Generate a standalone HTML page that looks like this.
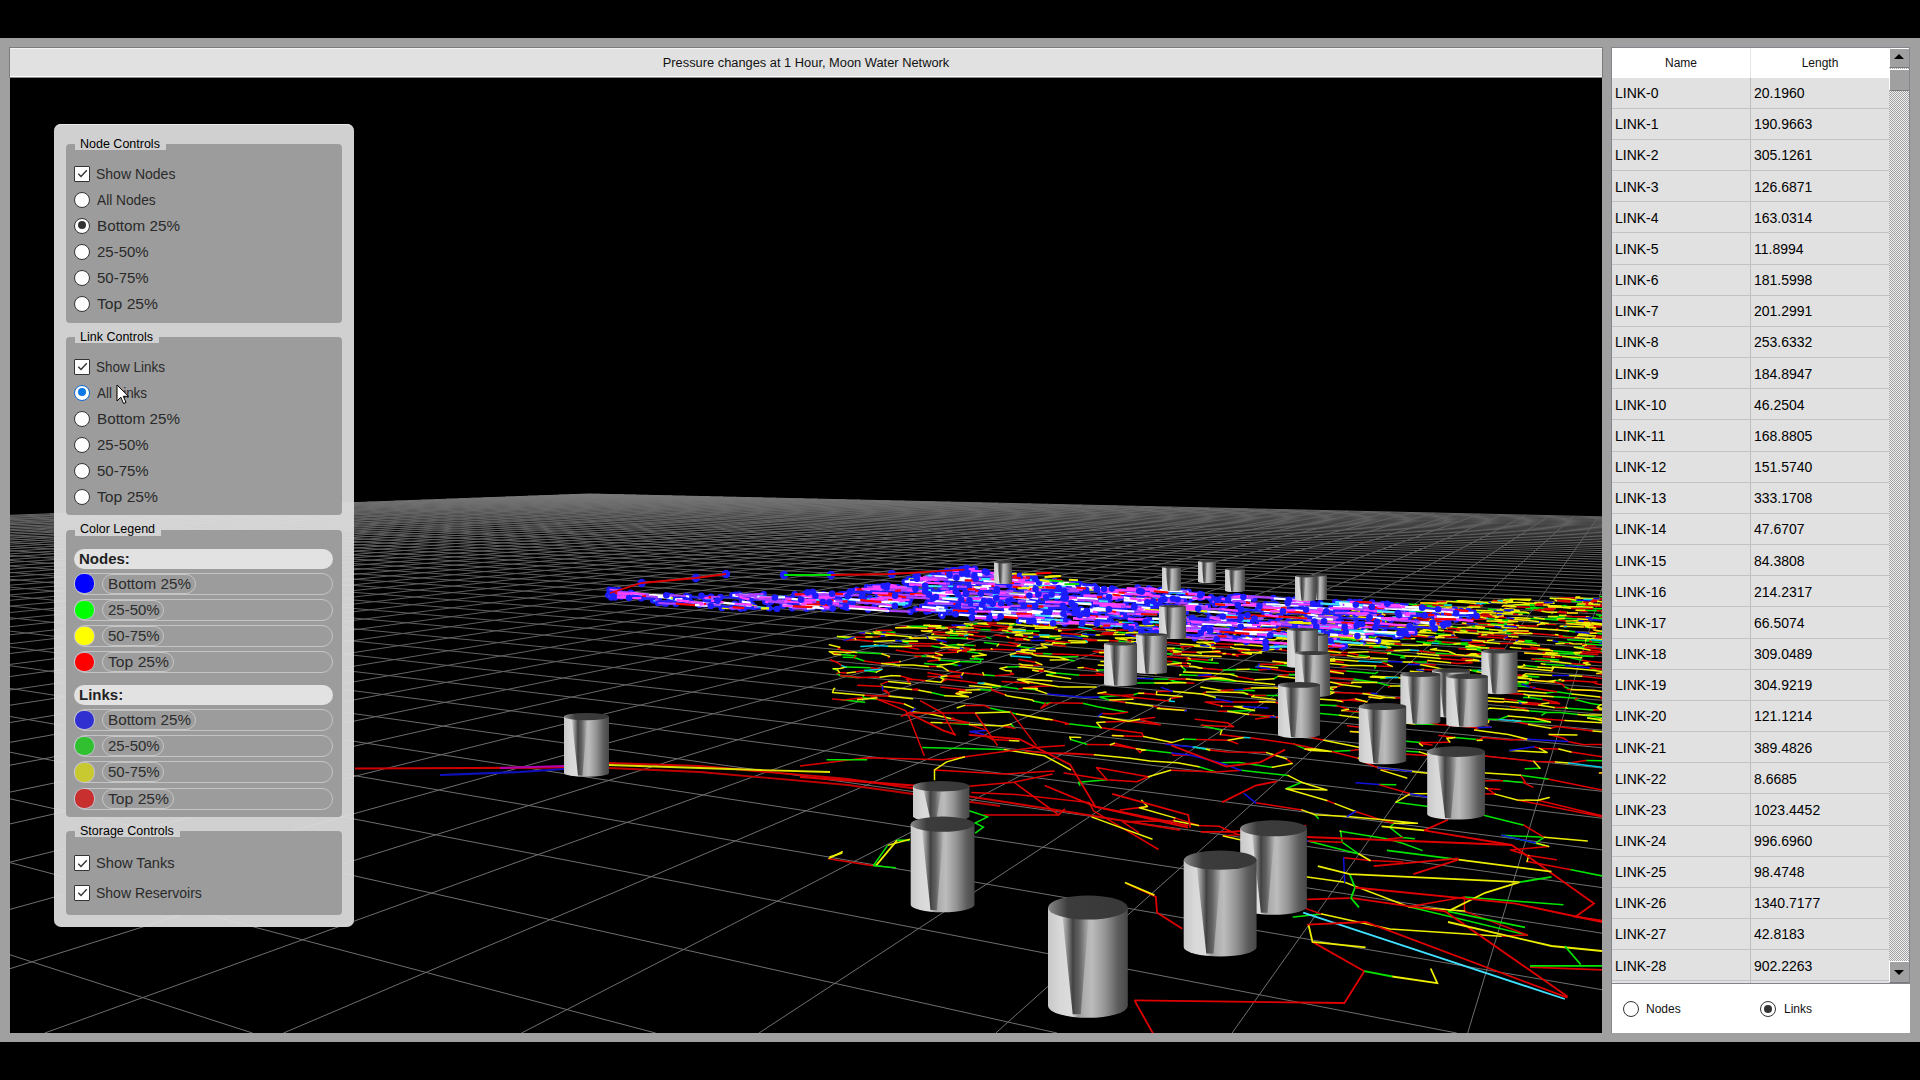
<!DOCTYPE html><html><head><meta charset="utf-8"><style>
*{box-sizing:border-box}
body{margin:0;width:1920px;height:1080px;background:#000;overflow:hidden;position:relative;font-family:"Liberation Sans",sans-serif;color:#1a1a1a}
.a{position:absolute}
#frame{left:0;top:38px;width:1920px;height:1004px;background:#a0a0a0}
#title{left:9px;top:47px;width:1594px;height:31px;background:#e1e1e1;border:1px solid #7c7c7c;border-bottom:1px solid #8a8a8a;box-shadow:inset 0 1px 0 #f2f2f2, inset 0 -1px 0 #fafafa;font-size:12.85px;text-align:center;line-height:30px;color:#111}
#view{left:10px;top:78px;width:1592px;height:955px;background:#000;overflow:hidden}
#tbl{left:1611px;top:47px;width:299px;height:937px;background:#e1e1e1;border:1px solid #82868c;overflow:hidden}
.hdr{top:0;height:30px;background:#fff;font-size:12px;line-height:31px;text-align:center;color:#111}
.cell{font-size:14px;color:#000;white-space:nowrap}
.rowline{left:0;width:277px;height:1px;background:#c3c3c3}
#bot{left:1611px;top:984px;width:299px;height:49px;background:#fff;border-left:1px solid #8a8a8a}
.radio{width:16px;height:16px;border-radius:50%;background:#fff;border:1.3px solid #333}
.radio.on::after{content:"";position:absolute;left:2.7px;top:2.7px;width:8px;height:8px;border-radius:50%;background:#333}
.radio.blue{border:1.5px solid #0b67d6}
.radio.blue::after{content:"";position:absolute;left:2.5px;top:2.5px;width:8px;height:8px;border-radius:50%;background:#0b78e8}
.chk{width:16px;height:16px;background:#fff;border:1.5px solid #333;border-radius:1px}
.lbl{font-size:14px;color:#2a2a2a;white-space:nowrap;line-height:16px}
#panel{left:54px;top:124px;width:300px;height:803px;background:rgba(221,221,221,0.94);border-radius:7px;box-shadow:inset 0 1px 0 #e8e8e8}
.grp{left:12px;width:276px;background:#9c9c9c;border-radius:4px}
.gt{left:21px;font-size:12.5px;color:#000;padding:0 6px 0 5px;line-height:14px;white-space:nowrap}
.pillh{left:20px;width:259px;height:20px;border-radius:10px;background:#e2e2e2;font-weight:bold;font-size:15px;line-height:20px;padding-left:5px;color:#222}
.pill{left:20px;width:259px;height:22px;border-radius:11px;border:1px solid #c4c4c4}
.dot{left:0.3px;top:0.8px;width:18.5px;height:18.5px;border-radius:46%;box-shadow:0 0 0 0.8px #c8c8d8}
.tp{left:27px;top:0px;height:20px;border-radius:10px;border:1px solid #c6c6c6;font-size:14px;line-height:18px;padding:0 5px;color:#2c2c2c;white-space:nowrap}
</style></head><body><div class="a" id="frame"></div><div class="a" id="title">Pressure changes at 1 Hour, Moon Water Network</div><div class="a" id="view"><svg width="1592" height="955" style="position:absolute;left:0;top:0"><defs><linearGradient id="gg" gradientUnits="userSpaceOnUse" x1="0" y1="494" x2="0" y2="760"><stop offset="0" stop-color="#7a7a7a"/><stop offset="0.08" stop-color="#626262"/><stop offset="0.4" stop-color="#5c5c5c"/><stop offset="1" stop-color="#6e6e6e"/></linearGradient><linearGradient id="cg" x1="0" y1="0" x2="1" y2="0"><stop offset="0" stop-color="#c8c8c8"/><stop offset="0.15" stop-color="#d8d8d8"/><stop offset="0.3" stop-color="#dcdcdc"/><stop offset="0.38" stop-color="#9a9a9a"/><stop offset="0.46" stop-color="#b0b0b0"/><stop offset="0.55" stop-color="#bcbcbc"/><stop offset="0.72" stop-color="#939393"/><stop offset="0.88" stop-color="#5c5c5c"/><stop offset="1" stop-color="#484848"/></linearGradient><linearGradient id="wg" x1="0" y1="0" x2="1" y2="0"><stop offset="0" stop-color="#3a3a3a" stop-opacity="0"/><stop offset="0.42" stop-color="#383838" stop-opacity="0.95"/><stop offset="1" stop-color="#3a3a3a" stop-opacity="0"/></linearGradient><linearGradient id="tg" x1="0" y1="0" x2="1" y2="0"><stop offset="0" stop-color="#8a8a8a"/><stop offset="0.25" stop-color="#3c3c3c"/><stop offset="1" stop-color="#383838"/></linearGradient></defs><g transform="translate(-10,-78)"><path d="M589.0 494.0L1602.0 516.8M579.3 494.4L1602.0 517.7M569.4 494.7L1602.0 518.6M559.3 495.1L1602.0 519.4M549.0 495.5L1602.0 520.4M538.5 495.9L1602.0 521.3M527.8 496.2L1602.0 522.3M516.9 496.6L1602.0 523.3M505.8 497.1L1602.0 524.4M494.5 497.5L1602.0 525.4M483.0 497.9L1602.0 526.5M471.2 498.3L1602.0 527.7M459.1 498.8L1602.0 528.9M446.8 499.2L1602.0 530.1M434.3 499.7L1602.0 531.3M421.5 500.2L1602.0 532.6M408.4 500.6L1602.0 534.0M395.0 501.1L1602.0 535.4M381.4 501.6L1602.0 536.8M367.4 502.1L1602.0 538.3M353.2 502.7L1602.0 539.9M338.6 503.2L1602.0 541.5M323.6 503.7L1602.0 543.2M308.3 504.3L1602.0 544.9M292.7 504.9L1602.0 546.7M276.7 505.5L1602.0 548.6M260.3 506.1L1602.0 550.6M243.5 506.7L1602.0 552.6M226.3 507.3L1602.0 554.8M208.7 508.0L1602.0 557.0M190.6 508.6L1602.0 559.3M172.1 509.3L1602.0 561.8M153.1 510.0L1602.0 564.4M133.5 510.7L1602.0 567.1M113.5 511.5L1602.0 569.9M92.9 512.2L1602.0 572.9M71.8 513.0L1602.0 576.0M50.1 513.8L1602.0 579.3M27.8 514.6L1602.0 582.8M10.0 515.7L1602.0 586.5M10.0 517.6L1602.0 590.5M10.0 519.7L1602.0 594.6M10.0 521.9L1602.0 599.1M10.0 524.3L1602.0 603.8M10.0 526.8L1602.0 608.8M10.0 529.5L1602.0 614.2M10.0 532.4L1602.0 620.0M10.0 535.5L1602.0 626.2M10.0 538.8L1602.0 632.9M10.0 542.4L1602.0 640.2M10.0 546.3L1602.0 648.1M10.0 550.6L1602.0 656.7M10.0 555.3L1602.0 666.0M10.0 560.4L1602.0 676.3M10.0 566.1L1602.0 687.7M10.0 572.4L1602.0 700.3M10.0 579.3L1602.0 714.3M10.0 587.2L1602.0 730.1M10.0 596.0L1602.0 747.8M10.0 606.1L1602.0 768.0M10.0 617.7L1602.0 791.3M10.0 631.1L1602.0 818.2M10.0 646.9L1602.0 849.9M10.0 665.7L1602.0 887.6M10.0 688.4L1602.0 933.2M10.0 716.5L1602.0 989.7M10.0 752.2L1456.7 1033.0M10.0 798.8L1057.0 1033.0M10.0 862.6L655.6 1033.0M10.0 954.8L252.5 1033.0M589.0 494.0L10.0 515.3M600.5 494.3L10.0 516.3M612.2 494.5L10.0 517.4M623.9 494.8L10.0 518.6M635.9 495.1L10.0 519.8M647.9 495.3L10.0 521.0M660.0 495.6L10.0 522.3M672.3 495.9L10.0 523.6M684.8 496.2L10.0 524.9M697.4 496.4L10.0 526.4M710.1 496.7L10.0 527.8M722.9 497.0L10.0 529.3M735.9 497.3L10.0 530.9M749.1 497.6L10.0 532.6M762.4 497.9L10.0 534.3M775.8 498.2L10.0 536.1M789.5 498.5L10.0 538.0M803.2 498.8L10.0 540.0M817.2 499.1L10.0 542.0M831.3 499.5L10.0 544.2M845.5 499.8L10.0 546.4M860.0 500.1L10.0 548.8M874.6 500.4L10.0 551.2M889.4 500.8L10.0 553.8M904.3 501.1L10.0 556.6M919.5 501.4L10.0 559.5M934.8 501.8L10.0 562.5M950.3 502.1L10.0 565.8M966.0 502.5L10.0 569.2M982.0 502.9L10.0 572.8M998.1 503.2L10.0 576.7M1014.4 503.6L10.0 580.8M1030.9 504.0L10.0 585.2M1047.7 504.3L10.0 589.9M1064.6 504.7L10.0 594.9M1081.8 505.1L10.0 600.3M1099.2 505.5L10.0 606.2M1116.9 505.9L10.0 612.5M1134.7 506.3L10.0 619.3M1152.9 506.7L10.0 626.7M1171.2 507.1L10.0 634.8M1189.8 507.5L10.0 643.7M1208.7 508.0L10.0 653.5M1227.8 508.4L10.0 664.4M1247.2 508.8L10.0 676.5M1266.8 509.3L10.0 690.0M1286.8 509.7L10.0 705.2M1307.0 510.2L10.0 722.5M1327.5 510.6L10.0 742.3M1348.3 511.1L10.0 765.2M1369.4 511.6L10.0 792.1M1390.8 512.1L10.0 823.9M1412.5 512.6L10.0 862.2M1434.5 513.1L10.0 909.4M1456.9 513.6L10.0 968.7M1479.6 514.1L44.8 1033.0M1502.6 514.6L283.5 1033.0M1526.0 515.1L521.5 1033.0M1549.8 515.6L759.0 1033.0M1573.9 516.2L995.8 1033.0M1598.4 516.7L1232.1 1033.0M1602.0 587.8L1467.7 1033.0" stroke="url(#gg)" stroke-width="1" fill="none"/><path d="M1290.4 625.3L1299.6 626.5M1309.6 625.1L1314.7 624.7M1314.7 624.7L1322.8 625.1M1321.3 625.5L1328.1 626.3M1328.1 626.3L1320.2 626.2M1326.8 624.7L1334.7 625.5M1357.5 628.6L1361.2 628.7M1361.2 628.7L1367.8 629.3M1328.2 627.9L1324.9 627.9M1341.3 624.8L1338.1 624.7M1341.3 624.8L1348.4 624.6M1361.5 625.3L1359.0 624.9M1340.4 623.4L1339.0 623.5M1375.9 625.3L1380.9 626.4M1389.7 627.2L1394.8 627.3M1400.2 625.7L1403.6 625.8M1410.2 625.6L1412.9 625.0M1429.4 627.5L1436.5 628.4M1441.2 630.5L1431.2 630.1M1432.1 630.8L1430.6 630.8M1430.6 630.8L1425.5 631.0M1429.4 627.5L1437.7 627.4M1278.8 626.5L1271.9 626.1M1256.6 626.1L1255.0 626.3M1243.7 626.2L1238.6 625.9M1280.2 628.6L1275.4 629.0M1452.1 626.8L1457.9 627.4M1471.1 626.7L1475.7 626.3M1471.1 626.7L1484.3 627.6M1483.7 628.5L1489.6 629.6M1503.4 630.4L1509.7 631.1M1515.0 632.4L1514.3 633.1M1514.5 633.7L1506.0 633.1M1492.6 632.5L1486.6 632.6M1477.9 631.7L1477.0 631.0M1466.1 630.2L1456.5 629.9M1477.0 631.0L1478.0 630.0M1301.6 633.1L1314.0 633.8M1314.0 633.8L1325.3 634.7M1365.1 637.9L1375.9 638.3M1402.1 644.9L1397.5 645.2M1397.5 645.2L1389.3 644.5M1389.3 644.5L1386.2 644.9M1363.0 643.7L1361.3 644.4M1386.6 647.6L1372.6 647.2M1323.8 635.4L1315.2 635.8M1315.2 635.8L1324.6 637.1M1375.3 637.1L1359.8 636.5M1337.4 636.9L1340.3 638.3M1308.9 632.1L1297.8 630.8M1297.8 630.8L1293.7 630.0M1297.1 630.0L1297.6 629.1M1356.6 639.7L1352.8 640.2M1327.3 630.2L1340.8 630.8M1304.4 638.2L1307.3 639.0M1305.8 637.8L1319.1 638.4M1290.7 638.1L1289.5 639.0M1216.8 634.7L1203.2 633.1M1203.2 633.1L1200.0 632.4M1183.2 628.4L1186.3 628.2M1450.4 625.1L1446.7 624.6M1446.7 624.6L1448.5 624.6M1238.6 625.9L1226.7 626.1M1214.0 624.9L1219.0 624.7M1214.1 624.9L1208.4 625.1M1264.1 640.9L1271.7 642.4M1406.7 632.1L1395.5 631.6M1435.8 633.5L1451.9 635.1M1411.5 638.8L1400.9 639.0M1154.7 632.4L1161.7 633.5M1172.7 633.3L1177.5 633.6M1126.4 633.0L1117.4 632.2M1102.4 633.3L1105.6 634.2M1082.7 634.0L1086.3 633.4M1126.6 642.4L1118.6 642.5M1150.2 645.4L1157.1 646.5M1126.6 642.4L1119.8 641.2M1119.8 641.2L1118.1 640.9M1174.2 648.2L1183.5 648.9M1123.7 645.9L1123.3 646.0M1123.7 645.9L1113.9 644.8M1087.8 636.5L1074.1 636.3M1043.4 635.6L1040.1 635.5M1040.1 636.2L1039.1 636.5M1029.8 637.2L1026.6 636.8M1048.8 637.5L1060.7 638.5M1031.4 633.6L1020.5 632.9M1020.5 632.9L1018.0 632.6M1012.2 632.2L1006.6 632.2M990.7 630.0L980.2 629.4M980.2 629.4L978.7 630.0M965.0 626.2L967.4 626.6M964.8 625.4L971.7 625.6M945.8 627.3L940.0 627.1M945.8 627.3L947.6 628.1M929.0 626.3L917.0 626.3M917.0 626.3L907.2 626.6M1013.1 629.9L1007.9 628.8M1025.3 630.7L1039.0 631.2M972.7 624.3L977.7 623.4M1173.7 652.1L1178.3 653.4M1173.0 653.8L1159.8 653.4M1159.8 653.4L1158.7 654.0M1200.9 653.2L1201.3 653.6M1086.1 640.8L1083.7 641.3M1071.0 642.7L1064.9 643.7M1064.9 643.7L1054.3 642.6M1150.0 634.6L1146.0 635.0M1401.5 633.2L1382.4 631.9M1013.9 623.7L1016.4 624.5M1016.4 624.5L1009.8 624.8M1009.8 624.8L1011.3 625.4M1034.7 626.2L1036.3 627.5M1084.6 629.3L1094.7 630.3M1552.1 635.0L1558.0 634.9M1562.4 636.0L1575.1 637.4M1591.0 638.7L1590.3 639.4M1591.3 639.8L1586.1 639.5M1633.7 641.2L1636.2 641.2M1602.6 637.7L1610.1 637.2M1618.8 636.9L1616.6 636.1M1616.6 636.1L1617.2 635.9M1585.6 640.8L1588.5 641.3M1588.5 641.3L1589.5 641.4M1585.6 640.8L1567.7 639.8M1591.5 641.7L1611.2 643.1M1605.9 644.5L1614.9 645.6M1614.9 645.6L1612.4 645.8M1612.4 645.8L1602.6 645.4M1602.6 645.4L1590.9 644.2M1590.9 644.2L1581.5 644.0M1569.6 643.0L1557.6 641.8M1616.3 647.6L1624.6 649.2M1626.3 649.9L1638.5 650.7M1613.2 649.0L1612.7 649.4M1612.7 649.4L1601.7 649.0M1608.5 652.3L1600.0 651.3M1584.6 647.5L1574.4 647.3M1581.1 651.7L1581.2 652.3M1575.4 654.1L1557.4 653.2M1545.2 653.8L1559.7 655.4M1559.7 655.4L1567.9 656.7M1567.9 656.7L1572.9 658.2M1543.5 656.5L1543.4 656.5M1572.9 658.2L1582.1 660.3M1586.1 664.8L1582.2 665.2M1615.6 634.8L1596.2 633.3M1575.7 632.1L1568.5 631.0M1573.9 652.6L1552.5 650.8M1547.6 649.8L1538.2 649.2M1621.1 657.4L1624.6 658.8M1575.4 654.1L1581.7 656.1M1581.7 656.1L1593.5 656.4M1272.3 634.8L1257.5 633.6M1237.0 633.2L1232.6 632.3M1209.9 631.1L1201.7 630.4M1201.7 630.4L1205.1 629.9M1221.7 628.4L1223.9 629.2M1236.8 630.3L1237.4 631.2M1221.7 628.4L1231.9 627.8M1423.6 643.9L1432.5 643.3M1438.4 643.5L1448.9 644.6M1448.9 644.6L1454.0 644.0M1460.0 642.9L1468.6 643.1M1454.0 644.0L1469.3 645.1M1442.1 642.1L1427.7 640.8M1481.8 648.8L1476.3 649.5M1481.8 648.8L1465.4 647.6M1432.5 643.3L1416.9 641.5M952.5 630.8L952.3 631.4M952.3 631.4L956.4 631.6M966.9 631.7L966.1 631.8M945.8 632.4L948.2 632.9M959.1 635.3L946.8 635.2M985.8 636.8L985.8 636.5M985.8 636.8L990.9 638.6M1523.6 641.7L1529.2 641.7M1524.3 640.4L1532.0 640.8M1523.6 641.7L1536.2 643.3M1210.6 646.7L1209.0 646.2M1206.0 645.7L1200.8 645.5M1234.5 644.5L1235.6 644.7M1055.4 623.9L1061.9 623.9M1033.8 622.8L1035.3 623.3M1024.2 622.4L1023.0 622.1M1023.0 622.1L1023.9 622.0M1029.9 621.3L1035.0 621.5M1097.8 625.3L1102.2 626.8M1115.6 624.1L1105.2 623.4M1620.2 664.8L1617.2 665.1M1613.7 662.3L1610.0 660.9M1153.2 625.6L1161.8 625.6M1582.2 665.2L1565.4 665.4M1565.4 665.4L1544.7 664.3M1596.4 669.8L1592.0 670.2M1552.6 666.9L1553.4 668.0M1537.8 666.9L1525.0 665.6M1521.4 666.4L1511.9 665.2M1158.7 654.0L1162.3 656.2M1163.8 657.5L1164.0 657.6M1208.0 660.1L1212.0 660.1M1488.1 624.8L1477.8 624.1M1490.0 623.7L1507.6 624.8M1507.4 624.0L1503.5 623.1M1555.8 624.4L1548.1 623.5M1499.0 620.7L1508.6 620.8M1508.6 620.8L1501.6 620.1M1495.0 619.3L1487.5 618.6M1501.6 620.1L1509.7 620.1M1526.6 620.2L1529.9 620.2M1466.8 616.3L1456.2 615.3M1456.2 615.3L1442.9 614.7M1423.4 610.7L1417.9 610.3M1414.7 610.3L1418.7 610.7M1459.0 613.3L1461.4 614.2M1425.3 611.8L1414.7 611.8M1411.0 612.9L1410.0 613.0M1452.5 611.1L1455.4 611.2M1455.4 611.2L1461.5 611.1M1469.8 611.6L1481.6 612.3M1462.0 609.7L1456.2 609.2M1456.2 609.2L1449.2 608.4M1449.2 608.4L1445.4 608.5M1438.3 606.5L1426.3 605.9M1413.1 605.9L1416.9 606.3M1426.3 605.9L1433.0 605.5M1433.0 605.5L1421.7 604.8M1421.7 604.8L1408.2 604.3M1402.6 603.9L1402.5 604.1M1402.6 603.9L1395.9 603.2M1530.0 618.4L1544.3 618.9M1544.3 618.9L1557.5 619.1M1514.0 612.6L1528.7 613.0M1491.3 614.7L1497.2 614.9M1564.6 618.6L1578.0 619.1M1591.0 619.6L1587.7 618.5M1591.8 617.8L1603.7 618.9M1622.2 617.8L1623.5 617.3M1601.1 617.0L1599.5 616.3M1614.4 616.2L1623.0 616.2M1625.4 619.6L1638.5 620.7M1619.0 621.4L1625.2 621.7M1635.2 622.4L1638.6 622.7M1603.2 622.3L1609.8 623.3M1501.9 609.8L1501.3 609.7M1497.0 610.0L1488.4 609.1M1636.4 616.2L1627.2 615.0M1627.2 615.0L1621.5 614.9M1428.3 608.9L1432.0 609.2M1415.0 609.2L1401.9 608.9M1413.3 615.4L1412.2 615.2M1406.0 614.7L1401.9 615.1M1544.3 618.9L1558.6 620.3M1603.2 624.0L1592.3 624.1M1583.1 627.0L1587.9 627.4M1620.3 626.6L1610.5 626.4M1451.3 616.1L1452.9 616.7M1392.5 604.5L1386.3 604.9M1386.3 604.9L1384.8 605.6M1384.8 605.6L1381.6 606.0M1373.6 606.3L1368.8 606.5M1399.9 613.4L1395.7 613.2M1360.2 609.8L1351.7 609.0M1377.9 610.0L1387.6 611.4M1614.4 616.2L1596.5 614.8M1451.4 605.1L1437.5 603.8M1429.0 602.9L1437.9 603.0M1436.1 602.5L1436.9 601.7M1443.9 601.9L1446.9 601.5M1484.0 603.4L1488.1 603.3M1489.6 602.9L1489.0 602.4M1479.2 605.3L1482.5 605.8M1493.4 600.5L1494.1 600.7M1504.6 600.6L1503.3 600.4M1503.3 600.4L1504.3 599.8M1529.3 604.5L1535.1 605.0M1536.1 605.1L1535.0 605.5M1561.0 605.9L1571.4 606.7M1592.2 607.2L1593.1 607.3M1561.0 605.9L1566.0 605.5M1504.3 599.8L1510.4 599.3M1189.7 624.5L1198.9 626.0M1198.9 626.0L1192.8 626.5M1318.6 622.8L1305.7 621.6M1170.1 635.5L1170.8 636.8M1535.0 605.5L1516.3 604.7M1042.5 653.6L1052.3 653.9M1077.8 655.1L1077.6 656.6M1110.1 657.2L1114.8 657.5M1068.2 659.7L1074.1 660.8M1531.9 658.9L1541.0 658.8M1541.0 658.8L1558.6 659.9M1550.7 661.0L1535.5 661.3M1367.0 612.6L1363.2 612.6M1334.5 611.8L1340.4 611.7M1361.3 612.9L1368.5 613.8M1352.9 615.7L1357.3 616.7M1366.5 617.8L1358.6 618.1M1376.8 619.7L1379.3 619.5M1376.8 619.7L1381.3 620.5M1355.0 618.4L1351.8 618.9M1338.9 619.0L1330.0 618.9M1340.4 611.7L1342.3 610.9M1335.1 620.1L1330.9 620.5M1322.4 620.2L1327.4 620.6M1315.7 617.5L1305.7 616.7M1401.7 619.0L1404.5 619.8M1108.0 649.3L1104.5 651.1M1099.5 652.6L1101.7 653.0M1358.2 654.9L1369.1 656.6M1476.3 649.5L1482.0 651.6M1564.0 607.3L1563.7 607.6M1592.6 608.4L1608.0 609.1M1597.3 610.7L1598.8 610.6M1597.3 610.7L1584.8 610.2M1555.3 608.7L1547.3 608.4M1547.3 608.4L1544.1 608.8M1538.8 609.4L1534.3 609.8M1538.8 609.4L1526.1 608.4M1547.3 608.4L1529.6 607.3M1556.7 612.2L1567.7 612.4M1553.3 612.7L1551.8 613.6M1622.7 608.5L1622.4 607.4M1622.4 607.4L1633.2 607.9M1633.2 607.9L1634.1 607.7M1585.3 605.2L1577.3 604.8M1577.3 604.8L1576.7 605.0M1577.3 604.8L1577.9 604.1M1585.3 604.0L1579.3 603.5M1582.8 602.1L1570.8 600.9M1590.1 600.4L1597.0 600.1M1550.3 598.2L1554.2 598.7M1594.0 598.5L1598.0 598.7M1618.8 598.2L1611.2 597.6M1611.2 597.6L1607.4 598.0M1611.2 597.6L1600.3 596.5M1034.8 648.4L1017.3 646.2M998.6 644.3L984.4 642.4M1571.4 616.4L1557.1 616.6M1633.7 596.4L1631.9 595.9M1158.7 661.0L1164.2 661.6M1172.0 661.6L1181.3 663.1M1222.3 670.1L1236.8 669.5M1249.1 669.2L1259.1 669.9M1255.9 667.0L1258.2 665.9M1311.7 666.6L1315.8 666.6M1312.2 671.6L1318.3 671.3M1186.6 660.0L1207.7 662.6M1207.7 662.6L1218.2 663.3M1305.7 616.7L1309.7 615.6M1156.7 640.1L1164.9 638.8M1470.7 660.2L1473.5 659.4M1500.3 661.0L1497.0 659.7M1495.2 655.4L1494.2 656.0M1455.8 654.4L1435.0 653.0M1435.0 653.0L1430.2 652.4M1423.5 651.4L1428.9 651.3M1404.7 655.9L1400.8 657.4M1400.8 657.4L1405.0 657.9M1404.7 655.9L1387.6 653.5M1410.2 649.9L1399.2 650.8M1427.5 661.9L1412.3 662.1M1388.1 661.4L1381.7 661.8M1381.7 661.8L1381.7 662.2M1324.5 658.8L1316.4 657.6M1305.7 655.9L1294.3 654.5M1375.8 666.1L1374.8 668.2M975.1 649.7L970.6 648.8M970.6 648.8L962.4 648.6M975.1 649.7L981.4 650.6M962.9 647.6L950.0 646.9M950.0 646.9L947.1 645.4M941.1 647.7L931.0 646.1M966.5 651.6L979.1 653.2M947.1 645.4L957.7 644.6M963.9 645.0L975.2 645.6M909.2 643.3L901.6 641.3M940.2 643.5L942.6 641.9M877.9 636.7L872.0 637.0M874.7 633.5L870.5 633.4M864.7 632.8L859.8 632.3M879.9 632.0L882.8 632.4M883.6 632.4L885.3 632.3M885.3 632.3L894.9 632.3M879.9 632.0L876.3 630.4M973.5 657.4L981.1 659.2M981.1 659.2L983.2 659.3M981.1 659.2L970.2 658.8M902.0 646.5L892.3 646.5M892.3 646.5L887.7 646.2M945.9 637.7L967.3 638.5M1470.9 670.2L1478.5 670.3M1470.9 670.2L1477.2 671.7M1487.1 672.9L1498.9 673.3M1527.5 676.5L1538.7 677.1M1555.5 680.5L1562.1 680.8M1562.1 680.8L1563.2 680.6M1413.1 676.2L1433.7 678.7M1465.9 678.6L1457.2 679.0M1487.3 680.4L1484.4 680.4M1499.2 682.3L1510.8 683.0M1510.8 683.0L1522.1 684.3M1522.1 684.3L1529.3 683.5M1530.2 682.9L1526.4 681.9M1529.2 686.7L1517.0 686.1M1564.4 686.7L1571.2 689.6M1556.5 691.7L1571.8 693.9M1556.5 691.7L1546.0 692.9M1504.1 691.6L1491.7 690.5M1499.7 688.5L1481.7 687.0M1553.2 696.7L1577.2 698.2M1528.9 697.6L1523.7 697.4M1528.9 697.6L1542.7 699.6M1527.1 702.6L1516.8 700.5M1554.1 707.6L1567.1 708.3M1567.1 708.3L1593.4 709.9M1436.7 688.7L1443.6 690.5M1419.5 687.0L1399.9 685.9M1466.8 694.3L1462.9 693.7M1600.3 704.9L1589.9 703.3M1390.5 685.9L1377.0 682.5M1377.0 682.5L1363.0 680.4M1363.0 680.4L1353.1 678.9M1328.7 677.7L1326.9 676.7M1333.0 689.4L1320.0 690.3M1405.2 683.4L1412.0 681.3M1385.6 677.7L1372.8 676.2M1385.6 677.7L1380.8 678.6M1442.6 682.6L1449.8 683.2M1243.1 689.3L1254.4 690.7M1222.9 690.2L1220.1 690.2M1238.7 692.6L1247.7 694.2M1265.9 695.5L1276.0 695.4M1215.1 697.3L1215.7 698.8M1316.1 705.1L1337.0 705.6M1382.5 714.0L1390.0 715.7M1421.3 716.7L1421.5 717.7M1382.7 719.6L1368.5 719.5M1362.2 719.3L1359.5 719.7M1414.2 724.0L1438.6 724.6M1420.1 714.3L1450.9 716.7M1484.0 718.9L1498.9 719.5M1474.6 722.2L1470.9 722.5M1339.8 715.3L1309.7 712.4M1470.9 722.5L1491.2 727.1M1276.0 695.4L1305.2 697.9M1520.5 721.3L1550.3 722.1M1479.9 739.6L1476.8 739.4M1476.8 739.4L1454.9 737.4M1420.8 742.4L1403.2 741.1M1391.0 737.3L1382.2 735.5M1376.8 733.5L1380.9 732.6M1403.7 697.8L1416.6 700.1M1432.6 702.3L1449.2 702.8M1457.9 600.7L1456.3 600.8M1138.5 693.3L1133.2 694.7M1345.9 670.9L1375.3 673.4M1375.3 673.4L1377.6 672.1M1109.7 700.0L1099.0 697.0M1182.3 667.1L1185.4 670.0M1185.4 670.0L1183.6 672.1M1229.8 674.2L1233.8 673.9M1198.4 675.6L1180.7 674.7M1236.1 680.9L1233.6 681.3M1168.9 679.2L1152.9 678.7M1152.9 678.7L1144.0 678.2M1119.3 677.4L1107.8 675.3M1168.9 679.2L1175.4 681.5M1175.4 681.5L1185.9 682.8M1105.3 670.0L1096.4 669.9M1128.8 670.8L1133.6 670.4M1128.8 670.8L1112.8 668.4M1119.7 667.0L1137.8 667.3M1175.4 681.5L1167.1 683.6M1617.2 744.2L1634.2 749.3M1634.2 749.3L1625.9 750.1M1254.5 710.6L1227.7 711.2M1252.0 714.6L1270.4 716.9M1609.0 760.8L1637.9 763.3M1609.0 760.8L1585.9 760.4M1637.9 763.3L1634.1 766.3M1621.9 774.5L1623.8 777.0M1605.4 718.3L1582.8 715.1M1578.1 714.4L1559.8 712.5M1559.8 712.5L1546.4 712.3M1546.4 712.3L1528.5 710.7M1546.4 712.3L1541.9 715.1M981.1 659.2L980.2 662.2M980.2 662.2L959.2 661.4M950.0 664.1L958.3 665.4M940.0 665.0L937.0 666.4M940.0 665.0L924.8 663.6M959.2 661.4L939.1 660.0M927.1 656.1L920.9 656.5M864.3 661.0L854.3 657.5M854.3 657.5L843.3 657.3M855.8 655.7L840.5 654.6M856.5 652.6L881.7 653.7M1079.7 675.3L1055.6 673.0M1039.7 670.5L1032.8 670.3M1019.6 666.8L1006.7 666.9M1011.1 670.9L1010.9 672.7M1055.6 673.0L1046.5 674.9M995.4 675.7L983.8 674.9M960.7 675.9L946.8 676.1M939.2 676.8L946.6 679.3M1000.1 686.3L991.2 687.6M1000.1 686.3L1018.9 688.9M1023.5 688.2L1035.9 689.7M1035.9 689.7L1037.3 688.6M992.1 690.3L981.8 689.7M981.8 689.7L979.7 689.7M944.9 695.8L931.1 692.5M840.5 675.8L837.1 673.4M837.7 670.2L833.2 668.8M864.7 670.5L876.3 672.1M882.6 686.6L881.0 684.1M864.0 695.3L862.4 697.8M862.4 697.8L880.5 699.7M844.2 699.9L841.4 699.7M844.2 699.9L864.6 702.2M969.3 722.9L969.5 724.6M969.5 724.6L941.8 722.7M1033.5 701.0L1045.4 703.4M1045.4 703.4L1051.0 702.7M1082.5 703.2L1097.6 706.7M1403.7 697.8L1419.8 695.6M1488.5 708.6L1467.5 710.4M1539.9 768.2L1525.1 768.7M1119.3 677.4L1108.3 680.3M1097.6 706.7L1127.5 712.3M1101.2 727.7L1068.6 723.8M1183.4 739.1L1196.8 739.5M1221.8 730.3L1201.4 725.3M1272.4 767.3L1237.3 762.2M1237.3 762.2L1220.2 762.8M1215.9 771.9L1198.9 766.8M1240.8 770.3L1288.0 775.4M1171.8 753.0L1145.5 749.9M1087.6 744.5L1070.7 739.5M1331.2 751.4L1350.8 750.5M1358.3 758.2L1387.5 759.5M1461.8 776.1L1464.8 774.7M1458.2 776.4L1483.2 780.8M1502.6 780.7L1523.4 782.5M1520.5 775.2L1549.0 779.3M1378.7 784.6L1395.7 784.7M1016.6 713.9L989.8 708.0M1394.0 823.2L1389.8 827.4M1315.0 814.8L1318.3 818.4M1389.8 827.4L1402.7 837.6M1402.7 837.6L1414.3 838.7M1387.9 839.1L1402.5 843.3M1402.5 843.3L1422.0 850.4M1387.9 839.1L1340.6 831.3M1340.6 831.3L1342.3 842.3M1342.3 842.3L1358.9 854.0M1107.0 779.7L1078.5 782.3M1078.5 782.3L1079.9 785.5M1473.9 806.1L1471.7 812.2M1471.7 812.2L1523.9 825.2M1544.2 837.3L1501.8 835.2M1570.0 869.6L1619.9 879.4M1471.7 812.2L1396.0 802.2M1464.4 897.0L1562.9 904.8M1321.7 914.1L1293.3 917.1M1032.3 654.3L1026.1 652.6M1378.3 628.1L1383.3 629.1M1134.2 642.7L1143.2 642.7M1620.4 625.6L1637.2 626.4M1381.3 620.5L1379.3 619.5M1325.9 640.2L1307.3 639.0M1460.0 642.9L1442.1 642.1M1423.2 609.4L1415.0 609.2M871.0 667.7L846.0 667.1M1077.6 656.6L1058.6 657.3M1530.2 682.9L1511.1 681.4M1587.1 611.4L1576.1 610.3M1516.8 626.9L1524.4 627.4M1251.3 636.4L1252.6 637.9M1445.9 607.2L1438.3 606.5M896.4 665.0L887.0 662.9M1524.3 640.4L1516.3 640.7M1424.5 708.5L1467.5 710.4M1548.5 616.5L1564.6 618.6M1585.3 604.0L1588.8 603.7M1367.0 612.6L1359.7 611.9M1243.2 706.4L1238.2 707.2M1488.6 647.9L1476.9 646.8M1029.8 637.2L1027.6 636.5M1575.3 699.6L1589.9 703.3M1153.4 651.4L1140.3 651.3M1062.7 641.9L1054.3 642.6M1432.0 625.7L1425.2 625.3M1498.9 719.5L1508.2 716.0M1442.1 642.1L1433.9 640.5M1390.6 653.0L1368.1 651.8M1501.8 835.2L1548.6 846.4M1119.6 695.5L1099.0 697.0M1175.3 628.3L1174.4 627.6M1117.9 683.1L1154.9 683.0M1094.7 630.3L1091.7 629.1M1272.5 664.4L1296.0 666.5M1361.3 612.9L1361.2 612.3M1342.1 654.7L1327.6 654.4M1376.6 635.8L1375.3 637.1M1039.5 634.9L1043.4 635.6M1582.7 602.1L1593.3 602.3M1173.0 650.3L1155.3 648.9M1440.4 608.2L1445.0 608.8M1620.4 625.6L1617.7 626.2M927.1 656.1L914.8 656.3M1301.7 782.3L1286.1 788.7M1011.1 637.9L1007.0 636.6M1635.8 636.2L1624.7 635.0M1538.7 677.1L1522.9 675.4M1317.3 674.9L1288.3 674.4M1501.3 609.7L1497.0 610.0M1427.7 607.6L1412.2 606.6M1429.0 602.9L1434.8 603.8M907.1 636.6L912.2 637.8M1031.3 640.5L1023.9 639.1M896.2 640.5L917.4 641.3M975.2 645.6L957.7 644.6M1366.6 713.3L1341.8 710.6M1191.8 631.2L1187.0 630.5M1372.6 647.2L1390.7 647.4M1120.9 661.5L1109.5 658.9M1599.2 719.9L1587.7 718.0M1449.6 651.8L1453.0 653.2M1588.5 641.3L1591.5 641.7M1460.1 643.5L1469.3 645.1M1105.6 634.2L1099.4 635.0M1577.9 604.1L1585.3 605.2M1254.0 695.6L1276.0 695.4M1535.7 842.9L1544.2 837.3M855.7 639.4L837.5 636.4M1340.3 638.3L1356.6 639.7M1131.5 632.2L1134.9 630.9M1361.3 644.4L1380.6 646.1M1233.6 681.3L1208.4 679.1M1193.2 747.1L1209.6 750.0M1205.7 628.5L1210.9 628.4M946.8 635.2L932.0 634.5M1456.3 600.8L1462.7 600.7M1011.1 724.2L1014.6 728.3M1466.1 646.4L1465.4 647.6M1304.9 748.9L1293.7 743.9M1576.2 622.6L1565.8 623.2M1419.3 751.9L1366.1 748.8M1619.4 619.1L1624.1 619.0M1040.1 635.5L1052.2 636.2M1478.0 655.1L1492.1 656.5M1353.2 612.1L1342.3 610.9M1282.7 622.2L1283.7 622.9M1636.5 598.5L1624.1 597.5M1234.2 689.7L1254.4 690.7M1358.9 854.0L1307.9 841.0M879.9 632.0L883.6 632.4M1492.6 632.5L1493.1 633.7M1451.3 616.1L1456.2 615.3M840.5 675.8L857.9 677.8M1408.8 906.8L1527.4 935.0M1528.5 710.7L1510.5 706.4M1366.6 713.3L1389.3 715.7M1325.3 634.7L1323.8 635.4M1273.8 678.8L1278.2 676.2" stroke="#00e400" stroke-width="1.5" fill="none" stroke-linecap="round"/><path d="M1290.4 625.3L1296.2 624.6M1296.2 624.6L1305.4 625.7M1309.4 625.7L1309.6 625.1M1322.8 625.1L1321.3 625.5M1314.7 624.7L1312.9 624.0M1301.4 623.7L1299.0 623.7M1293.3 623.1L1285.3 622.8M1283.7 622.9L1287.7 623.3M1285.3 622.8L1282.7 622.2M1322.8 625.1L1326.8 624.7M1280.2 622.7L1269.5 622.2M1347.7 627.3L1356.4 627.7M1357.5 628.6L1357.4 629.3M1328.2 627.9L1335.5 628.9M1334.7 625.5L1341.4 625.2M1341.4 625.2L1341.3 624.8M1366.8 625.4L1375.9 625.3M1380.9 626.4L1385.4 627.0M1385.4 627.0L1389.7 627.2M1394.8 627.3L1395.3 627.7M1380.9 626.4L1371.8 626.7M1371.8 626.7L1369.3 627.0M1369.3 627.0L1378.3 628.1M1388.6 625.7L1400.2 625.7M1396.8 624.9L1398.8 624.5M1403.6 625.8L1410.2 625.6M1416.6 626.6L1429.4 627.5M1431.2 630.1L1427.5 629.9M1431.2 630.1L1432.1 630.8M1425.2 625.3L1427.3 625.9M1446.6 628.2L1460.8 628.8M1349.5 622.5L1349.0 622.1M1288.4 626.6L1291.5 627.1M1288.4 626.6L1278.8 626.5M1271.9 626.1L1274.1 625.8M1255.0 626.3L1243.7 626.2M1260.2 624.5L1256.1 624.3M1272.3 627.3L1280.2 628.6M1442.9 630.5L1453.8 632.0M1478.1 633.7L1482.4 634.3M1464.6 627.4L1465.7 627.4M1509.7 631.1L1515.0 632.4M1514.3 633.1L1514.5 633.7M1514.5 633.7L1517.3 634.5M1517.3 634.5L1511.4 634.4M1477.0 631.0L1466.1 630.2M1456.5 629.9L1460.2 630.7M1273.4 629.6L1281.8 631.1M1287.6 631.8L1287.4 632.4M1287.4 632.4L1301.6 633.1M1330.3 635.6L1323.8 635.4M1337.4 636.9L1350.3 637.3M1350.3 637.3L1359.5 638.2M1365.1 637.9L1371.7 639.1M1371.7 639.1L1377.7 639.7M1374.2 640.3L1373.1 640.9M1373.1 640.9L1380.4 641.4M1394.0 644.1L1396.7 643.6M1394.0 644.1L1402.1 644.9M1372.6 647.2L1369.4 647.2M1325.3 634.7L1325.2 633.5M1318.1 632.1L1308.9 632.1M1297.8 630.8L1295.8 630.8M1293.7 630.0L1297.1 630.0M1373.1 640.9L1356.6 639.7M1327.3 630.7L1327.3 630.2M1309.3 636.8L1303.5 637.4M1305.8 637.8L1304.4 638.2M1309.3 636.8L1298.4 635.5M1331.2 639.4L1325.9 640.2M1304.4 638.2L1290.7 638.1M1330.7 633.6L1347.2 634.1M1252.6 637.9L1251.2 637.9M1243.7 637.1L1247.7 636.6M1216.8 634.7L1204.5 634.7M1200.0 632.4L1191.8 631.2M1181.0 631.3L1175.2 630.1M1175.2 630.1L1177.8 629.3M1175.3 628.3L1179.0 628.4M1179.0 628.4L1174.4 627.6M1448.5 624.6L1446.7 623.9M1481.8 635.0L1482.6 636.3M1482.6 636.3L1482.8 636.8M1482.8 636.8L1478.4 636.7M1376.6 635.8L1383.9 636.2M1397.7 636.6L1394.0 635.8M1394.0 635.8L1398.1 635.6M1398.1 635.6L1410.0 635.7M1395.8 635.3L1395.5 634.2M1410.0 635.7L1428.6 637.0M1428.6 637.0L1434.5 637.2M1434.5 637.2L1434.6 636.8M1417.9 634.8L1412.6 634.2M1412.6 634.2L1416.4 633.6M1412.6 634.2L1401.5 633.2M1416.4 633.6L1413.6 632.4M1413.6 632.4L1406.7 632.1M1413.6 632.4L1418.9 632.3M1439.9 636.5L1457.7 637.5M1454.1 634.2L1452.9 633.5M1394.9 637.1L1411.5 638.8M1288.5 639.2L1294.6 640.9M1293.8 644.0L1298.5 644.7M1175.2 630.1L1158.6 629.7M1158.6 629.7L1154.5 629.8M1158.6 629.7L1153.5 628.7M1137.4 627.7L1136.0 628.4M1136.0 628.4L1131.0 628.3M1114.8 632.7L1106.9 632.6M1106.9 632.6L1102.4 633.3M1105.6 634.2L1100.4 634.4M1100.4 634.4L1099.4 635.0M1105.6 634.2L1113.6 634.5M1081.9 634.7L1081.9 635.6M1127.0 639.9L1130.2 640.8M1130.2 640.8L1131.7 641.5M1143.9 643.8L1146.1 644.3M1146.1 644.3L1136.4 644.1M1118.1 640.9L1108.5 640.6M1157.1 646.5L1161.9 647.9M1133.2 646.4L1134.1 646.9M1123.3 646.0L1124.3 646.5M1113.9 644.8L1106.3 644.6M1124.3 646.5L1111.8 646.1M1111.8 646.1L1104.1 646.3M1061.1 635.3L1060.9 636.0M1040.1 635.5L1040.1 636.2M1026.6 636.8L1027.6 636.5M1027.6 636.5L1022.7 636.0M1016.5 634.5L1018.1 634.1M1039.5 634.9L1031.4 633.6M1031.4 633.6L1032.6 633.2M1018.0 632.6L1012.2 632.2M1012.2 632.2L1012.2 631.6M1012.2 631.6L1007.9 631.0M1012.2 631.6L1017.4 631.4M1002.5 630.6L990.7 630.0M980.2 629.4L973.2 628.1M973.2 628.1L965.1 627.7M965.1 627.7L959.8 627.8M957.0 627.3L958.4 626.6M965.0 626.2L964.8 625.4M971.7 625.6L980.6 626.3M980.6 626.3L990.2 626.8M959.8 627.8L963.1 629.0M957.0 627.3L945.8 627.3M929.0 626.3L928.6 625.8M929.5 625.3L941.0 625.7M936.3 628.2L926.9 628.2M1007.9 628.8L998.9 629.1M987.9 624.6L997.0 625.7M986.2 622.9L997.3 622.9M1155.3 648.9L1158.8 649.7M1158.8 649.7L1173.0 650.3M1173.7 652.1L1170.2 651.5M1178.3 653.4L1181.7 654.4M1181.7 654.4L1173.0 653.8M1159.8 653.4L1147.1 652.3M1147.1 652.3L1148.1 651.9M1148.1 651.9L1140.3 651.3M1140.3 651.3L1128.9 651.1M1181.2 651.8L1197.1 652.3M1097.9 640.4L1086.1 640.8M1153.4 651.4L1142.3 649.5M1142.3 649.5L1140.1 649.2M1071.0 642.7L1062.7 641.9M1052.6 643.0L1052.4 644.4M997.0 625.7L1012.0 626.9M1041.2 643.9L1042.0 645.6M1052.4 644.4L1065.4 646.3M1148.8 633.1L1150.0 634.6M1036.3 627.5L1035.3 628.0M1050.6 626.9L1052.6 627.3M1053.6 628.5L1058.7 630.1M1058.7 630.1L1067.9 630.1M1067.9 630.1L1075.8 629.3M1075.8 629.3L1084.6 629.3M1084.6 629.3L1091.7 629.1M1091.7 629.1L1106.4 629.7M1115.4 630.4L1122.1 629.8M1122.1 629.8L1134.9 630.9M1037.4 625.3L1049.5 625.0M1049.5 625.0L1053.5 625.4M1220.0 651.5L1217.3 650.8M1210.1 651.7L1225.6 653.5M1225.6 653.5L1232.6 654.5M1232.6 654.5L1238.1 656.2M1532.1 633.5L1552.1 635.0M1552.1 635.0L1562.4 636.0M1594.0 638.0L1602.4 637.8M1619.2 640.3L1630.8 641.2M1630.8 641.2L1633.7 641.2M1609.9 636.7L1602.1 636.2M1602.1 636.2L1595.3 636.1M1617.2 635.9L1624.4 636.0M1625.6 635.5L1615.6 634.8M1616.6 636.1L1604.0 635.2M1575.1 637.4L1577.9 636.5M1577.9 636.5L1577.6 635.6M1575.1 637.4L1559.6 637.3M1589.5 641.4L1591.5 641.7M1612.4 645.8L1617.3 646.3M1581.5 644.0L1586.4 644.8M1573.0 643.7L1564.1 643.6M1564.1 643.6L1561.1 643.0M1584.1 645.5L1595.8 646.0M1624.6 649.2L1626.3 649.9M1630.2 651.6L1624.0 651.5M1616.6 651.9L1621.6 652.8M1621.6 652.8L1608.5 652.3M1600.0 651.3L1589.8 650.0M1601.7 649.0L1584.6 647.5M1602.5 652.9L1581.1 651.7M1579.6 653.6L1597.9 654.6M1557.4 653.2L1554.8 653.7M1546.0 652.4L1543.6 652.4M1562.7 656.6L1554.3 657.2M1551.5 657.1L1543.5 656.5M1582.1 660.3L1587.3 661.3M1587.3 661.3L1585.9 661.6M1585.9 661.6L1588.0 662.4M1586.1 664.8L1570.9 663.5M1602.5 652.9L1624.4 654.6M1624.4 654.6L1637.5 655.5M1545.2 653.8L1524.8 653.1M1596.2 633.3L1592.2 632.4M1592.2 632.4L1589.8 632.3M1552.5 650.8L1547.6 649.8M1538.2 649.2L1520.9 648.2M1624.6 658.8L1638.0 660.1M1235.0 654.4L1251.2 654.3M1280.0 634.9L1272.3 634.8M1257.5 633.6L1248.8 633.4M1248.8 633.4L1237.0 633.2M1248.8 633.4L1252.5 634.8M1205.1 629.9L1204.6 629.1M1204.6 629.1L1205.7 628.5M1237.4 631.2L1224.9 630.3M1460.1 643.5L1460.0 642.9M1460.1 643.5L1442.1 642.1M1427.7 640.8L1433.9 640.5M1481.0 647.7L1481.8 648.8M1467.0 649.2L1459.0 648.8M1488.6 647.9L1504.0 648.5M1469.3 645.1L1485.1 645.2M947.6 628.1L950.4 629.8M966.9 631.7L978.0 632.5M945.8 632.4L931.4 631.8M921.5 630.7L932.2 630.5M972.9 634.8L967.9 635.1M964.7 635.7L959.1 635.3M959.1 635.3L958.8 634.6M946.8 635.2L949.3 635.7M946.8 635.2L933.7 634.0M967.9 635.1L980.9 636.5M980.9 636.5L985.8 636.8M1468.6 643.1L1474.0 642.0M1474.0 642.0L1483.7 642.2M1484.2 641.2L1487.5 640.7M1499.7 643.5L1513.8 643.4M1516.6 642.4L1516.1 641.5M1517.6 640.3L1524.3 640.4M1517.6 640.3L1504.2 639.0M1242.0 652.3L1238.2 650.4M1238.2 650.4L1249.5 649.7M1249.5 649.7L1257.0 650.1M1257.0 650.1L1262.0 650.3M1230.7 647.1L1213.8 646.8M1213.8 646.8L1210.6 646.7M1209.0 646.2L1206.0 645.7M1203.5 642.8L1215.3 643.4M1215.3 643.4L1234.5 644.5M1023.9 622.0L1029.9 621.3M1059.7 622.7L1055.8 621.6M1055.8 621.6L1062.1 621.4M1109.0 625.7L1110.5 625.2M1115.8 625.4L1119.5 625.7M1084.8 623.9L1083.3 622.7M1102.2 626.8L1103.1 626.9M1103.1 626.9L1101.2 627.1M1115.8 625.4L1115.6 624.1M1105.2 623.4L1099.7 622.8M1099.7 622.8L1100.0 622.3M1110.5 622.2L1114.6 623.0M1114.6 623.0L1124.9 623.2M1124.9 623.2L1122.4 622.2M1062.7 641.9L1044.2 640.4M1031.3 640.5L1028.9 640.0M1023.9 639.1L1011.1 637.9M1011.1 637.9L1008.8 637.6M1028.9 640.0L1015.5 640.0M1007.0 636.6L994.6 634.9M1587.3 661.3L1611.8 663.4M1611.8 663.4L1620.2 664.8M1611.8 663.4L1613.7 662.3M1180.6 644.0L1167.6 642.5M1194.6 646.3L1180.9 646.8M1120.7 624.4L1139.1 625.4M1161.8 625.6L1155.8 624.9M1589.2 667.7L1597.3 668.7M1597.3 668.7L1596.4 669.8M1514.1 667.0L1515.7 667.3M1514.1 667.0L1510.0 666.9M1597.3 668.7L1622.9 670.4M1622.9 670.4L1633.2 672.1M1162.3 656.2L1181.1 657.7M1181.1 657.7L1188.1 658.0M1190.2 658.7L1186.6 660.0M1190.2 658.7L1208.0 660.1M1519.0 627.4L1516.8 626.9M1519.0 627.4L1516.4 628.0M1467.1 623.5L1462.3 623.9M1474.9 623.2L1490.0 623.7M1507.6 624.8L1516.6 625.5M1512.9 624.6L1507.4 624.0M1503.5 623.1L1498.2 622.8M1518.6 625.6L1531.8 626.0M1531.8 626.0L1538.1 625.7M1538.1 625.7L1537.5 624.8M1537.5 624.8L1540.8 624.2M1540.8 624.2L1540.3 624.0M1544.7 624.1L1555.8 624.4M1503.5 623.1L1501.3 622.0M1501.3 622.0L1499.1 621.4M1499.1 621.4L1498.1 621.3M1509.7 620.1L1513.6 620.4M1482.3 616.9L1479.0 616.4M1479.0 616.4L1483.6 616.5M1483.6 616.5L1495.5 617.3M1495.5 617.3L1496.7 617.3M1498.1 617.2L1507.0 617.7M1514.0 618.6L1514.1 619.3M1526.6 620.2L1527.6 620.3M1480.8 617.3L1466.8 616.3M1442.9 614.7L1429.1 614.2M1429.1 614.2L1431.2 613.4M1431.2 613.4L1438.6 613.5M1438.6 613.5L1434.2 612.6M1434.2 612.6L1425.3 611.8M1417.9 610.3L1414.7 610.3M1414.4 611.8L1407.4 611.9M1442.2 610.8L1439.1 610.4M1461.5 611.1L1465.5 610.9M1465.5 610.9L1469.8 611.6M1495.6 613.0L1497.1 612.9M1495.6 613.0L1497.6 613.4M1454.8 609.9L1462.0 609.7M1445.4 608.5L1445.0 608.8M1449.2 608.4L1453.3 608.1M1453.3 608.1L1445.9 607.2M1426.3 605.9L1417.5 605.5M1417.5 605.5L1413.1 605.9M1416.9 606.3L1425.2 606.7M1512.4 614.1L1518.8 614.4M1462.0 609.7L1476.3 610.2M1498.1 617.2L1488.8 615.9M1488.8 615.9L1492.8 615.9M1488.8 615.9L1479.7 615.4M1479.7 615.4L1480.0 614.9M1503.4 616.0L1496.9 615.5M1496.9 615.5L1488.8 614.8M1488.8 614.8L1491.3 614.7M1490.3 614.4L1487.5 614.1M1487.5 614.1L1481.0 613.3M1587.7 618.5L1585.8 617.8M1603.7 618.9L1611.2 619.0M1618.9 619.1L1619.4 619.1M1620.1 618.1L1617.5 617.9M1617.2 617.7L1622.2 617.8M1622.2 617.8L1631.9 618.2M1613.6 617.6L1601.1 617.0M1623.5 617.3L1614.4 616.2M1586.6 616.7L1571.4 616.4M1571.4 616.4L1564.1 615.4M1612.6 621.3L1617.4 621.7M1617.4 621.7L1619.0 621.4M1612.1 622.1L1623.8 622.8M1612.1 622.1L1603.2 622.3M1627.2 615.0L1628.6 614.5M1418.7 608.7L1414.2 608.3M1418.7 608.7L1423.2 609.4M1414.2 608.3L1404.6 607.6M1487.5 618.6L1480.9 619.3M1480.9 619.3L1465.4 618.9M1465.4 618.9L1457.8 619.3M1456.4 619.6L1449.2 619.0M1449.2 619.0L1443.4 618.6M1441.7 618.1L1433.6 617.7M1456.4 619.6L1460.2 620.5M1412.2 615.2L1406.0 614.7M1412.2 615.2L1422.4 615.5M1558.6 620.3L1566.1 621.0M1574.0 620.8L1574.9 620.7M1574.9 620.7L1579.0 620.6M1583.2 621.2L1589.9 622.6M1589.9 622.6L1592.0 622.8M1592.3 624.1L1590.6 624.8M1593.1 625.9L1588.8 626.3M1585.8 626.6L1583.1 627.0M1588.8 626.3L1600.5 626.9M1620.3 626.6L1623.0 627.5M1623.0 627.5L1620.5 627.8M1566.9 623.6L1565.8 623.2M1565.4 626.2L1562.9 626.1M1565.4 626.2L1566.2 626.5M1637.2 626.4L1632.1 625.1M1632.1 625.1L1637.4 624.4M1442.9 614.7L1451.3 616.1M1402.5 604.1L1387.8 603.8M1387.8 603.8L1392.5 604.5M1373.6 606.3L1377.5 606.9M1377.5 606.9L1384.7 607.8M1359.2 606.8L1361.6 607.1M1373.3 608.8L1381.1 609.1M1595.6 627.8L1593.0 628.9M1593.0 628.9L1594.1 630.1M1601.5 631.3L1596.3 631.3M1611.9 631.5L1609.0 630.9M1611.9 631.5L1619.0 632.4M1433.0 605.5L1444.4 605.3M1410.0 613.0L1399.9 613.4M1395.7 613.2L1382.8 612.4M1370.6 611.4L1367.8 610.6M1351.7 609.0L1355.7 609.0M1432.0 619.2L1416.0 617.8M1486.8 634.7L1508.4 636.2M1508.4 636.2L1507.5 636.9M1141.6 638.2L1156.7 640.1M1221.4 635.9L1226.7 637.8M1437.5 603.8L1434.8 603.8M1437.9 603.0L1436.1 602.5M1436.9 601.7L1443.9 601.9M1490.4 602.2L1489.8 602.0M1476.6 603.4L1480.9 604.2M1480.7 604.5L1479.2 605.3M1482.5 605.8L1469.6 605.5M1507.2 601.6L1502.4 601.1M1498.2 600.5L1493.4 600.5M1494.1 600.7L1492.8 601.0M1528.9 603.3L1527.7 603.5M1527.7 603.5L1524.3 603.4M1535.1 605.0L1536.1 605.1M1536.1 605.1L1543.6 605.0M1543.6 605.0L1549.1 605.6M1535.8 603.4L1547.2 604.0M1192.8 626.5L1188.5 626.3M1173.6 625.0L1171.1 623.9M1168.2 623.5L1161.9 623.5M1329.0 622.2L1318.6 622.8M1305.7 621.6L1294.3 621.2M1624.7 635.0L1637.2 634.6M1097.9 640.4L1082.1 638.5M1150.0 634.6L1170.1 635.5M1203.7 638.9L1202.4 639.4M1202.4 639.4L1207.3 639.9M1199.2 638.0L1203.7 637.6M1128.9 651.1L1108.0 649.3M1015.0 650.0L1023.7 651.3M1024.8 652.5L1026.1 652.6M1032.6 653.3L1042.5 653.6M1032.6 653.3L1032.3 654.3M1032.3 654.3L1015.7 653.3M1052.3 653.9L1070.1 654.5M1070.1 654.5L1077.8 655.1M1077.8 655.1L1093.2 655.4M1093.2 655.4L1110.1 657.2M1110.1 657.2L1109.5 658.9M1550.7 661.0L1531.9 658.9M1377.4 612.2L1367.0 612.6M1363.2 612.6L1361.2 612.3M1361.2 612.3L1361.0 612.2M1361.0 612.2L1359.7 611.9M1351.2 612.3L1345.6 612.6M1337.2 612.3L1334.5 611.8M1337.2 612.3L1332.9 612.7M1340.2 614.4L1344.5 615.3M1358.6 618.1L1356.5 618.1M1355.0 618.4L1364.7 618.9M1364.7 618.9L1367.9 619.6M1365.3 619.8L1368.3 620.1M1379.3 619.5L1380.6 619.6M1355.0 618.4L1342.7 617.5M1380.6 619.6L1394.0 620.2M1351.8 618.9L1337.7 618.1M1332.6 618.1L1338.9 619.0M1366.5 617.8L1371.4 617.2M1326.2 620.1L1322.4 620.2M1306.8 619.5L1313.3 619.3M1314.2 618.4L1315.7 617.5M1325.0 612.7L1320.4 613.5M1506.5 629.6L1528.2 631.1M1236.8 630.3L1257.5 631.2M1429.5 620.4L1441.8 621.5M1104.5 651.1L1093.3 651.2M1093.3 651.2L1099.5 652.6M1099.5 652.6L1105.7 652.7M1105.7 652.7L1106.8 652.6M1274.5 649.3L1286.0 650.4M1286.0 650.4L1309.1 651.5M1309.1 651.5L1324.6 650.9M1324.6 650.9L1316.5 649.4M1316.5 649.4L1329.2 650.0M1340.7 652.4L1348.5 652.6M1348.5 652.6L1358.2 654.9M1366.1 657.4L1370.9 658.0M1347.5 655.6L1342.1 654.7M1342.1 654.7L1336.0 655.1M1336.0 655.1L1327.6 654.4M1570.3 608.3L1580.8 608.8M1580.8 608.8L1581.1 608.2M1581.1 608.2L1592.6 608.4M1608.0 609.1L1617.4 609.4M1617.0 609.9L1628.8 610.7M1635.6 611.6L1632.3 612.0M1614.0 611.1L1608.2 611.5M1608.2 611.5L1597.3 610.7M1576.1 610.3L1581.7 610.9M1581.7 610.9L1587.1 611.4M1587.1 611.4L1583.3 611.6M1563.7 607.6L1548.7 607.0M1548.7 607.0L1554.2 608.1M1554.2 608.1L1555.3 608.7M1544.1 608.8L1553.6 610.0M1553.6 610.0L1538.8 609.4M1617.4 609.4L1629.6 609.3M1629.6 609.3L1629.3 609.3M1629.3 609.3L1622.7 608.5M1622.7 608.5L1619.5 608.4M1529.6 607.3L1515.9 606.7M1511.6 606.8L1502.4 606.3M1534.3 609.8L1542.0 611.2M1548.4 612.2L1553.3 612.7M1556.7 612.2L1567.6 613.1M1567.7 612.4L1577.4 612.9M1567.7 612.4L1559.6 611.3M1622.4 607.4L1602.1 606.5M1602.1 606.5L1585.3 605.2M1585.3 604.0L1588.6 604.0M1588.6 604.0L1588.8 603.7M1589.7 602.7L1582.7 602.1M1582.8 602.1L1593.3 602.3M1593.3 602.3L1591.4 601.8M1570.8 600.9L1556.4 600.6M1556.4 600.6L1561.4 601.3M1561.4 601.3L1569.8 602.1M1591.4 601.8L1597.6 601.3M1597.6 601.3L1590.1 600.4M1597.6 601.3L1610.7 602.2M1610.7 602.2L1608.8 602.4M1597.0 600.1L1591.3 599.6M1558.0 598.4L1559.5 598.2M1559.5 598.2L1563.4 597.8M1563.4 597.8L1575.8 598.1M1598.0 598.7L1597.6 598.5M1598.8 598.8L1613.1 599.8M1613.1 599.8L1626.1 600.5M1599.5 604.7L1616.4 605.3M1634.0 600.4L1626.3 599.2M1626.3 599.2L1618.8 598.2M1618.8 598.2L1623.8 598.0M1625.5 598.1L1636.5 598.5M1549.2 649.4L1530.7 647.1M1017.3 646.2L998.6 644.3M1631.9 595.9L1636.8 595.7M1136.5 656.5L1139.8 658.9M1139.8 658.9L1147.1 659.5M1164.2 661.6L1172.0 661.6M1158.7 661.0L1152.4 661.6M1181.3 663.1L1187.7 663.3M1171.0 664.1L1181.0 665.6M1181.0 665.6L1189.6 666.2M1199.2 668.1L1202.1 668.3M1148.6 663.7L1152.6 665.0M1202.1 668.3L1222.3 670.1M1259.1 669.9L1270.7 669.0M1270.7 669.0L1286.9 671.4M1259.4 664.0L1272.5 664.4M1272.5 664.4L1284.4 663.4M1299.0 664.5L1297.9 665.7M1297.9 665.7L1298.1 666.3M1297.9 665.7L1311.7 666.6M1284.4 663.4L1272.9 661.3M1286.9 671.4L1308.2 671.7M1320.8 670.4L1328.7 671.0M1320.8 670.4L1319.7 669.4M1328.7 671.0L1338.4 670.8M1338.4 670.8L1345.9 670.9M1081.9 634.7L1061.3 633.2M1340.9 644.3L1327.2 643.5M1327.2 643.5L1328.4 644.6M1555.5 629.7L1557.8 628.4M1473.5 659.4L1462.1 658.5M1499.3 659.7L1490.5 657.6M1469.0 654.6L1466.5 654.5M1469.0 654.6L1478.0 655.1M1463.6 655.3L1464.1 655.6M1453.0 653.2L1452.3 652.9M1449.6 651.8L1448.2 651.3M1476.1 653.7L1487.0 654.1M1494.2 656.0L1492.1 656.5M1464.1 655.6L1451.3 655.6M1451.3 655.6L1438.6 655.4M1430.2 652.4L1423.5 651.4M1423.5 651.4L1418.7 650.6M1465.9 660.4L1440.1 658.5M1387.6 653.5L1368.1 651.8M1394.4 650.6L1386.4 650.1M1465.9 660.4L1472.1 662.8M1472.1 662.8L1457.6 663.6M1457.6 663.6L1450.4 662.7M1428.0 660.5L1427.5 661.9M1381.7 662.2L1387.6 664.5M1392.2 666.4L1375.8 666.1M1412.3 662.1L1419.5 664.4M1419.5 664.4L1435.4 664.9M1334.8 661.1L1343.4 662.6M1348.6 665.5L1341.5 667.2M1015.0 650.0L992.0 649.2M992.0 649.2L975.1 649.7M969.9 650.1L961.4 650.1M957.8 651.1L966.5 651.6M950.0 646.9L946.0 646.7M961.4 650.1L948.4 649.5M946.0 646.7L941.1 647.7M940.2 643.5L926.9 643.7M975.2 645.6L975.1 646.0M926.9 643.7L909.2 643.3M895.9 640.6L896.2 640.5M942.6 641.9L946.4 641.7M919.9 638.0L912.2 637.8M890.2 635.1L895.5 634.4M881.1 636.2L877.9 636.7M865.9 637.1L854.0 637.3M859.7 633.0L864.4 634.0M874.7 633.5L873.4 632.0M882.8 632.4L883.6 632.4M876.3 630.4L891.9 630.3M972.4 656.2L973.5 657.4M931.0 646.1L911.4 646.1M967.3 638.5L974.0 639.5M855.7 639.4L844.2 640.2M1452.0 671.2L1447.8 671.0M1502.8 673.5L1498.3 672.1M1502.8 673.5L1522.9 675.4M1531.2 679.1L1529.7 679.9M1553.8 682.1L1562.0 684.1M1563.2 680.6L1559.1 679.8M1563.9 680.7L1570.5 680.6M1570.5 680.6L1592.0 682.0M1592.0 682.0L1596.8 681.8M1592.0 682.0L1598.2 684.2M1598.2 684.2L1602.5 684.4M1447.8 671.0L1423.5 669.5M1442.2 675.7L1430.0 675.9M1430.0 675.9L1413.1 676.2M1467.4 677.7L1484.4 679.5M1484.4 679.5L1487.3 680.4M1499.2 682.3L1499.0 682.7M1529.3 683.5L1530.2 682.9M1529.2 686.7L1535.0 687.4M1433.8 674.0L1455.6 674.2M1602.5 684.4L1611.5 687.3M1562.0 684.1L1564.4 686.7M1571.2 689.6L1567.5 689.4M1532.7 688.1L1556.5 691.7M1504.1 691.6L1509.3 693.6M1509.3 693.6L1524.0 694.2M1520.1 691.1L1510.7 688.9M1510.7 688.9L1501.4 687.9M1577.2 698.2L1575.3 699.6M1542.7 699.6L1557.5 702.4M1557.5 702.4L1559.6 703.8M1559.6 703.8L1548.7 703.0M1541.9 703.8L1527.1 702.6M1504.1 701.4L1503.2 701.9M1516.8 700.5L1503.7 699.1M1521.3 703.7L1538.8 705.1M1593.4 709.9L1600.0 709.7M1618.1 710.9L1632.0 713.1M1450.2 686.9L1427.0 686.2M1416.5 685.3L1419.5 687.0M1443.6 690.5L1435.2 690.2M1390.5 685.9L1388.6 687.0M1484.6 697.6L1466.8 694.3M1466.8 694.3L1478.1 694.3M1599.7 697.1L1602.1 698.5M1599.7 697.1L1613.1 697.6M1602.1 698.5L1619.5 700.2M1623.7 701.8L1619.3 701.9M1623.7 701.8L1639.7 704.2M1353.1 678.9L1328.7 677.7M1351.9 683.3L1331.3 682.2M1308.0 680.3L1303.4 679.1M1342.7 684.8L1336.6 686.9M1325.2 687.2L1310.0 684.3M1412.0 681.3L1409.6 679.9M1293.1 689.8L1290.5 690.0M1251.4 688.1L1243.1 689.3M1234.2 689.7L1222.9 690.2M1220.1 690.2L1218.4 690.6M1218.4 690.6L1228.0 692.3M1228.0 692.3L1238.7 692.6M1238.7 692.6L1243.9 692.6M1247.7 694.2L1254.0 695.6M1254.0 695.6L1265.9 695.5M1206.5 692.0L1201.9 694.0M1232.2 702.0L1253.3 702.2M1253.3 702.2L1259.5 701.8M1275.0 702.2L1281.3 703.7M1337.0 705.6L1348.5 709.2M1341.8 710.6L1360.7 711.9M1366.6 713.3L1382.5 714.0M1390.0 715.7L1389.3 715.7M1386.3 712.4L1414.8 714.2M1414.8 714.2L1421.3 716.7M1421.5 717.7L1420.2 717.9M1397.1 720.0L1394.5 721.3M1368.5 719.5L1362.9 718.3M1480.1 719.7L1488.8 720.7M1498.9 719.5L1512.6 720.2M1520.5 721.3L1515.8 721.5M1515.8 721.5L1528.7 724.6M1550.8 728.2L1556.7 726.5M1309.7 712.4L1300.5 712.5M1300.5 712.5L1298.5 713.6M1478.0 727.8L1474.7 730.0M1342.1 701.4L1343.4 702.0M1335.1 700.3L1348.1 700.1M1348.1 700.1L1366.9 701.8M1348.1 700.1L1355.7 698.9M1533.8 718.2L1565.0 720.5M1527.7 739.3L1510.7 740.0M1510.7 740.0L1482.9 737.4M1482.9 737.4L1479.9 739.6M1479.9 739.6L1482.1 740.2M1450.9 738.2L1446.9 738.2M1454.9 737.4L1438.8 735.5M1449.8 742.0L1438.9 742.4M1438.9 742.4L1420.8 742.4M1420.8 742.4L1419.5 743.6M1419.5 743.6L1432.1 744.9M1391.0 737.3L1401.2 737.8M1380.9 732.6L1375.8 730.4M1375.8 730.4L1362.5 727.6M1362.5 727.6L1347.5 725.8M1334.0 692.5L1363.0 693.4M1363.0 693.4L1371.4 693.3M1394.9 697.9L1403.7 697.8M1416.6 700.1L1432.6 702.3M1432.6 702.3L1412.3 703.1M1556.7 726.5L1593.1 731.1M1172.2 691.2L1156.7 691.6M1156.4 694.5L1143.7 693.3M1133.2 694.7L1119.6 695.5M1119.6 695.5L1134.2 697.6M1134.2 697.6L1132.9 699.2M1119.6 695.5L1098.0 693.2M1182.2 696.6L1170.4 698.5M1278.2 676.2L1288.3 674.4M855.7 639.4L873.9 641.5M1109.7 700.0L1125.9 702.6M1152.7 705.9L1159.7 707.9M1159.7 707.9L1186.0 710.5M1232.2 702.0L1205.2 702.1M1205.2 702.1L1221.9 705.9M1221.9 705.9L1234.1 706.4M1207.7 672.9L1211.3 674.6M1198.4 675.6L1220.1 677.8M1186.4 679.1L1168.9 679.2M1107.8 675.3L1096.2 673.3M1185.9 682.8L1193.9 683.2M1107.8 675.3L1121.7 674.3M1122.8 672.9L1116.9 671.4M1116.9 671.4L1129.9 671.7M1129.9 671.7L1142.7 672.1M1137.6 669.9L1152.0 671.4M1152.0 671.4L1156.7 671.4M1096.4 669.9L1083.2 667.6M1237.1 676.4L1255.0 679.8M1567.9 741.4L1583.9 744.8M1583.9 744.8L1590.5 744.6M1567.9 741.4L1563.7 738.2M1563.7 738.2L1549.1 734.5M1590.5 744.6L1617.2 744.2M1617.2 744.2L1622.5 743.3M1622.5 743.3L1637.0 744.6M1608.8 740.2L1629.3 740.8M1020.2 644.9L1009.1 642.3M1625.9 750.1L1634.2 755.5M1634.2 755.5L1637.1 756.5M1227.7 711.2L1218.7 711.2M1248.5 714.4L1252.0 714.6M1275.3 717.1L1294.4 720.2M1270.4 716.9L1255.7 718.9M902.0 646.5L918.5 649.2M1503.2 701.9L1467.9 700.3M1616.4 605.3L1639.9 606.8M1637.1 756.5L1607.6 757.6M1607.6 757.6L1609.0 760.8M1607.6 757.6L1571.0 752.1M1558.9 748.9L1539.5 748.4M1539.5 748.4L1534.2 746.7M1585.9 760.4L1568.7 763.1M1555.5 761.9L1533.9 761.4M1613.2 768.7L1615.3 771.0M1621.9 774.5L1599.5 773.0M1606.5 723.0L1620.6 726.2M1528.5 710.7L1524.4 708.8M1524.4 708.8L1510.5 706.4M1596.8 673.4L1620.0 677.2M937.0 666.4L928.2 666.6M881.6 663.4L887.0 662.9M939.1 660.0L938.1 660.0M932.2 657.1L927.1 656.1M920.9 656.5L914.8 656.3M933.5 656.3L942.1 655.2M938.1 660.0L928.0 661.3M887.0 662.9L900.0 661.8M881.6 663.4L864.3 661.0M935.6 653.1L914.8 653.1M914.8 653.1L896.2 650.2M854.3 657.5L855.8 655.7M840.5 654.6L831.8 652.8M852.5 652.1L842.8 650.2M842.8 650.2L838.1 648.6M838.1 648.6L839.7 647.3M889.4 656.4L888.4 657.8M1107.8 675.3L1079.7 675.3M1044.6 671.1L1039.7 670.5M1044.6 671.1L1038.2 671.2M1039.7 670.5L1043.0 668.9M1010.9 672.7L1013.5 674.2M1019.6 666.8L1022.5 664.8M1032.6 665.5L1041.8 664.6M1035.8 662.2L1018.8 659.4M1013.5 674.2L995.4 675.7M983.8 674.9L963.1 673.0M963.1 673.0L948.2 670.8M961.8 675.2L960.7 675.9M946.8 676.1L940.0 676.5M939.2 676.8L927.9 676.6M946.6 679.3L943.6 679.3M946.6 679.3L964.7 681.3M964.7 681.3L978.1 683.3M1018.9 688.9L1023.5 688.2M1037.3 688.6L1034.8 686.6M991.2 687.6L992.1 690.3M965.9 689.9L959.5 691.5M959.5 691.5L956.0 693.5M968.3 696.7L966.6 696.7M918.9 690.2L911.5 689.4M911.5 689.4L917.4 689.1M1034.8 686.6L1052.9 685.7M1034.8 682.8L1028.7 683.1M1028.7 683.1L1002.2 681.6M965.9 689.9L940.9 687.1M926.0 680.7L912.5 679.2M912.5 679.2L906.2 679.4M906.2 679.4L907.4 679.8M912.5 679.2L900.1 675.9M880.1 677.2L875.2 676.9M875.2 676.9L857.9 677.8M857.9 677.8L851.1 676.6M851.1 676.6L840.5 675.8M837.1 673.4L839.5 672.4M839.5 672.4L847.2 672.9M855.1 672.1L864.7 670.5M841.8 665.6L837.8 662.8M881.9 669.3L871.0 667.7M946.8 676.1L928.0 672.8M837.8 662.8L830.4 659.7M882.6 686.6L857.7 685.2M881.0 684.1L888.6 681.4M882.6 690.0L886.4 690.8M886.4 690.8L888.9 693.5M888.9 693.5L889.1 696.2M889.1 696.2L864.0 695.3M862.4 697.8L844.2 699.9M841.4 699.7L832.7 699.1M880.5 699.7L904.4 704.0M950.6 718.5L953.9 718.3M950.6 718.5L969.3 722.9M1002.0 726.0L1014.6 728.3M992.1 690.3L1005.3 694.7M1051.0 702.7L1082.5 703.2M969.5 724.6L986.7 730.4M969.9 731.5L977.7 732.9M977.7 732.9L983.7 734.6M983.7 734.6L992.5 739.6M992.5 739.6L1009.6 740.5M1424.5 708.5L1412.2 707.8M1602.5 684.4L1639.3 685.8M1533.9 761.4L1482.6 755.8M1551.5 670.7L1552.5 671.1M911.3 711.7L901.6 716.2M1108.3 680.3L1117.9 683.1M1127.5 712.3L1112.9 713.9M1112.9 713.9L1102.0 713.5M1139.5 719.3L1154.7 717.5M1128.7 721.2L1160.3 724.8M1128.7 721.2L1104.9 722.1M1068.6 723.8L1065.4 724.3M1068.6 723.8L1052.1 719.7M1052.1 719.7L1047.1 719.4M1101.2 727.7L1137.2 732.5M1137.2 732.5L1141.7 733.0M1141.7 733.0L1143.7 736.5M1143.7 736.5L1123.1 736.1M1172.4 742.4L1166.0 744.3M1209.6 750.0L1227.8 752.0M1196.8 739.5L1228.2 740.2M1228.2 740.2L1237.8 743.7M1244.0 737.6L1220.3 734.4M1201.4 725.3L1233.6 726.8M1233.6 726.8L1228.4 723.1M1228.4 723.1L1195.3 719.2M1227.8 752.0L1266.7 752.6M1286.5 758.8L1292.1 763.4M1240.8 770.3L1215.9 771.9M1094.4 754.7L1075.1 753.4M1075.1 753.4L1042.9 752.7M1042.9 752.7L1025.1 751.0M1215.9 771.9L1170.5 770.2M1171.8 753.0L1173.5 755.2M1141.7 750.6L1140.1 752.5M1136.3 748.7L1110.4 744.7M1110.4 744.7L1087.6 744.5M1249.9 737.7L1293.7 743.9M1293.7 743.9L1315.9 749.1M1304.9 748.9L1308.3 750.2M1350.8 750.5L1366.1 748.8M1366.1 748.8L1389.4 753.3M1389.4 753.3L1431.2 755.7M1331.2 751.4L1358.3 758.2M1363.6 762.0L1378.1 767.7M1390.5 769.6L1381.1 770.1M1458.2 776.4L1461.8 776.1M1483.2 780.8L1502.6 780.7M1523.4 782.5L1525.3 781.9M1523.4 782.5L1532.7 787.1M1487.4 788.6L1500.0 789.4M1487.4 788.6L1495.1 794.1M1495.1 794.1L1451.2 793.5M1410.4 793.7L1378.7 784.6M989.8 708.0L984.1 705.4M984.1 705.4L964.7 705.4M1045.4 703.4L1041.0 708.3M1326.8 800.5L1335.0 803.6M1380.7 819.6L1394.0 823.2M1301.8 809.9L1255.7 802.8M1402.7 837.6L1387.9 839.1M1342.3 842.3L1307.9 841.0M1274.9 837.1L1237.9 834.5M1237.9 834.5L1223.3 836.0M1237.9 834.5L1218.9 826.3M1218.9 826.3L1198.5 825.5M1173.9 820.7L1174.8 817.9M1139.4 807.7L1120.0 810.0M1370.1 860.5L1343.6 857.8M1370.1 860.5L1402.7 861.9M1173.9 820.7L1122.7 821.8M1122.7 821.8L1138.5 832.3M1323.9 740.3L1296.4 734.1M1296.4 734.1L1295.6 732.0M1148.3 776.8L1136.8 781.7M1136.8 781.7L1107.0 779.7M1107.0 779.7L1064.1 773.1M1148.3 776.8L1096.5 767.6M1523.9 825.2L1544.2 837.3M1548.6 846.4L1510.4 850.0M1510.4 850.0L1528.6 855.6M1528.6 855.6L1556.3 859.8M1527.1 861.4L1570.0 869.6M1549.0 779.3L1610.8 791.8M1610.8 791.8L1639.0 800.8M1538.0 800.3L1624.2 821.0M1624.2 821.0L1633.6 826.1M1464.5 911.1L1464.4 897.0M1464.5 911.1L1527.4 935.0M1527.4 935.0L1501.0 936.3M1321.7 914.1L1266.6 894.7M1507.6 624.8L1518.6 625.6M1355.4 811.5L1380.7 819.6M1624.2 821.0L1517.2 800.0M1404.5 619.8L1385.6 619.1M962.9 647.6L970.6 648.8M1516.6 625.5L1512.9 624.6M1410.2 649.9L1423.5 651.4M966.1 633.9L967.9 635.1M1435.0 653.0L1423.5 651.4M1617.2 635.9L1604.0 635.2M1638.4 646.8L1614.9 645.6M1294.3 654.5L1324.8 656.3M1382.8 612.4L1399.9 613.4M1541.9 703.8L1538.8 705.1M1590.6 624.8L1603.3 625.0M1338.1 624.7L1341.4 625.2M1221.0 656.5L1202.2 655.7M1273.4 629.6L1259.5 628.6M1297.6 629.1L1293.7 630.0M1343.4 662.6L1330.8 660.9M959.5 691.5L971.3 692.4M1474.9 623.2L1467.1 623.5M1396.7 643.6L1402.1 644.9M1558.0 598.4L1554.2 598.7M1564.7 626.8L1565.4 626.2M1344.9 622.7L1349.0 622.1M1436.9 601.7L1446.9 601.5M1476.8 739.4L1482.1 740.2M1637.0 744.6L1617.2 744.2M1436.1 602.5L1429.0 602.9M1044.6 671.1L1032.8 670.3M1420.7 602.9L1434.8 603.8M1189.7 755.0L1173.5 755.2M1338.4 670.8L1319.7 669.4M1559.1 679.8L1563.9 680.7M895.5 634.4L883.6 632.4M1120.0 810.0L1147.4 806.5M1415.3 608.8L1404.6 607.6M1488.8 615.9L1480.0 614.9M1567.5 689.4L1594.9 690.4M1210.1 651.7L1217.3 650.8M1357.3 616.7L1371.4 617.2M1553.8 682.1L1555.5 680.5M1590.6 624.8L1566.9 623.6M1136.3 748.7L1114.4 743.2M1543.6 652.4L1545.2 653.8M1613.2 649.0L1615.8 649.9M1634.1 668.7L1634.3 666.1M1278.8 626.5L1291.5 627.1M1608.0 609.1L1617.0 609.9M1430.0 675.9L1433.8 674.0M966.9 631.7L956.4 631.6M1565.9 707.4L1554.1 707.6M1094.4 754.7L1042.9 752.7M1336.6 686.9L1333.0 689.4M1474.6 722.2L1491.2 727.1M1417.5 605.5L1421.7 604.8M1220.1 690.2L1228.0 692.3M1023.5 688.2L1034.8 686.6M1480.1 660.8L1465.9 660.4M1344.9 622.7L1355.0 622.3M1138.5 693.3L1156.4 694.5M1183.5 648.9L1180.9 646.8M1008.9 627.3L997.0 625.7M1461.9 640.2L1484.2 641.2M1222.9 653.7L1235.0 654.4M1568.6 599.1L1559.5 598.2M1329.2 650.0L1340.7 652.4M1275.0 702.2L1253.3 702.2M1237.0 633.2L1252.5 634.8M877.9 636.7L865.9 637.1M1308.0 680.3L1313.7 679.1M1174.4 627.6L1183.3 627.6M1139.5 719.3L1160.3 724.8M1501.3 622.0L1498.2 622.8M1293.1 689.8L1274.7 688.1M1610.0 660.9L1628.0 661.5M1380.9 732.6L1350.4 731.6M945.9 637.7L927.9 638.1M1502.4 601.1L1494.1 600.7M1279.4 622.1L1285.3 622.8M1273.5 716.1L1248.5 714.4M1169.5 701.1L1134.2 697.6M966.6 696.7L956.0 693.5M1360.2 609.8L1352.1 610.2M1470.9 653.7L1469.0 654.6M1368.9 697.0L1385.1 697.3M844.2 699.9L832.7 699.1M1554.2 608.1L1547.3 608.4M969.3 722.9L941.8 722.7M1510.0 666.9L1521.4 666.4M1174.8 817.9L1198.5 825.5M1256.1 624.3L1268.7 624.1M1314.0 633.8L1323.8 635.4M1198.6 636.8L1203.7 637.6M1047.5 621.1L1062.1 621.4M946.8 676.1L962.0 677.8M907.2 626.6L895.7 627.7M1525.3 781.9L1520.5 775.2M1322.4 620.2L1313.3 619.3M1628.0 661.5L1611.0 660.2M1605.4 718.3L1604.7 714.9M1051.0 702.7L1041.0 708.3M1505.0 638.2L1482.8 636.8M1384.8 614.9L1366.4 614.3M1281.3 703.7L1292.8 703.1M985.8 636.5L980.9 636.5M946.6 679.3L940.9 682.3M1404.5 619.8L1429.5 620.4M957.7 652.3L935.6 653.1M1408.8 906.8L1464.4 897.0M1446.7 623.9L1446.7 624.6M967.1 638.0L974.0 639.5M939.1 660.0L928.0 661.3M1438.6 724.6L1417.0 720.7M1519.0 627.4L1526.4 627.8M1621.9 774.5L1613.2 768.7M957.8 651.1L948.4 649.5M1410.0 613.0L1407.4 611.9M1154.7 632.4L1177.5 633.6M1251.2 637.9L1265.7 639.6M1452.9 633.5L1453.8 632.0M1527.6 620.3L1514.1 619.3M1330.7 633.6L1338.2 632.8M1197.0 637.0L1199.2 638.0M1019.6 666.8L1032.6 665.5M1479.0 616.4L1480.8 617.3M1428.6 637.0L1435.1 637.5M1327.3 630.2L1321.3 631.2M1318.3 671.3L1343.4 673.5M1107.0 779.7L1096.5 767.6M1379.3 619.5L1385.6 619.1M1621.4 680.6L1581.9 676.3M882.6 690.0L888.9 693.5M1136.3 748.7L1140.1 752.5M1143.7 736.5L1112.4 735.4M1438.6 724.6L1478.0 727.8M1619.3 701.9L1619.5 700.2M1588.8 603.7L1579.3 603.5M1406.7 632.1L1418.9 632.3M1012.2 631.6L1018.0 632.6M1455.4 611.2L1439.1 610.4M907.4 679.8L910.5 683.8M1494.8 626.4L1475.7 626.3M1631.9 618.2L1623.5 617.3M1616.6 636.1L1624.4 636.0M1033.8 622.8L1035.0 621.5M1234.5 644.5L1245.5 644.8M1482.4 634.3L1481.8 635.0M1553.8 682.1L1529.7 679.9M1222.9 653.7L1232.6 654.5M1101.7 653.0L1106.8 652.6M946.8 676.1L961.8 675.2M1608.8 602.4L1627.0 604.1M1210.9 628.4L1223.9 629.2M1026.6 636.8L1022.7 636.0M1515.0 632.4L1529.7 633.1M1635.6 611.6L1636.6 612.4M1131.8 635.6L1146.0 635.0M1152.0 671.4L1156.1 673.6M1110.5 622.2L1124.9 623.2M1291.1 642.8L1271.7 642.4" stroke="#e00000" stroke-width="1.5" fill="none" stroke-linecap="round"/><path d="M1305.4 625.7L1309.4 625.7M1299.0 623.7L1295.9 623.2M1295.9 623.2L1293.3 623.1M1285.3 622.8L1283.7 622.9M1283.7 622.9L1280.2 622.7M1287.7 623.3L1289.5 623.6M1282.7 622.2L1279.4 622.1M1334.7 625.5L1343.0 626.6M1343.0 626.6L1347.7 627.3M1349.3 628.1L1357.5 628.6M1320.2 626.2L1328.3 627.3M1328.3 627.3L1328.2 627.9M1357.8 625.3L1361.5 625.3M1361.5 625.3L1366.8 625.4M1359.0 624.9L1360.8 624.3M1348.4 624.6L1342.9 623.6M1342.9 623.6L1340.4 623.4M1375.9 625.3L1375.2 624.8M1324.9 627.9L1317.0 628.2M1394.8 627.3L1404.3 627.9M1404.3 627.9L1407.3 628.9M1339.0 623.5L1329.0 622.2M1378.3 628.1L1382.5 628.5M1382.5 628.5L1383.3 629.1M1400.2 625.7L1396.8 624.9M1410.2 625.6L1416.6 626.6M1436.5 628.4L1437.5 629.0M1437.5 629.0L1434.0 629.5M1434.0 629.5L1441.2 630.5M1441.2 630.5L1442.9 630.5M1442.9 630.5L1443.4 630.5M1427.5 629.9L1423.4 629.4M1425.5 631.0L1421.6 630.6M1421.6 630.6L1420.1 630.9M1437.7 627.4L1443.5 627.7M1443.5 627.7L1446.6 628.2M1412.9 625.0L1425.2 625.3M1425.2 625.3L1427.5 625.3M1427.5 625.3L1432.0 625.7M1432.0 625.7L1435.6 626.0M1340.4 623.4L1344.9 622.7M1349.0 622.1L1355.0 622.3M1262.5 625.9L1256.6 626.1M1274.1 625.8L1262.6 624.7M1262.6 624.7L1260.2 624.5M1260.2 624.5L1268.7 624.1M1427.5 625.3L1436.6 625.0M1275.4 629.0L1273.4 629.6M1273.4 629.6L1266.5 629.4M1266.5 629.4L1259.5 628.6M1453.8 632.0L1460.6 632.7M1460.6 632.7L1465.3 632.8M1465.3 632.8L1478.1 633.7M1482.4 634.3L1486.8 634.7M1486.8 634.7L1481.8 635.0M1435.6 626.0L1452.1 626.8M1457.9 627.4L1464.6 627.4M1465.7 627.4L1471.1 626.7M1484.3 627.6L1483.7 628.5M1489.6 629.6L1503.4 630.4M1509.7 631.1L1498.8 631.1M1514.3 633.1L1524.9 633.8M1524.9 633.8L1532.1 633.5M1532.1 633.5L1529.7 633.1M1506.0 633.1L1492.6 632.5M1486.6 632.6L1477.9 631.7M1460.2 630.7L1467.0 631.5M1486.6 632.6L1493.1 633.7M1281.8 631.1L1287.6 631.8M1325.3 634.7L1330.3 635.6M1330.3 635.6L1333.7 635.7M1359.5 638.2L1365.1 637.9M1377.7 639.7L1374.2 640.3M1380.4 641.4L1382.1 642.5M1382.1 642.5L1389.0 643.6M1389.0 643.6L1394.0 644.1M1389.3 644.5L1380.9 643.6M1402.1 644.9L1416.8 645.5M1380.9 643.6L1365.8 643.1M1361.3 644.4L1365.0 645.5M1365.0 645.5L1380.6 646.1M1380.6 646.1L1390.7 647.4M1390.7 647.4L1386.6 647.6M1375.9 638.3L1375.3 637.1M1315.2 635.8L1302.4 634.4M1302.4 634.4L1301.4 634.4M1325.2 633.5L1330.7 633.6M1325.2 633.5L1318.1 632.1M1318.1 632.1L1321.3 631.2M1321.3 631.2L1327.3 630.7M1340.8 630.8L1357.2 631.5M1357.2 631.5L1359.7 630.9M1324.6 637.1L1309.3 636.8M1303.5 637.4L1305.8 637.8M1319.1 638.4L1331.2 639.4M1289.5 639.0L1288.5 639.2M1288.5 639.2L1277.7 638.6M1290.7 638.1L1276.9 637.4M1277.7 638.6L1274.3 639.7M1274.3 639.7L1265.7 639.6M1251.2 637.9L1243.7 637.1M1247.7 636.6L1251.3 636.4M1243.7 637.1L1230.0 636.1M1230.0 636.1L1221.4 635.9M1221.4 635.9L1216.8 634.7M1191.8 631.2L1188.5 630.9M1188.5 630.9L1187.0 630.5M1188.5 630.9L1181.0 631.3M1179.0 628.4L1183.2 628.4M1186.3 628.2L1183.3 627.6M1436.6 625.0L1450.4 625.1M1226.7 626.1L1214.1 624.9M1214.1 624.9L1214.0 624.9M1265.7 639.6L1264.1 640.9M1271.7 642.4L1274.3 642.7M1347.2 634.1L1360.5 634.0M1360.5 634.0L1374.6 634.6M1374.6 634.6L1376.6 635.8M1383.9 636.2L1392.4 636.6M1392.4 636.6L1394.9 637.1M1392.4 636.6L1397.7 636.6M1398.1 635.6L1395.8 635.3M1434.5 637.2L1435.1 637.5M1435.1 637.5L1436.9 637.9M1434.6 636.8L1444.1 637.5M1434.6 636.8L1439.9 636.5M1434.6 636.8L1426.5 635.7M1426.5 635.7L1417.9 634.8M1439.9 636.5L1438.8 635.5M1418.9 632.3L1432.5 633.1M1432.5 633.1L1435.8 633.5M1453.8 635.3L1454.9 635.4M1451.9 635.1L1454.1 634.2M1411.5 638.8L1414.7 638.7M1395.5 634.2L1376.4 633.1M1274.3 642.7L1293.8 644.0M1293.8 644.0L1291.1 642.8M1154.5 629.8L1162.8 630.7M1162.8 630.7L1155.4 631.2M1161.7 633.5L1148.8 633.1M1161.7 633.5L1172.7 633.3M1153.5 628.7L1137.4 627.7M1148.8 633.1L1131.5 632.2M1131.5 632.2L1126.4 633.0M1117.4 632.2L1114.8 632.7M1099.4 635.0L1095.2 634.9M1082.7 634.0L1081.9 634.7M1081.9 635.6L1087.8 636.5M1113.6 634.5L1125.7 634.4M1135.0 636.7L1141.6 638.2M1141.6 638.2L1131.0 637.8M1131.0 637.8L1122.9 638.1M1122.9 638.1L1115.3 637.9M1115.3 637.9L1116.0 638.4M1116.0 638.4L1127.0 639.9M1131.7 641.5L1138.2 641.8M1138.2 641.8L1143.2 642.7M1143.2 642.7L1138.9 642.9M1134.2 642.7L1126.6 642.4M1146.1 644.3L1150.2 645.4M1108.5 640.6L1097.9 640.4M1136.4 644.1L1135.5 645.2M1161.9 647.9L1174.2 648.2M1135.5 645.2L1133.2 646.4M1133.2 646.4L1123.7 645.9M1060.9 636.0L1052.2 636.2M1052.2 636.2L1043.4 635.6M1040.1 635.5L1039.5 634.9M1039.1 636.5L1048.8 637.5M1033.4 637.2L1029.8 637.2M1022.7 636.0L1022.1 635.8M1022.1 635.8L1015.2 635.3M1015.2 635.3L1016.5 634.5M1016.5 634.5L1022.0 634.8M1060.7 638.5L1055.9 638.9M1032.6 633.2L1032.4 632.6M1007.9 631.0L1002.5 630.6M959.8 627.8L957.0 627.3M958.4 626.6L965.0 626.2M971.7 625.6L970.6 625.2M970.6 625.2L972.7 624.3M972.7 624.3L964.3 623.8M940.0 627.1L929.0 626.3M928.6 625.8L929.5 625.3M929.5 625.3L923.8 625.2M947.6 628.1L936.3 628.2M907.2 626.6L910.9 627.4M910.9 627.4L907.3 627.7M907.3 627.7L895.7 627.7M1017.4 631.4L1025.3 630.7M1025.3 630.7L1025.2 629.8M977.7 623.4L987.9 624.6M977.7 623.4L986.2 622.9M1173.0 650.3L1181.2 651.8M1181.2 651.8L1173.7 652.1M1128.9 651.1L1130.9 652.2M1197.1 652.3L1200.9 653.2M1083.7 641.3L1087.2 641.9M1087.2 641.9L1085.6 642.7M1083.7 641.3L1068.5 640.7M1140.1 649.2L1125.7 648.4M1085.6 642.7L1071.0 642.7M1054.3 642.6L1052.6 643.0M1052.4 644.4L1041.2 643.9M1012.0 626.9L1008.9 627.3M1042.0 645.6L1047.1 647.5M1181.7 654.4L1202.2 655.7M1202.2 655.7L1208.7 656.1M1208.7 656.1L1221.0 656.5M997.3 622.9L1013.9 623.7M1016.4 624.5L1030.1 625.9M1030.1 625.9L1034.7 626.2M1034.7 626.2L1037.4 625.3M1037.4 625.3L1034.1 625.1M1035.3 628.0L1036.3 628.5M1034.7 626.2L1050.6 626.9M1052.6 627.3L1056.7 627.3M1052.6 627.3L1053.6 628.5M1058.7 630.1L1061.1 630.7M1061.1 630.7L1058.9 631.3M1106.4 629.7L1115.4 630.4M1197.1 652.3L1210.1 651.7M1210.1 651.7L1220.0 651.5M1225.6 653.5L1222.9 653.7M1232.6 654.5L1235.0 654.4M1558.0 634.9L1555.6 634.4M1575.1 637.4L1591.0 638.7M1590.3 639.4L1591.3 639.8M1591.0 638.7L1603.7 639.7M1591.0 638.7L1594.0 638.0M1602.4 637.8L1602.6 637.7M1603.7 639.7L1619.2 640.3M1610.1 637.2L1609.9 636.7M1609.9 636.7L1618.8 636.9M1618.8 636.9L1620.7 637.3M1624.4 636.0L1625.6 635.5M1625.6 635.5L1624.7 635.0M1625.6 635.5L1635.8 636.2M1630.8 641.2L1626.8 642.1M1626.8 642.1L1625.0 642.0M1586.1 639.5L1585.6 640.8M1611.2 643.1L1628.2 644.6M1628.2 644.6L1635.8 645.4M1635.8 645.4L1638.4 646.8M1599.7 643.4L1605.9 644.5M1617.3 646.3L1615.9 647.0M1615.9 647.0L1616.3 647.6M1581.5 644.0L1573.0 643.7M1573.0 643.7L1569.6 643.0M1586.4 644.8L1584.1 645.5M1584.1 645.5L1582.7 645.7M1564.1 643.6L1555.9 643.8M1553.2 640.6L1547.4 640.3M1626.3 649.9L1613.2 649.0M1612.7 649.4L1615.8 649.9M1626.5 651.1L1630.2 651.6M1601.7 649.0L1606.9 650.3M1624.0 651.5L1616.6 651.9M1621.6 652.8L1628.1 653.2M1608.5 652.3L1602.5 652.9M1581.2 652.3L1573.9 652.6M1573.9 652.6L1579.6 653.6M1579.6 653.6L1575.4 654.1M1557.4 653.2L1546.0 652.4M1554.8 653.7L1545.2 653.8M1567.9 656.7L1562.7 656.6M1567.9 656.7L1581.8 657.7M1554.3 657.2L1551.5 657.1M1588.0 662.4L1583.3 662.9M1583.3 662.9L1590.0 664.4M1590.0 664.4L1586.1 664.8M1596.2 633.3L1589.2 633.3M1568.5 631.0L1555.5 629.7M1555.5 629.7L1547.1 629.2M1547.6 649.8L1549.2 649.4M1520.9 648.2L1510.3 647.3M1624.4 654.6L1625.6 656.2M1625.6 656.2L1627.0 657.0M1627.0 657.0L1621.1 657.4M1251.2 654.3L1242.0 652.3M1242.0 652.3L1261.5 653.1M1261.5 653.1L1259.1 652.2M1298.4 635.5L1280.0 634.9M1280.0 634.9L1282.2 633.6M1237.0 633.2L1233.9 634.4M1232.6 632.3L1218.4 632.4M1218.4 632.4L1209.9 631.1M1205.7 628.5L1210.5 628.3M1210.5 628.3L1210.9 628.4M1210.9 628.4L1221.7 628.4M1228.8 629.6L1236.8 630.3M1416.8 645.5L1427.1 644.7M1427.1 644.7L1430.3 644.9M1427.1 644.7L1423.6 643.9M1454.0 644.0L1460.1 643.5M1469.3 645.1L1476.9 646.8M1476.9 646.8L1481.0 647.7M1481.0 647.7L1488.6 647.9M1476.9 646.8L1466.1 646.4M1476.3 649.5L1467.0 649.2M950.4 629.8L952.5 630.8M956.4 631.6L961.8 631.3M961.8 631.3L966.9 631.7M952.3 631.4L945.8 632.4M931.4 631.8L924.6 631.3M924.6 631.3L921.5 630.7M948.2 632.9L964.4 633.9M964.4 633.9L966.1 633.9M966.1 633.9L972.9 634.8M933.7 634.0L932.0 634.5M1483.7 642.2L1484.2 641.2M1484.2 641.2L1471.7 640.3M1483.7 642.2L1499.7 643.5M1513.8 643.4L1516.6 642.4M1516.1 641.5L1523.6 641.7M1523.6 641.7L1516.3 640.7M1504.2 639.0L1505.0 638.2M1249.5 649.7L1234.3 648.3M1234.3 648.3L1230.7 647.1M1210.6 646.7L1205.7 646.8M1205.7 646.8L1194.6 646.3M1205.7 646.8L1215.0 648.0M1215.0 648.0L1212.7 648.7M1206.0 645.7L1211.5 644.9M1213.5 644.8L1209.7 644.4M1209.7 644.4L1203.5 642.8M1203.5 642.8L1196.9 642.2M1215.3 643.4L1214.1 642.2M1234.5 644.5L1241.2 644.5M1241.2 644.5L1245.5 644.8M1636.2 641.2L1628.9 639.4M1049.5 625.0L1055.4 623.9M1055.4 623.9L1044.8 622.8M1044.8 622.8L1033.8 622.8M1033.8 622.8L1024.2 622.4M1061.9 623.9L1059.7 622.7M1055.8 621.6L1047.5 621.1M1059.7 622.7L1074.3 623.6M1074.3 623.6L1084.8 624.3M1084.8 624.3L1084.8 623.9M1084.8 624.3L1097.8 625.3M1097.8 625.3L1109.0 625.7M1110.5 625.2L1115.8 625.4M1115.6 624.1L1120.7 624.4M1100.0 622.3L1110.5 622.2M1487.5 640.7L1493.8 639.7M1028.9 640.0L1023.9 639.1M1008.8 637.6L1007.0 636.6M1620.2 664.8L1634.3 666.1M1610.0 660.9L1611.0 660.2M1611.0 660.2L1623.5 661.2M1623.5 661.2L1628.0 661.5M1200.8 645.5L1180.6 644.0M1139.1 625.4L1153.2 625.6M1544.7 664.3L1541.2 663.8M1592.0 670.2L1607.1 672.1M1592.0 670.2L1572.9 668.4M1572.9 668.4L1552.6 666.9M1553.4 668.0L1537.8 666.9M1525.0 665.6L1521.4 666.4M1525.0 665.6L1523.9 664.6M1521.4 666.4L1514.1 667.0M1633.2 672.1L1632.2 672.5M1632.2 672.5L1630.0 672.4M1162.3 656.2L1163.8 657.5M1188.1 658.0L1190.2 658.7M1212.0 660.1L1212.3 658.8M1547.1 629.2L1526.4 627.8M1526.4 627.8L1524.4 627.4M1524.4 627.4L1519.0 627.4M1516.4 628.0L1500.8 627.6M1504.6 625.9L1488.1 624.8M1467.1 623.5L1462.4 623.1M1477.8 624.1L1474.9 623.2M1516.6 625.5L1518.6 625.6M1507.6 624.8L1512.9 624.6M1540.3 624.0L1544.7 624.1M1548.1 623.5L1539.7 622.3M1499.1 621.4L1507.6 621.9M1498.1 621.3L1499.0 620.7M1501.6 620.1L1495.0 619.3M1508.6 620.8L1517.4 621.6M1498.1 621.3L1486.9 620.9M1486.9 618.3L1480.8 617.3M1480.8 617.3L1482.3 616.9M1496.7 617.3L1498.1 617.2M1514.1 619.3L1526.6 620.2M1434.2 612.6L1443.5 612.9M1443.5 612.9L1447.1 612.7M1447.1 612.7L1437.9 611.8M1437.9 611.8L1445.8 611.9M1437.9 611.8L1427.2 611.0M1427.2 611.0L1423.4 610.7M1447.1 612.7L1459.0 613.3M1414.7 611.8L1414.4 611.8M1407.4 611.9L1406.4 612.3M1406.4 612.3L1411.0 612.9M1445.8 611.9L1442.2 610.8M1442.2 610.8L1452.5 611.1M1465.5 610.9L1473.7 611.1M1481.6 612.3L1495.6 613.0M1465.5 610.9L1454.8 609.9M1445.9 607.2L1442.4 607.0M1442.4 607.0L1438.3 606.5M1445.9 607.2L1451.9 607.1M1416.9 606.3L1412.2 606.6M1440.4 608.2L1427.7 607.6M1497.6 613.4L1512.4 614.1M1518.8 614.4L1522.1 614.3M1476.3 610.2L1489.0 610.8M1489.0 610.8L1494.1 611.2M1502.6 612.1L1503.4 612.1M1503.4 612.1L1514.0 612.6M1507.0 617.7L1518.9 617.7M1518.9 617.7L1530.0 618.4M1528.7 613.0L1526.0 612.2M1492.8 615.9L1502.0 616.1M1502.0 616.1L1503.4 616.0M1491.3 614.7L1490.3 614.4M1481.0 613.3L1472.2 612.8M1481.0 613.3L1476.4 613.7M1476.4 613.7L1476.0 613.9M1557.5 619.1L1564.6 618.6M1578.0 619.1L1588.8 619.6M1590.5 619.7L1591.0 619.6M1591.8 617.8L1586.6 616.7M1610.9 618.9L1611.6 618.9M1611.6 618.9L1618.9 619.1M1619.4 619.1L1625.4 619.6M1618.9 619.1L1624.1 619.0M1624.1 619.0L1621.6 618.2M1617.5 617.9L1617.2 617.7M1617.5 617.9L1613.6 617.6M1623.0 616.2L1623.5 616.2M1564.1 615.4L1566.0 615.3M1564.1 615.4L1559.4 615.3M1608.2 620.8L1612.6 621.3M1625.2 621.7L1635.2 622.4M1617.4 621.7L1612.1 622.1M1526.0 612.2L1510.0 611.1M1504.6 610.1L1501.9 609.8M1501.9 609.8L1497.0 610.0M1501.3 609.7L1500.7 609.0M1513.4 610.1L1515.3 610.1M1513.4 610.1L1519.4 610.7M1515.3 610.1L1514.1 609.2M1514.1 609.2L1505.1 608.4M1453.3 608.1L1466.9 608.3M1623.5 616.2L1636.4 616.2M1621.5 614.9L1610.1 614.3M1417.9 610.3L1415.0 609.2M1415.0 609.2L1415.3 608.8M1415.3 608.8L1418.7 608.7M1418.7 608.7L1428.3 608.9M1457.8 619.3L1456.4 619.6M1443.4 618.6L1441.7 618.1M1433.6 617.7L1436.0 617.2M1436.0 617.2L1431.1 616.7M1431.1 616.7L1424.4 616.5M1460.2 620.5L1460.0 620.6M1441.9 619.1L1432.0 619.2M1566.1 621.0L1574.0 620.8M1592.0 622.8L1603.2 624.0M1592.3 624.1L1603.3 625.0M1590.6 624.8L1581.4 624.7M1581.4 624.7L1593.1 625.9M1588.8 626.3L1585.8 626.6M1587.9 627.4L1595.6 627.8M1603.3 625.0L1617.7 626.2M1617.7 626.2L1620.3 626.6M1617.7 626.2L1623.0 626.1M1623.0 626.1L1620.4 625.6M1581.4 624.7L1566.9 623.6M1623.0 626.1L1637.2 626.4M1583.1 627.0L1565.4 626.2M1562.9 626.1L1560.1 626.2M1589.9 622.6L1576.2 622.6M1452.9 616.7L1455.1 617.3M1387.8 603.8L1383.1 603.3M1381.6 606.0L1373.6 606.3M1368.8 606.5L1359.2 606.8M1367.3 607.9L1366.2 608.1M1366.2 608.1L1373.3 608.8M1373.3 608.8L1377.9 610.0M1594.1 630.1L1601.5 631.3M1601.5 631.3L1611.9 631.5M1382.8 612.4L1377.4 612.2M1377.4 612.2L1370.6 611.4M1367.8 610.6L1365.3 610.6M1365.3 610.6L1358.7 610.4M1358.7 610.4L1352.1 610.2M1365.3 610.6L1360.2 609.8M1544.3 618.9L1534.2 617.4M1466.9 608.3L1472.0 607.6M1472.0 607.6L1467.7 607.3M1467.7 607.3L1469.0 606.9M1469.0 606.9L1479.8 606.9M1416.0 617.8L1405.1 617.0M1245.5 644.8L1266.4 646.4M1266.4 646.4L1278.8 645.9M1278.8 645.9L1285.3 646.3M1508.4 636.2L1517.9 637.1M1437.5 603.8L1436.0 603.6M1436.0 603.6L1429.0 602.9M1429.0 602.9L1427.9 602.9M1427.9 602.9L1420.7 602.9M1437.9 603.0L1446.7 603.1M1446.9 601.5L1449.2 601.5M1449.2 601.5L1465.1 602.6M1465.1 602.6L1476.6 603.4M1488.1 603.3L1489.6 602.9M1489.0 602.4L1482.4 602.0M1482.4 602.0L1480.4 602.3M1489.8 602.0L1505.8 602.7M1505.8 602.7L1506.7 603.1M1505.8 602.7L1506.0 602.0M1506.0 602.0L1507.2 601.6M1498.2 600.5L1504.6 600.6M1507.2 601.6L1512.5 601.4M1504.3 599.8L1512.6 600.4M1506.0 602.0L1520.4 602.6M1520.4 602.6L1526.2 603.1M1526.2 603.1L1528.9 603.3M1528.9 603.3L1531.2 603.2M1531.2 603.2L1535.8 603.4M1524.3 603.4L1524.2 603.8M1524.2 603.8L1529.3 604.5M1549.1 605.6L1547.9 605.8M1543.6 605.0L1549.3 604.9M1549.1 605.6L1561.0 605.9M1571.4 606.7L1580.8 606.8M1580.8 606.8L1592.2 607.2M1535.8 603.4L1535.0 602.6M1535.0 602.6L1544.4 602.4M1544.4 602.4L1554.1 603.3M1510.4 599.3L1515.0 599.3M1515.0 599.3L1529.6 600.4M1589.2 633.3L1578.8 633.9M1208.4 625.1L1189.7 624.5M1188.5 626.3L1173.6 625.0M1171.1 623.9L1168.2 623.5M1294.3 621.2L1291.6 620.2M1170.8 636.8L1184.8 637.7M1184.8 637.7L1199.2 638.0M1199.2 638.0L1203.7 638.9M1202.4 639.4L1198.9 639.3M1203.7 637.6L1197.0 637.0M1047.1 647.5L1034.8 648.4M1029.9 649.2L1020.3 649.8M1023.7 651.3L1016.7 651.2M1016.7 651.2L1024.8 652.5M1026.1 652.6L1032.6 653.3M1020.3 649.8L1032.6 650.8M1032.6 650.8L1035.4 650.9M1032.3 654.3L1036.9 655.8M1015.7 653.3L1010.2 654.6M1010.2 654.6L1011.2 656.0M1109.5 658.9L1122.1 659.5M1119.2 656.1L1136.5 656.5M1122.1 659.5L1120.9 661.5M1036.9 655.8L1058.6 657.3M1058.6 657.3L1068.2 659.7M1068.2 659.7L1050.2 659.9M1120.9 661.5L1100.9 661.4M1570.9 663.5L1550.7 661.0M1363.2 612.6L1361.3 612.9M1361.2 612.3L1354.9 612.2M1354.9 612.2L1353.2 612.1M1345.6 612.6L1354.3 613.3M1332.9 612.7L1330.8 612.8M1330.8 612.8L1325.0 612.7M1332.9 612.7L1340.3 613.5M1341.5 613.5L1348.8 614.2M1368.5 613.8L1366.4 614.3M1348.8 614.2L1340.2 614.4M1344.5 615.3L1352.9 615.7M1357.3 616.7L1366.5 617.8M1367.9 619.6L1365.3 619.8M1367.9 619.6L1376.8 619.7M1380.6 619.6L1385.6 619.1M1337.7 618.1L1332.6 618.1M1371.4 617.2L1384.6 617.9M1330.0 618.9L1335.1 620.1M1330.9 620.5L1329.3 620.3M1329.3 620.3L1326.2 620.1M1322.4 620.2L1315.2 620.1M1315.2 620.1L1306.8 619.5M1313.3 619.3L1314.2 618.4M1381.1 613.7L1384.8 614.9M1314.2 618.4L1298.2 617.4M1381.3 620.5L1385.8 621.8M1384.6 617.9L1401.7 619.0M1306.8 619.5L1290.2 618.2M1380.4 641.4L1399.7 641.6M1257.5 631.2L1253.4 630.2M1342.7 617.5L1332.2 615.8M1332.2 615.8L1318.9 614.8M1432.0 619.2L1429.5 620.4M1106.8 652.6L1119.6 653.8M1262.0 650.3L1274.5 649.3M1274.5 649.3L1281.5 648.9M1324.6 650.9L1340.7 652.4M1316.5 649.4L1319.3 648.1M1369.1 656.6L1366.1 657.4M1366.1 657.4L1354.7 656.8M1354.7 656.8L1347.5 655.6M1370.9 658.0L1387.5 658.7M1607.1 672.1L1596.8 673.4M1571.4 606.7L1564.0 607.3M1563.7 607.6L1570.3 608.3M1608.0 609.1L1606.7 609.5M1606.7 609.5L1617.0 609.9M1628.8 610.7L1638.8 611.2M1638.8 611.2L1635.6 611.6M1632.3 612.0L1630.8 612.0M1632.3 612.0L1636.6 612.4M1606.7 609.5L1606.6 610.2M1606.6 610.2L1614.0 611.1M1584.8 610.2L1576.1 610.3M1608.2 611.5L1602.1 611.9M1608.2 611.5L1621.1 612.8M1515.9 606.7L1511.6 606.8M1502.4 606.3L1503.6 605.6M1503.6 605.6L1512.0 605.5M1542.0 611.2L1548.4 612.2M1548.4 612.2L1556.7 612.2M1577.9 604.1L1585.3 604.0M1588.8 603.7L1592.3 603.6M1588.6 604.0L1599.5 604.7M1592.3 603.6L1589.7 602.7M1582.7 602.1L1582.8 602.1M1556.4 600.6L1554.9 600.0M1576.8 600.2L1568.6 599.1M1568.6 599.1L1558.0 598.4M1558.0 598.4L1550.3 598.2M1575.8 598.1L1577.8 597.9M1577.8 597.9L1587.6 598.4M1587.6 598.4L1594.0 598.5M1598.0 598.7L1598.8 598.8M1577.8 597.9L1576.0 597.0M1576.0 597.0L1579.7 597.0M1626.1 600.5L1634.0 600.4M1623.8 598.0L1625.5 598.1M1636.5 598.5L1638.0 599.1M1625.5 598.1L1624.1 597.5M1624.1 597.5L1635.7 597.4M1626.1 600.5L1631.1 601.7M1631.1 601.7L1631.6 602.1M1631.6 602.1L1629.6 602.7M1017.3 646.2L1020.2 644.9M998.6 644.3L997.1 646.0M1319.3 648.1L1328.3 646.9M1557.1 616.6L1548.5 616.5M1635.7 597.4L1633.7 596.4M1633.7 596.4L1636.7 596.5M1636.8 595.7L1638.7 595.0M1147.1 659.5L1158.7 661.0M1187.7 663.3L1190.3 664.0M1181.3 663.1L1171.0 664.1M1171.0 664.1L1165.4 664.4M1189.6 666.2L1194.3 666.5M1194.3 666.5L1199.2 668.1M1181.0 665.6L1182.3 667.1M1165.4 664.4L1148.6 663.7M1236.8 669.5L1249.1 669.2M1258.2 665.9L1277.7 667.7M1284.4 663.4L1299.0 664.5M1299.0 664.5L1302.9 664.2M1298.1 666.3L1296.0 666.5M1308.2 671.7L1312.2 671.6M1318.3 671.3L1320.8 670.4M1328.7 671.0L1343.4 673.5M1365.0 645.5L1340.9 644.3M1328.4 644.6L1338.3 645.6M1480.1 660.8L1470.7 660.2M1470.7 660.2L1465.9 660.4M1494.9 662.3L1500.3 661.0M1497.0 659.7L1499.3 659.7M1482.1 656.9L1473.8 655.8M1473.8 655.8L1470.8 655.0M1470.8 655.0L1469.0 654.6M1473.8 655.8L1463.6 655.3M1463.6 655.3L1455.8 654.4M1455.8 654.4L1453.0 653.2M1452.3 652.9L1449.6 651.8M1478.0 655.1L1470.9 653.7M1470.9 653.7L1476.1 653.7M1487.0 654.1L1495.2 655.4M1448.2 651.3L1430.4 649.4M1430.4 649.4L1436.5 648.6M1438.6 655.4L1417.2 653.5M1495.2 655.4L1512.7 655.2M1440.1 658.5L1418.2 656.5M1418.2 656.5L1404.7 655.9M1387.6 653.5L1390.6 653.0M1399.2 650.8L1394.4 650.6M1450.4 662.7L1428.0 660.5M1412.3 662.1L1402.2 661.9M1358.8 660.9L1358.2 661.3M1387.6 664.5L1392.2 666.4M1375.8 666.1L1362.0 665.4M1362.0 665.4L1348.6 665.5M1348.6 665.5L1346.1 665.1M1346.1 665.1L1324.4 662.9M1358.2 661.3L1334.6 659.3M1334.6 659.3L1334.0 658.5M1334.6 659.3L1324.5 658.8M1324.5 658.8L1324.2 659.5M1316.4 657.6L1317.0 656.9M1324.2 659.5L1330.8 660.9M1330.8 660.9L1334.8 661.1M1317.0 656.9L1324.8 656.3M992.0 649.2L991.2 648.7M975.1 649.7L969.9 650.1M960.2 648.3L962.9 647.6M961.4 650.1L957.8 651.1M957.8 651.1L957.7 652.3M979.1 653.2L986.2 655.1M947.1 645.4L940.2 643.5M957.7 644.6L963.9 645.0M901.6 641.3L917.4 641.3M937.0 639.7L927.9 638.1M927.9 638.1L919.9 638.0M912.2 637.8L909.6 638.2M909.6 638.2L912.7 638.5M912.2 637.8L910.6 636.7M910.6 636.7L907.1 636.6M907.1 636.6L890.2 635.1M890.2 635.1L884.7 635.8M872.0 637.0L865.9 637.1M854.0 637.3L837.5 636.4M927.1 636.9L945.9 637.7M890.2 635.1L874.7 633.5M870.5 633.4L864.7 632.8M873.4 632.0L879.9 632.0M986.2 655.1L972.4 656.2M911.4 646.1L902.0 646.5M878.5 645.5L874.4 644.8M967.3 638.5L967.1 638.0M854.0 637.3L855.7 639.4M1419.5 664.4L1435.2 667.4M1435.2 667.4L1445.4 669.8M1445.4 669.8L1454.0 669.9M1454.0 669.9L1470.9 670.2M1477.2 671.7L1487.1 672.9M1498.9 673.3L1502.8 673.5M1522.9 675.4L1527.5 676.5M1527.5 676.5L1515.0 677.2M1515.0 677.2L1506.5 677.4M1515.0 677.2L1531.2 679.1M1529.7 679.9L1546.7 681.4M1546.7 681.4L1553.8 682.1M1546.7 681.4L1555.5 680.5M1563.2 680.6L1563.9 680.7M1559.1 679.8L1560.6 679.6M1498.3 672.1L1501.5 670.4M1501.5 670.4L1496.2 669.4M1522.9 675.4L1526.2 673.7M1423.5 669.5L1416.9 669.8M1423.5 670.5L1419.8 671.9M1419.8 671.9L1410.3 671.3M1419.8 671.9L1433.8 674.0M1433.8 674.0L1442.2 675.7M1433.7 678.7L1433.8 679.4M1433.8 679.4L1429.3 679.2M1442.2 675.7L1467.4 677.7M1467.4 677.7L1465.9 678.6M1487.3 680.4L1499.2 682.3M1499.0 682.7L1495.0 682.6M1526.4 681.9L1511.1 681.4M1526.2 673.7L1552.6 675.6M1568.6 675.5L1581.9 676.3M1571.2 689.6L1594.9 690.4M1546.0 692.9L1520.1 691.1M1520.1 691.1L1518.7 691.4M1518.7 691.4L1504.1 691.6M1524.0 694.2L1528.5 695.2M1501.4 687.9L1499.7 688.5M1491.7 690.5L1471.8 689.6M1528.5 695.2L1553.2 696.7M1528.5 695.2L1528.9 697.6M1548.7 703.0L1541.9 703.8M1527.1 702.6L1519.5 702.8M1519.5 702.8L1504.1 701.4M1503.7 699.1L1484.6 697.6M1538.8 705.1L1554.1 707.6M1567.1 708.3L1565.9 707.4M1600.0 709.7L1618.1 710.9M1632.0 713.1L1639.1 715.0M1600.0 709.7L1597.2 707.5M1471.8 689.6L1450.2 686.9M1416.5 685.3L1405.2 683.4M1419.5 687.0L1436.7 688.7M1399.9 685.9L1390.5 685.9M1478.1 694.3L1479.4 692.7M1571.8 693.9L1599.7 697.1M1619.5 700.2L1623.7 701.8M1597.2 707.5L1600.3 704.9M1600.3 704.9L1605.0 704.3M1326.9 676.7L1329.6 676.0M1377.0 682.5L1351.9 682.2M1351.9 682.2L1351.9 683.3M1331.3 682.2L1342.7 684.8M1342.7 684.8L1361.1 686.9M1331.3 682.2L1308.0 680.3M1303.4 679.1L1313.7 679.1M1336.6 686.9L1325.2 687.2M1325.2 687.2L1333.0 689.4M1320.0 690.3L1334.0 692.5M1334.0 692.5L1330.2 694.1M1303.4 679.1L1278.2 676.2M1409.6 679.9L1398.1 677.4M1372.8 676.2L1370.4 676.9M1433.8 679.4L1442.6 682.6M1320.0 690.3L1293.1 689.8M1290.5 690.0L1274.7 688.1M1274.7 688.1L1262.1 687.8M1262.1 687.8L1251.4 688.1M1254.0 695.6L1251.7 696.8M1251.7 696.8L1275.2 699.4M1228.0 692.3L1206.5 692.0M1201.9 694.0L1215.1 697.3M1259.5 701.8L1275.0 702.2M1281.3 703.7L1287.5 704.3M1287.5 704.3L1292.8 703.1M1292.8 703.1L1305.2 705.2M1305.2 705.2L1316.1 705.1M1348.5 709.2L1341.8 710.6M1360.7 711.9L1366.6 713.3M1382.5 714.0L1386.3 712.4M1420.2 717.9L1417.0 720.7M1417.0 720.7L1397.1 720.0M1394.5 721.3L1395.8 722.0M1394.5 721.3L1382.7 719.6M1395.8 722.0L1397.8 723.8M1397.8 723.8L1395.6 725.3M1395.8 722.0L1414.2 724.0M1362.9 718.3L1339.8 715.3M1220.1 690.2L1200.9 687.1M1480.1 719.7L1484.0 718.9M1512.6 720.2L1520.5 721.3M1488.8 720.7L1488.2 722.4M1488.2 722.4L1474.6 722.2M1528.7 724.6L1550.8 728.2M1395.6 725.3L1402.0 729.2M1305.2 697.9L1335.1 700.3M1335.1 700.3L1342.1 701.4M1550.3 722.1L1533.8 718.2M1533.8 718.2L1508.2 716.0M1474.7 730.0L1508.3 734.5M1508.3 734.5L1527.7 739.3M1482.1 740.2L1477.3 740.5M1454.9 737.4L1450.9 738.2M1446.9 738.2L1449.8 742.0M1419.5 743.6L1422.5 745.9M1382.2 735.5L1376.8 733.5M1376.8 733.5L1350.4 731.6M1363.0 693.4L1385.1 697.3M1385.1 697.3L1394.9 697.9M1385.1 697.3L1380.3 698.5M1380.3 698.5L1368.9 697.0M1416.6 700.1L1421.4 699.8M1593.1 731.1L1608.8 732.2M1594.9 690.4L1619.2 694.3M1619.2 694.3L1635.6 693.6M1482.4 602.0L1462.7 600.7M1462.7 600.7L1457.9 600.7M1201.9 694.0L1172.2 691.2M1156.7 691.6L1156.4 694.5M1143.7 693.3L1138.5 693.3M1098.0 693.2L1106.0 692.1M1156.4 694.5L1182.2 696.6M1170.4 698.5L1169.5 701.1M1513.8 643.4L1539.4 645.6M1132.9 699.2L1109.7 700.0M1125.9 702.6L1152.7 705.9M1159.7 707.9L1157.4 708.4M1062.1 621.4L1070.5 620.3M1221.9 705.9L1221.5 706.5M1234.1 706.4L1238.2 707.2M1234.1 706.4L1243.2 706.4M1238.2 707.2L1254.5 710.6M1515.0 599.3L1530.9 599.3M1183.6 672.1L1207.7 672.9M1207.7 672.9L1219.4 673.8M1219.4 673.8L1229.8 674.2M1229.8 674.2L1234.9 675.6M1234.9 675.6L1237.1 676.4M1180.7 674.7L1179.7 674.9M1220.1 677.8L1228.2 679.3M1228.2 679.3L1236.1 680.9M1220.1 677.8L1211.2 678.3M1211.2 678.3L1208.4 679.1M1208.4 679.1L1199.4 680.3M1199.4 680.3L1186.4 679.1M1144.0 678.2L1130.0 678.1M1121.7 674.3L1122.8 672.9M1116.9 671.4L1105.3 670.0M1096.4 669.9L1097.9 670.6M1129.9 671.7L1128.8 670.8M1133.6 670.4L1137.6 669.9M1142.7 672.1L1156.1 673.6M1083.2 667.6L1078.0 667.7M1112.8 668.4L1117.3 667.1M1117.3 667.1L1119.7 667.0M1117.3 667.1L1109.8 665.8M1109.8 665.8L1098.3 664.9M1167.1 683.6L1154.9 683.0M1236.1 680.9L1264.6 683.4M1264.6 683.4L1274.6 684.5M1255.0 679.8L1273.8 678.8M1549.1 734.5L1576.9 734.9M1622.5 743.3L1605.7 740.5M1605.7 740.5L1608.8 740.2M1227.7 711.2L1248.5 714.4M1275.3 717.1L1273.5 716.1M1294.4 720.2L1309.8 724.3M1467.9 700.3L1463.7 699.4M1608.8 602.4L1621.5 604.1M1621.5 604.1L1622.9 604.2M1621.5 604.1L1627.0 604.1M1571.0 752.1L1558.9 748.9M1539.5 748.4L1547.1 752.4M1547.1 752.4L1509.8 750.4M1568.7 763.1L1555.5 761.9M1615.3 771.0L1621.9 774.5M1565.0 720.5L1606.5 723.0M1606.5 723.0L1634.0 725.0M1606.5 723.0L1599.2 719.9M1599.2 719.9L1598.3 719.3M1598.3 719.3L1587.7 718.0M1598.3 719.3L1605.4 718.3M1582.8 715.1L1578.1 714.4M1605.4 718.3L1633.6 720.4M1582.8 715.1L1604.7 714.9M1528.5 710.7L1489.6 708.1M1489.6 708.1L1488.5 708.6M959.2 661.4L955.5 662.6M955.5 662.6L950.0 664.1M950.0 664.1L940.0 665.0M937.0 666.4L942.1 666.9M928.2 666.6L912.7 664.9M912.7 664.9L896.4 665.0M896.4 665.0L899.2 665.9M896.4 665.0L881.6 663.4M939.1 660.0L940.3 658.6M940.3 658.6L932.2 657.1M927.1 656.1L933.5 656.3M942.1 655.2L935.6 653.1M900.0 661.8L900.0 661.3M840.5 654.6L833.8 654.5M831.8 652.8L829.2 651.5M829.2 651.5L850.2 652.5M850.2 652.5L852.5 652.1M852.5 652.1L855.1 652.1M852.5 652.1L856.5 652.6M839.7 647.3L829.4 644.8M881.7 653.7L889.4 656.4M1055.6 673.0L1044.6 671.1M1043.0 668.9L1019.6 666.8M1006.7 666.9L999.9 668.4M999.9 668.4L1005.2 670.4M1005.2 670.4L1011.1 670.9M1022.5 664.8L1019.2 663.9M1022.5 664.8L1032.6 665.5M1041.8 664.6L1035.8 662.2M983.8 674.9L982.8 672.6M963.1 673.0L961.8 675.2M984.0 683.1L1000.1 686.3M991.2 687.6L969.5 685.8M979.7 689.7L965.9 689.9M959.5 691.5L968.2 692.4M968.2 692.4L971.3 692.4M956.0 693.5L968.3 696.7M966.6 696.7L944.9 695.8M931.1 692.5L918.9 690.2M1052.9 685.7L1058.4 686.8M1058.4 686.8L1064.9 686.9M1052.9 685.7L1034.8 682.8M1034.8 682.8L1017.4 679.4M1017.4 679.4L1023.0 679.1M943.6 679.3L940.9 682.3M940.9 682.3L926.0 680.7M900.1 675.9L892.2 675.5M892.2 675.5L880.1 677.2M847.2 672.9L855.1 672.1M839.5 672.4L837.7 670.2M833.2 668.8L840.2 668.6M840.2 668.6L846.0 667.1M1023.0 679.1L1051.9 681.0M911.5 689.4L882.6 686.6M888.6 681.4L910.5 683.8M889.1 696.2L912.6 698.7M1035.9 689.7L1047.8 693.9M904.4 704.0L914.8 708.6M911.3 711.7L928.1 713.6M928.1 713.6L950.6 718.5M941.8 722.7L931.0 722.5M969.5 724.6L1002.0 726.0M1002.0 726.0L1011.1 724.2M1005.3 694.7L1006.8 695.8M1006.8 695.8L1032.3 700.1M1032.3 700.1L1033.5 701.0M864.0 695.3L832.6 692.4M832.6 692.4L833.7 689.0M833.7 689.0L834.7 688.4M1009.6 740.5L1019.0 741.0M1046.5 674.9L1070.6 678.7M1467.5 710.4L1440.6 709.7M1440.6 709.7L1424.5 708.5M1482.6 755.8L1470.7 752.9M1553.4 668.0L1551.5 670.7M1064.9 686.9L1096.1 687.0M1533.9 761.4L1539.9 768.2M1098.4 716.2L1128.7 721.2M1128.7 721.2L1139.5 719.3M1104.9 722.1L1096.7 722.5M1096.7 722.5L1101.2 727.7M1123.1 736.1L1112.4 735.4M1143.7 736.5L1172.4 742.4M1205.6 748.8L1209.6 750.0M1172.4 742.4L1183.4 739.1M1228.2 740.2L1244.0 737.6M1220.3 734.4L1221.8 730.3M1266.7 752.6L1286.5 758.8M1292.1 763.4L1272.4 767.3M1198.9 766.8L1177.4 762.7M1177.4 762.7L1150.0 760.9M1150.0 760.9L1129.9 758.2M1129.9 758.2L1094.4 754.7M1288.0 775.4L1301.7 782.3M1301.7 782.3L1310.7 785.3M1310.7 785.3L1326.9 790.0M1326.9 790.0L1286.1 788.7M1047.1 719.4L1016.6 713.9M1145.5 749.9L1141.7 750.6M1145.5 749.9L1136.3 748.7M1110.4 744.7L1114.4 743.2M1070.7 739.5L1069.7 737.0M1069.7 737.0L1080.6 737.6M1315.9 749.1L1304.9 748.9M1315.9 749.1L1331.2 751.4M1431.2 755.7L1419.3 751.9M1358.3 758.2L1363.6 762.0M1378.1 767.7L1390.5 769.6M1390.5 769.6L1411.5 771.5M1411.5 771.5L1458.2 776.4M1464.8 774.7L1450.8 771.6M1483.2 780.8L1473.8 783.1M1450.8 771.6L1478.4 772.4M1473.8 783.1L1487.4 788.6M1495.1 794.1L1517.2 800.0M1517.2 800.0L1538.0 800.3M1538.0 800.3L1549.2 797.4M1478.4 772.4L1520.5 775.2M1381.1 770.1L1406.7 778.0M1451.2 793.5L1410.4 793.7M1620.0 677.2L1621.4 680.6M964.7 705.4L957.3 707.8M1620.5 627.8L1632.5 630.5M1286.1 788.7L1326.8 800.5M1335.0 803.6L1355.4 811.5M1347.4 816.5L1380.7 819.6M1394.0 823.2L1417.4 823.3M1347.4 816.5L1315.0 814.8M1315.0 814.8L1301.8 809.9M1340.6 831.3L1340.1 831.1M1223.3 836.0L1249.2 841.7M1198.5 825.5L1173.9 820.7M1174.8 817.9L1139.4 807.7M1139.4 807.7L1147.4 806.5M1147.4 806.5L1141.8 800.4M1358.9 854.0L1370.1 860.5M1366.1 748.8L1323.9 740.3M1295.6 732.0L1295.6 729.3M1170.5 770.2L1148.3 776.8M1544.2 837.3L1587.3 840.9M1535.7 842.9L1548.6 846.4M1528.6 855.6L1527.1 861.4M1344.7 882.3L1408.8 906.8M1408.8 906.8L1464.5 911.1M1501.0 936.3L1389.8 929.1M1389.8 929.1L1321.7 914.1M1344.7 882.3L1234.9 866.9M881.9 669.3L876.3 672.1M1196.9 642.2L1214.1 642.2M1494.9 662.3L1470.7 660.2M1353.2 612.1L1361.2 612.3M909.6 638.2L919.9 638.0M1551.5 670.7L1515.7 667.3M1029.9 649.2L1035.4 650.9M1381.3 620.5L1368.3 620.1M1370.4 676.9L1385.6 677.7M1517.4 621.6L1507.6 621.9M1361.2 628.7L1356.4 627.7M1638.4 646.8L1628.2 644.6M1016.6 713.9L1052.1 719.7M1492.6 632.5L1477.9 631.7M1410.0 635.7L1395.5 634.2M1577.6 635.6L1595.3 636.1M1528.2 631.1L1503.4 630.4M1539.7 621.8L1526.6 620.2M939.2 676.8L946.8 676.1M1381.3 620.5L1380.6 619.6M1124.3 646.5L1123.7 645.9M1398.8 624.5L1412.9 625.0M1444.1 637.5L1434.5 637.2M1398.1 677.4L1372.8 676.2M1503.4 612.1L1494.1 611.2M1064.9 643.7L1052.6 643.0M1322.4 620.2L1329.3 620.3M1272.9 661.3L1302.9 664.2M1515.3 610.1L1519.4 610.7M1527.7 603.5L1524.2 603.8M1259.1 652.2L1264.1 650.7M1032.8 670.3L1038.2 671.2M1361.0 612.2L1367.0 612.6M1422.4 615.5L1413.3 615.4M1432.5 633.1L1413.6 632.4M950.0 646.9L960.2 648.3M1484.3 627.6L1475.7 626.3M1295.6 729.3L1296.4 734.1M1507.6 621.9L1498.1 621.3M1307.3 639.0L1290.7 638.1M1594.0 598.5L1597.6 598.5M1512.0 605.5L1516.3 604.7M1629.3 740.8L1605.7 740.5M1392.9 617.1L1401.7 619.0M1512.7 655.2L1487.0 654.1M1479.7 615.4L1461.4 614.2M1243.9 692.6L1228.0 692.3M1480.1 660.8L1473.5 659.4M978.1 683.3L1000.1 686.3M1289.3 704.7L1305.2 705.2M1548.7 607.0L1564.0 607.3M1134.1 646.9L1123.7 645.9M1417.4 823.3L1380.7 819.6M1342.7 617.5L1356.5 618.1M959.8 627.8L973.2 628.1M1628.9 639.4L1619.2 640.3M1578.8 633.9L1595.3 636.1M1425.5 631.0L1420.1 630.9M1427.5 629.9L1430.6 630.8M1410.2 649.9L1394.4 650.6M1329.3 620.3L1327.4 620.6M1243.9 692.6L1247.7 694.2M1104.5 651.1L1105.7 652.7M1562.1 680.8L1563.9 680.7M1461.5 611.1L1469.8 611.6M1294.3 621.2L1318.6 622.8M1615.3 771.0L1599.5 773.0M1023.9 622.0L1033.8 622.8M1168.2 623.5L1173.6 625.0M1639.7 704.2L1636.2 707.2M1262.5 625.9L1255.0 626.3M1531.2 679.1L1499.1 676.3M1185.9 682.8L1154.9 683.0M1465.7 627.4L1483.7 628.5M833.8 654.5L831.8 652.8M1607.6 757.6L1637.9 763.3M1621.1 612.8L1602.1 611.9M1597.2 707.5L1618.1 710.9M1480.4 602.3L1489.0 602.4M926.9 628.2L910.9 627.4M1619.5 608.4L1629.6 609.3M1437.5 629.0L1429.4 627.5M1017.4 679.4L1028.7 683.1M1020.5 632.9L1012.2 632.2M1577.4 612.9L1567.6 613.1M1484.4 679.5L1484.4 680.4M1194.3 666.5L1202.1 668.3M1009.8 624.8L1013.9 623.7M1382.5 628.5L1369.3 627.0M850.2 652.5L855.1 652.1M1503.2 701.9L1463.7 699.4M887.7 646.2L902.0 646.5M1211.2 678.3L1228.2 679.3M1574.0 620.8L1579.0 620.6M1276.9 637.4L1289.5 639.0M1633.7 641.2L1619.2 640.3M932.2 630.5L924.6 631.3M1451.9 635.1L1438.8 635.5M1122.4 622.2L1110.5 622.2M1035.3 628.0L1053.6 628.5M1606.4 641.0L1625.0 642.0M1611.8 663.4L1617.2 665.1M1454.9 737.4L1446.9 738.2M1560.1 626.2L1566.2 626.5M1631.9 595.9L1638.7 595.0M1559.7 655.4L1524.8 653.1M1007.9 628.8L1025.2 629.8M1366.9 701.8L1355.7 698.9M1020.5 632.9L1032.6 633.2M1529.3 604.5L1516.3 604.7M1592.3 624.1L1576.2 622.6M1603.2 624.0L1609.8 623.3M895.9 640.6L873.9 641.5M1337.7 618.1L1338.9 619.0M1498.1 617.2L1495.5 617.3M1617.2 744.2L1605.7 740.5M1410.4 793.7L1396.0 802.2M1334.6 659.3L1324.2 659.5M1358.7 610.4L1367.8 610.6M1511.6 606.8L1503.6 605.6M1411.0 612.9L1407.4 611.9M1023.5 688.2L1037.3 688.6M1140.3 651.3L1130.9 652.2M1017.4 631.4L1012.2 632.2M1023.7 651.3L1026.1 652.6M968.2 692.4L956.0 693.5M1377.7 639.7L1399.7 641.6M1608.8 602.4L1597.6 601.3M1308.3 750.2L1331.2 751.4M1624.7 635.0L1615.6 634.8M1552.5 650.8L1538.2 649.2M1157.4 708.4L1186.0 710.5M1538.2 649.2L1549.2 649.4M1638.5 620.7L1618.9 619.1M1432.0 625.7L1436.6 625.0M950.0 646.9L941.1 647.7M1099.5 652.6L1106.8 652.6M1554.1 603.3L1552.5 602.4M1321.3 625.5L1309.6 625.1M1436.7 688.7L1427.0 686.2M1140.3 651.3L1147.1 652.3M933.5 656.3L932.2 657.1M1266.5 629.4L1275.4 629.0M1531.2 603.2L1526.2 603.1M1305.7 616.7L1298.2 617.4M1574.4 647.3L1589.8 650.0M1384.7 607.8L1401.9 608.9M1413.6 632.4L1395.5 631.6M1567.7 612.4L1567.6 613.1M1502.6 612.1L1489.0 610.8M1056.7 627.3L1050.6 626.9M1361.3 612.9L1351.2 612.3M1537.5 624.8L1540.3 624.0M1304.9 748.9L1331.2 751.4M942.1 666.9L948.2 670.8M941.0 625.7L928.6 625.8M1307.3 639.0L1322.5 641.1M1436.7 688.7L1450.2 686.9M939.2 676.8L943.6 679.3M1624.4 636.0L1615.6 634.8M1348.5 652.6L1368.1 651.8M1436.0 617.2L1441.7 618.1M1298.1 666.3L1311.7 666.6" stroke="#eeee00" stroke-width="1.5" fill="none" stroke-linecap="round"/><path d="M1312.9 624.0L1303.4 623.6M1375.9 625.3L1388.6 625.7M1394.8 627.3L1396.5 627.0M1344.9 622.7L1349.5 622.5M1299.6 626.5L1288.4 626.6M1262.5 625.9L1272.3 627.3M1365.8 643.1L1363.0 643.7M1451.9 635.1L1453.8 635.3M1155.4 631.2L1153.0 632.2M1153.0 632.2L1154.7 632.4M1095.2 634.9L1082.7 634.0M1125.7 634.4L1131.8 635.6M1131.8 635.6L1135.0 636.7M1138.9 642.9L1134.2 642.7M1138.9 642.9L1143.9 643.8M1074.1 636.3L1061.1 635.3M1039.1 636.5L1033.4 637.2M964.8 625.4L951.9 624.9M1161.9 647.9L1155.3 648.9M1611.2 643.1L1599.7 643.4M1557.6 641.8L1553.2 640.6M1589.2 633.3L1575.7 632.1M1223.9 629.2L1228.8 629.6M1471.7 640.3L1461.9 640.2M1516.3 640.7L1517.6 640.3M1262.0 650.3L1264.1 650.7M1211.5 644.9L1213.5 644.8M1044.2 640.4L1031.3 640.5M1565.4 665.4L1589.2 667.7M1516.8 626.9L1504.6 625.9M1500.8 627.6L1494.8 626.4M1477.8 624.1L1467.1 623.5M1539.7 622.3L1539.7 621.8M1507.0 617.7L1514.0 618.6M1414.7 610.3L1413.5 610.1M1445.4 608.5L1440.4 608.2M1494.1 611.2L1502.6 612.1M1408.2 604.3L1402.6 603.9M1497.2 614.9L1501.1 614.6M1588.8 619.6L1590.5 619.7M1585.8 617.8L1591.8 617.8M1621.6 618.2L1620.1 618.1M1590.5 619.7L1608.2 620.8M1510.0 611.1L1504.6 610.1M1504.6 610.1L1513.4 610.1M1424.4 616.5L1413.3 615.4M1579.0 620.6L1583.2 621.2M1364.5 607.6L1367.3 607.9M1489.0 602.4L1490.4 602.2M1544.4 602.4L1552.5 602.4M1197.0 637.0L1198.6 636.8M1034.8 648.4L1029.9 649.2M1020.3 649.8L1015.0 650.0M1353.2 612.1L1351.2 612.3M1345.6 612.6L1337.2 612.3M1340.3 613.5L1341.5 613.5M1367.0 612.6L1381.1 613.7M1590.1 600.4L1576.8 600.2M1633.7 596.4L1620.1 595.8M1270.7 669.0L1255.9 667.0M1258.2 665.9L1259.4 664.0M1511.9 665.2L1494.9 662.3M1494.9 662.3L1480.1 660.8M1490.5 657.6L1482.1 656.9M1402.2 661.9L1388.1 661.4M1419.5 664.4L1408.2 664.5M962.4 648.6L960.2 648.3M901.6 641.3L895.9 640.6M946.4 641.7L937.0 639.7M927.9 638.1L927.1 636.9M884.7 635.8L881.1 636.2M864.7 632.8L859.7 633.0M1445.4 669.8L1452.0 671.2M1506.5 677.4L1499.1 676.3M1416.9 669.8L1423.5 670.5M1522.1 684.3L1529.2 686.7M1535.0 687.4L1532.7 688.1M1552.6 675.6L1568.6 675.5M1519.5 702.8L1521.3 703.7M1605.0 704.3L1636.2 707.2M1329.6 676.0L1317.3 674.9M1243.1 689.3L1234.2 689.7M1215.7 698.8L1232.2 702.0M1287.5 704.3L1289.3 704.7M1414.8 714.2L1420.1 714.3M1368.5 719.5L1362.2 719.3M1450.9 716.7L1480.1 719.7M1491.2 727.1L1478.0 727.8M1305.2 697.9L1308.1 696.2M1371.4 693.3L1376.9 693.7M1099.0 697.0L1084.2 697.2M1186.0 710.5L1184.9 711.2M1243.2 706.4L1268.1 707.9M1172.2 691.2L1161.3 687.4M1211.3 674.6L1198.4 675.6M1527.7 739.3L1567.9 741.4M1270.4 716.9L1275.3 717.1M1622.9 670.4L1634.1 668.7M958.3 665.4L960.5 665.6M960.7 675.9L962.0 677.8M940.0 676.5L939.2 676.8M882.6 686.6L882.6 690.0M914.8 708.6L911.3 711.7M986.7 730.4L969.9 731.5M1102.0 713.5L1098.4 716.2M1166.0 744.3L1193.2 747.1M1220.2 762.8L1240.8 770.3M1220.2 762.8L1189.7 755.0M1189.7 755.0L1171.8 753.0M1378.7 784.6L1355.9 782.7M1355.4 811.5L1347.4 816.5M1255.7 802.8L1244.2 793.7M1307.9 841.0L1274.9 837.1M1410.4 793.7L1473.9 806.1M1501.8 835.2L1535.7 842.9M1343.6 857.8L1344.7 882.3M1429.1 614.2L1411.0 612.9M1507.5 636.9L1505.0 638.2M1607.1 672.1L1630.0 672.4M1152.9 678.7L1130.0 678.1M1434.6 636.8L1428.6 637.0M1291.1 642.8L1298.5 644.7M1209.0 646.2L1200.8 645.5M969.9 731.5L983.7 734.6M1047.8 693.9L1084.2 697.2M1509.8 750.4L1534.2 746.7M1082.1 638.5L1074.1 636.3M1392.5 604.5L1383.1 603.3M1291.6 620.2L1306.8 619.5M1317.0 628.2L1335.5 628.9M1287.7 623.3L1280.2 622.7M1394.9 637.1L1400.9 639.0M1411.5 771.5L1378.1 767.7M1594.0 598.5L1598.8 598.8M1110.5 625.2L1119.5 625.7M854.0 637.3L844.2 640.2M882.8 632.4L885.3 632.3" stroke="#1010e0" stroke-width="1.5" fill="none" stroke-linecap="round"/><path d="M1303.4 623.6L1301.4 623.7M1347.7 627.3L1349.3 628.1M1348.4 624.6L1357.8 625.3M1271.9 626.1L1262.5 625.9M1503.4 630.4L1506.5 629.6M1333.7 635.7L1337.4 636.9M1325.9 640.2L1322.5 641.1M1347.2 634.1L1338.2 632.8M1265.7 639.6L1252.6 637.9M1177.8 629.3L1175.3 628.3M1039.5 634.9L1049.1 634.9M1025.3 630.7L1013.1 629.9M1148.1 651.9L1153.4 651.4M1591.3 639.8L1606.4 641.0M1615.8 649.9L1626.5 651.1M1432.5 643.3L1438.4 643.5M967.9 635.1L964.7 635.7M1122.4 622.2L1134.9 622.7M1487.5 618.6L1487.9 618.6M1487.9 618.6L1486.9 618.3M1611.2 619.0L1610.9 618.9M1443.4 618.6L1441.9 619.1M1566.2 626.5L1564.7 626.8M1361.6 607.1L1364.5 607.6M1381.1 609.1L1380.3 608.8M1444.4 605.3L1451.4 605.1M1405.1 617.0L1392.9 617.1M1414.7 611.8L1399.7 610.4M1476.6 603.4L1484.0 603.4M1480.9 604.2L1480.7 604.5M1502.4 601.1L1498.2 600.5M1114.8 657.5L1119.2 656.1M1011.2 656.0L1030.7 657.4M1356.5 618.1L1355.0 618.4M1591.3 599.6L1584.0 599.3M1091.7 629.1L1078.6 627.1M1418.7 650.6L1410.2 649.9M1381.7 662.2L1358.8 660.9M1317.0 656.9L1305.7 655.9M887.7 646.2L878.5 645.5M1427.0 686.2L1416.5 685.3M1398.1 677.4L1385.6 677.7M1403.2 741.1L1391.0 737.3M1169.5 701.1L1174.3 701.6M1130.0 678.1L1119.3 677.4M878.5 645.5L860.8 646.4M1568.7 763.1L1613.2 768.7M978.1 683.3L984.0 683.1M846.0 667.1L841.8 665.6M864.7 670.5L881.9 669.3M1193.2 747.1L1205.6 748.8M1244.0 737.6L1249.9 737.7M1386.6 647.6L1380.6 646.1M1498.9 719.5L1520.5 721.3M1478.5 670.3L1498.3 672.1M1087.2 641.9L1086.1 640.8" stroke="#00c8e0" stroke-width="1.5" fill="none" stroke-linecap="round"/><path d="M355.0 768.5L470.0 768.0L564.0 767.5" stroke="#d00000" stroke-width="2.2" fill="none"/><path d="M440.0 775.0L520.0 772.0L564.0 769.0" stroke="#1010c0" stroke-width="2.2" fill="none"/><path d="M500.0 768.0L564.0 766.0" stroke="#b000b0" stroke-width="2.0" fill="none"/><path d="M609.0 763.0L700.0 766.0L848.0 779.0L960.0 795.0L1063.0 811.0L1180.0 830.0" stroke="#d00000" stroke-width="2.0" fill="none"/><path d="M609.0 765.0L700.0 768.0L760.0 770.0L830.0 772.0" stroke="#e0e000" stroke-width="1.8" fill="none"/><path d="M609.0 768.0L700.0 772.0L848.0 785.0L1000.0 806.0" stroke="#c00000" stroke-width="1.8" fill="none"/><path d="M1134.5 1000.4L1344.4 1003.0L1364.3 971.2L1312.5 941.9" stroke="#e00000" stroke-width="1.8" fill="none"/><path d="M1134.5 1000.4L1153.1 1033.6" stroke="#e00000" stroke-width="1.8" fill="none"/><path d="M1308.5 924.7L1312.5 941.9L1365.6 947.3" stroke="#eeee00" stroke-width="1.8" fill="none"/><path d="M1364.3 971.2L1392.2 976.5" stroke="#00e400" stroke-width="1.8" fill="none"/><path d="M1392.2 976.5L1437.3 983.1L1430.7 968.5" stroke="#eeee00" stroke-width="1.8" fill="none"/><path d="M1303.2 912.7L1564.8 999.0" stroke="#40e0ff" stroke-width="1.8" fill="none"/><path d="M1307.2 924.7L1365.6 922.0L1567.5 997.7" stroke="#e00000" stroke-width="1.8" fill="none"/><path d="M1352.3 898.1L1445.3 911.4L1567.5 996.4" stroke="#e00000" stroke-width="1.8" fill="none"/><path d="M1307.2 899.4L1349.7 898.1" stroke="#e00000" stroke-width="1.8" fill="none"/><path d="M1126.6 883.5L1155.8 896.8L1157.1 912.7L1182.3 928.7" stroke="#e00000" stroke-width="1.8" fill="none"/><path d="M1124.9 882.5L1154.4 895.2" stroke="#eeee00" stroke-width="1.8" fill="none"/><path d="M1349.7 874.2L1355.0 887.5L1351.0 898.1L1359.0 907.4" stroke="#00e400" stroke-width="1.8" fill="none"/><path d="M1317.8 866.2L1349.7 874.2L1519.7 882.2L1485.1 892.8L1447.9 911.4" stroke="#eeee00" stroke-width="1.8" fill="none"/><path d="M1355.0 887.5L1514.3 903.4L1602.0 922.0" stroke="#e00000" stroke-width="1.8" fill="none"/><path d="M1307.2 837.0L1511.7 845.0L1594.0 903.4L1575.4 916.7L1602.0 920.7" stroke="#e00000" stroke-width="1.8" fill="none"/><path d="M1386.9 850.3L1458.6 859.6" stroke="#00e400" stroke-width="1.8" fill="none"/><path d="M1458.6 859.6L1551.5 871.6" stroke="#eeee00" stroke-width="1.8" fill="none"/><path d="M1373.6 866.2L1458.6 858.3" stroke="#e00000" stroke-width="1.8" fill="none"/><path d="M1413.4 874.2L1458.6 859.6" stroke="#e00000" stroke-width="1.8" fill="none"/><path d="M1519.7 882.2L1551.5 876.9" stroke="#00e400" stroke-width="1.8" fill="none"/><path d="M1424.0 830.4L1448.0 819.8" stroke="#e00000" stroke-width="1.8" fill="none"/><path d="M1381.5 826.4L1424.0 830.4" stroke="#eeee00" stroke-width="1.8" fill="none"/><path d="M1424.0 830.4L1511.7 845.0" stroke="#e00000" stroke-width="1.8" fill="none"/><path d="M1448.0 922.0L1551.5 946.0L1602.0 951.0" stroke="#eeee00" stroke-width="1.8" fill="none"/><path d="M1448.0 911.4L1525.0 927.3" stroke="#00e400" stroke-width="1.8" fill="none"/><path d="M1530.0 967.2L1602.0 969.8" stroke="#e00000" stroke-width="1.8" fill="none"/><path d="M1530.0 965.8L1602.0 965.8" stroke="#00e400" stroke-width="1.8" fill="none"/><path d="M1564.8 946.0L1580.7 964.5" stroke="#00e400" stroke-width="1.8" fill="none"/><path d="M800.0 777.0L913.9 785.5L968.8 793.9" stroke="#e00000" stroke-width="1.8" fill="none"/><path d="M1044.7 785.5L1095.4 806.6L1188.2 827.7" stroke="#e00000" stroke-width="1.8" fill="none"/><path d="M875.9 865.7L897.0 840.3" stroke="#eeee00" stroke-width="1.8" fill="none"/><path d="M897.0 840.3L909.7 840.3" stroke="#00e400" stroke-width="1.8" fill="none"/><path d="M829.5 857.2L842.2 853.0" stroke="#eeee00" stroke-width="1.8" fill="none"/><path d="M1112.2 793.9L1188.2 815.0L1190.3 827.7" stroke="#e00000" stroke-width="1.8" fill="none"/><path d="M1200.8 831.9L1230.4 831.9L1306.3 825.6" stroke="#e00000" stroke-width="1.8" fill="none"/><path d="M1221.9 802.4L1255.7 785.5L1276.8 781.3" stroke="#e00000" stroke-width="1.8" fill="none"/><path d="M1171.3 745.4L1226.2 766.5L1259.9 762.3L1285.2 749.6" stroke="#e00000" stroke-width="1.8" fill="none"/><path d="M909.7 713.8L943.5 730.6L956.1 734.9" stroke="#e00000" stroke-width="1.8" fill="none"/><path d="M968.8 734.9L1019.4 739.1L1070.0 764.4L1095.4 806.6L1188.2 825.6" stroke="#e00000" stroke-width="1.8" fill="none"/><path d="M871.3 696.7L905.9 710.9L910.0 719.1L924.3 755.8" stroke="#e00000" stroke-width="1.5" fill="none"/><path d="M857.0 699.7L877.4 697.7" stroke="#eeee00" stroke-width="1.5" fill="none"/><path d="M920.2 700.7L942.6 713.0L954.9 735.4" stroke="#e00000" stroke-width="1.5" fill="none"/><path d="M908.0 713.0L975.2 713.0L997.6 745.6" stroke="#e00000" stroke-width="1.5" fill="none"/><path d="M1009.9 710.9L1036.4 745.6" stroke="#e00000" stroke-width="1.5" fill="none"/><path d="M975.2 713.0L1009.9 712.0" stroke="#eeee00" stroke-width="1.5" fill="none"/><path d="M922.2 747.6L1003.7 749.6" stroke="#00e400" stroke-width="1.5" fill="none"/><path d="M1003.7 749.6L1044.5 755.8L1071.0 770.0" stroke="#eeee00" stroke-width="1.5" fill="none"/><path d="M800.0 766.0L867.2 757.8L942.6 759.8L1034.3 747.6L1064.9 745.6" stroke="#e00000" stroke-width="1.5" fill="none"/><path d="M969.1 786.3L1013.9 782.2L1052.6 774.1" stroke="#e00000" stroke-width="1.5" fill="none"/><path d="M934.5 770.0L1003.7 774.1L1054.7 771.0" stroke="#e00000" stroke-width="1.5" fill="none"/><path d="M934.5 780.2L934.5 770.0L946.7 761.9L965.0 756.8" stroke="#eeee00" stroke-width="1.5" fill="none"/><path d="M1013.9 782.2L1058.7 814.9L1064.9 808.7" stroke="#e00000" stroke-width="1.5" fill="none"/><path d="M971.2 792.4L1016.0 794.5L1089.3 802.6L1093.4 810.8L1158.6 849.5" stroke="#e00000" stroke-width="1.5" fill="none"/><path d="M983.4 814.9L1058.7 814.9" stroke="#e00000" stroke-width="1.5" fill="none"/><path d="M1091.4 816.9L1152.5 839.3" stroke="#eeee00" stroke-width="1.5" fill="none"/><path d="M969.1 810.8L987.5 816.9L975.2 823.0L983.4 827.1L975.2 833.2" stroke="#00e400" stroke-width="1.5" fill="none"/><path d="M887.6 845.4L910.0 839.3" stroke="#eeee00" stroke-width="1.5" fill="none"/><path d="M873.3 865.8L887.6 845.4" stroke="#00e400" stroke-width="1.5" fill="none"/><path d="M828.5 858.7L873.3 865.8" stroke="#e00000" stroke-width="1.5" fill="none"/><path d="M828.5 858.7L842.8 851.5" stroke="#eeee00" stroke-width="1.5" fill="none"/><path d="M873.3 865.8L895.8 867.8" stroke="#00e400" stroke-width="1.5" fill="none"/><path d="M826.5 759.8L867.2 759.8" stroke="#00e400" stroke-width="1.5" fill="none"/><path d="M671.9 599.3a3.3 3.3 0 1 0 6.6 0a3.3 3.3 0 1 0 -6.6 0M1114.0 591.2a3.3 3.3 0 1 0 6.6 0a3.3 3.3 0 1 0 -6.6 0M1284.9 634.7a3.3 3.3 0 1 0 6.6 0a3.3 3.3 0 1 0 -6.6 0M1187.4 626.4a3.3 3.3 0 1 0 6.6 0a3.3 3.3 0 1 0 -6.6 0M1333.4 639.0a3.3 3.3 0 1 0 6.6 0a3.3 3.3 0 1 0 -6.6 0M1073.8 589.0a3.3 3.3 0 1 0 6.6 0a3.3 3.3 0 1 0 -6.6 0M1338.7 646.7a3.3 3.3 0 1 0 6.6 0a3.3 3.3 0 1 0 -6.6 0M845.1 593.3a3.3 3.3 0 1 0 6.6 0a3.3 3.3 0 1 0 -6.6 0M1250.8 598.7a3.3 3.3 0 1 0 6.6 0a3.3 3.3 0 1 0 -6.6 0M1035.6 595.6a3.3 3.3 0 1 0 6.6 0a3.3 3.3 0 1 0 -6.6 0M1015.6 620.9a3.3 3.3 0 1 0 6.6 0a3.3 3.3 0 1 0 -6.6 0M971.8 590.3a3.3 3.3 0 1 0 6.6 0a3.3 3.3 0 1 0 -6.6 0M1402.7 613.2a3.3 3.3 0 1 0 6.6 0a3.3 3.3 0 1 0 -6.6 0M1068.7 604.2a3.3 3.3 0 1 0 6.6 0a3.3 3.3 0 1 0 -6.6 0M1206.5 617.5a3.3 3.3 0 1 0 6.6 0a3.3 3.3 0 1 0 -6.6 0M1284.2 612.3a3.3 3.3 0 1 0 6.6 0a3.3 3.3 0 1 0 -6.6 0M747.5 596.4a3.3 3.3 0 1 0 6.6 0a3.3 3.3 0 1 0 -6.6 0M629.3 594.1a3.3 3.3 0 1 0 6.6 0a3.3 3.3 0 1 0 -6.6 0M1001.2 611.0a3.3 3.3 0 1 0 6.6 0a3.3 3.3 0 1 0 -6.6 0M764.8 602.4a3.3 3.3 0 1 0 6.6 0a3.3 3.3 0 1 0 -6.6 0M963.5 575.5a3.3 3.3 0 1 0 6.6 0a3.3 3.3 0 1 0 -6.6 0M984.9 583.8a3.3 3.3 0 1 0 6.6 0a3.3 3.3 0 1 0 -6.6 0M1184.1 623.5a3.3 3.3 0 1 0 6.6 0a3.3 3.3 0 1 0 -6.6 0M937.6 589.1a3.3 3.3 0 1 0 6.6 0a3.3 3.3 0 1 0 -6.6 0M1265.6 614.1a3.3 3.3 0 1 0 6.6 0a3.3 3.3 0 1 0 -6.6 0M825.3 600.6a3.3 3.3 0 1 0 6.6 0a3.3 3.3 0 1 0 -6.6 0M1287.8 601.5a3.3 3.3 0 1 0 6.6 0a3.3 3.3 0 1 0 -6.6 0M802.0 594.4a3.3 3.3 0 1 0 6.6 0a3.3 3.3 0 1 0 -6.6 0M1317.7 645.9a3.3 3.3 0 1 0 6.6 0a3.3 3.3 0 1 0 -6.6 0M939.0 615.7a3.3 3.3 0 1 0 6.6 0a3.3 3.3 0 1 0 -6.6 0M1350.6 623.7a3.3 3.3 0 1 0 6.6 0a3.3 3.3 0 1 0 -6.6 0M970.2 582.9a3.3 3.3 0 1 0 6.6 0a3.3 3.3 0 1 0 -6.6 0M938.5 587.8a3.3 3.3 0 1 0 6.6 0a3.3 3.3 0 1 0 -6.6 0M1041.5 618.1a3.3 3.3 0 1 0 6.6 0a3.3 3.3 0 1 0 -6.6 0M1032.4 591.2a3.3 3.3 0 1 0 6.6 0a3.3 3.3 0 1 0 -6.6 0M781.8 598.4a3.3 3.3 0 1 0 6.6 0a3.3 3.3 0 1 0 -6.6 0M1099.7 589.5a3.3 3.3 0 1 0 6.6 0a3.3 3.3 0 1 0 -6.6 0M1147.7 599.3a3.3 3.3 0 1 0 6.6 0a3.3 3.3 0 1 0 -6.6 0M938.0 572.9a3.3 3.3 0 1 0 6.6 0a3.3 3.3 0 1 0 -6.6 0M1215.6 617.6a3.3 3.3 0 1 0 6.6 0a3.3 3.3 0 1 0 -6.6 0M748.6 604.8a3.3 3.3 0 1 0 6.6 0a3.3 3.3 0 1 0 -6.6 0M1151.0 603.8a3.3 3.3 0 1 0 6.6 0a3.3 3.3 0 1 0 -6.6 0M606.3 589.9a3.3 3.3 0 1 0 6.6 0a3.3 3.3 0 1 0 -6.6 0M1143.9 607.1a3.3 3.3 0 1 0 6.6 0a3.3 3.3 0 1 0 -6.6 0M1050.5 587.5a3.3 3.3 0 1 0 6.6 0a3.3 3.3 0 1 0 -6.6 0M1136.7 614.2a3.3 3.3 0 1 0 6.6 0a3.3 3.3 0 1 0 -6.6 0M1029.0 595.4a3.3 3.3 0 1 0 6.6 0a3.3 3.3 0 1 0 -6.6 0M700.8 604.2a3.3 3.3 0 1 0 6.6 0a3.3 3.3 0 1 0 -6.6 0M1020.5 580.0a3.3 3.3 0 1 0 6.6 0a3.3 3.3 0 1 0 -6.6 0M679.1 599.1a3.3 3.3 0 1 0 6.6 0a3.3 3.3 0 1 0 -6.6 0M1349.0 604.1a3.3 3.3 0 1 0 6.6 0a3.3 3.3 0 1 0 -6.6 0M606.4 594.5a3.3 3.3 0 1 0 6.6 0a3.3 3.3 0 1 0 -6.6 0M1090.7 597.7a3.3 3.3 0 1 0 6.6 0a3.3 3.3 0 1 0 -6.6 0M1266.8 623.0a3.3 3.3 0 1 0 6.6 0a3.3 3.3 0 1 0 -6.6 0M654.9 603.0a3.3 3.3 0 1 0 6.6 0a3.3 3.3 0 1 0 -6.6 0M995.3 594.9a3.3 3.3 0 1 0 6.6 0a3.3 3.3 0 1 0 -6.6 0M1341.5 646.0a3.3 3.3 0 1 0 6.6 0a3.3 3.3 0 1 0 -6.6 0M1234.0 623.2a3.3 3.3 0 1 0 6.6 0a3.3 3.3 0 1 0 -6.6 0M1132.4 614.0a3.3 3.3 0 1 0 6.6 0a3.3 3.3 0 1 0 -6.6 0M1211.8 604.1a3.3 3.3 0 1 0 6.6 0a3.3 3.3 0 1 0 -6.6 0M941.9 592.4a3.3 3.3 0 1 0 6.6 0a3.3 3.3 0 1 0 -6.6 0M831.5 597.2a3.3 3.3 0 1 0 6.6 0a3.3 3.3 0 1 0 -6.6 0M1021.0 596.5a3.3 3.3 0 1 0 6.6 0a3.3 3.3 0 1 0 -6.6 0M987.5 611.7a3.3 3.3 0 1 0 6.6 0a3.3 3.3 0 1 0 -6.6 0M942.8 595.9a3.3 3.3 0 1 0 6.6 0a3.3 3.3 0 1 0 -6.6 0M1401.8 607.1a3.3 3.3 0 1 0 6.6 0a3.3 3.3 0 1 0 -6.6 0M1455.8 617.6a3.3 3.3 0 1 0 6.6 0a3.3 3.3 0 1 0 -6.6 0M1450.9 612.4a3.3 3.3 0 1 0 6.6 0a3.3 3.3 0 1 0 -6.6 0M1089.4 608.5a3.3 3.3 0 1 0 6.6 0a3.3 3.3 0 1 0 -6.6 0M1366.0 619.5a3.3 3.3 0 1 0 6.6 0a3.3 3.3 0 1 0 -6.6 0M923.0 581.4a3.3 3.3 0 1 0 6.6 0a3.3 3.3 0 1 0 -6.6 0M1329.8 609.3a3.3 3.3 0 1 0 6.6 0a3.3 3.3 0 1 0 -6.6 0M1069.7 584.4a3.3 3.3 0 1 0 6.6 0a3.3 3.3 0 1 0 -6.6 0M1072.4 612.4a3.3 3.3 0 1 0 6.6 0a3.3 3.3 0 1 0 -6.6 0M957.0 606.2a3.3 3.3 0 1 0 6.6 0a3.3 3.3 0 1 0 -6.6 0M613.5 591.8a3.3 3.3 0 1 0 6.6 0a3.3 3.3 0 1 0 -6.6 0M750.7 606.9a3.3 3.3 0 1 0 6.6 0a3.3 3.3 0 1 0 -6.6 0M1292.3 600.9a3.3 3.3 0 1 0 6.6 0a3.3 3.3 0 1 0 -6.6 0M984.0 581.2a3.3 3.3 0 1 0 6.6 0a3.3 3.3 0 1 0 -6.6 0M748.1 605.7a3.3 3.3 0 1 0 6.6 0a3.3 3.3 0 1 0 -6.6 0M1262.1 605.3a3.3 3.3 0 1 0 6.6 0a3.3 3.3 0 1 0 -6.6 0M976.4 599.1a3.3 3.3 0 1 0 6.6 0a3.3 3.3 0 1 0 -6.6 0M1262.2 607.9a3.3 3.3 0 1 0 6.6 0a3.3 3.3 0 1 0 -6.6 0M1146.6 621.8a3.3 3.3 0 1 0 6.6 0a3.3 3.3 0 1 0 -6.6 0M1106.9 625.5a3.3 3.3 0 1 0 6.6 0a3.3 3.3 0 1 0 -6.6 0M1060.9 596.8a3.3 3.3 0 1 0 6.6 0a3.3 3.3 0 1 0 -6.6 0M1262.3 604.3a3.3 3.3 0 1 0 6.6 0a3.3 3.3 0 1 0 -6.6 0M1019.8 605.7a3.3 3.3 0 1 0 6.6 0a3.3 3.3 0 1 0 -6.6 0M791.4 594.3a3.3 3.3 0 1 0 6.6 0a3.3 3.3 0 1 0 -6.6 0M1233.0 611.7a3.3 3.3 0 1 0 6.6 0a3.3 3.3 0 1 0 -6.6 0M1107.5 610.0a3.3 3.3 0 1 0 6.6 0a3.3 3.3 0 1 0 -6.6 0M1351.6 602.4a3.3 3.3 0 1 0 6.6 0a3.3 3.3 0 1 0 -6.6 0M1362.2 636.8a3.3 3.3 0 1 0 6.6 0a3.3 3.3 0 1 0 -6.6 0M1451.5 609.9a3.3 3.3 0 1 0 6.6 0a3.3 3.3 0 1 0 -6.6 0M947.8 591.0a3.3 3.3 0 1 0 6.6 0a3.3 3.3 0 1 0 -6.6 0M1222.1 604.8a3.3 3.3 0 1 0 6.6 0a3.3 3.3 0 1 0 -6.6 0M874.5 594.5a3.3 3.3 0 1 0 6.6 0a3.3 3.3 0 1 0 -6.6 0M1149.6 598.7a3.3 3.3 0 1 0 6.6 0a3.3 3.3 0 1 0 -6.6 0M1134.4 587.6a3.3 3.3 0 1 0 6.6 0a3.3 3.3 0 1 0 -6.6 0M954.0 570.9a3.3 3.3 0 1 0 6.6 0a3.3 3.3 0 1 0 -6.6 0M866.8 589.7a3.3 3.3 0 1 0 6.6 0a3.3 3.3 0 1 0 -6.6 0M1292.4 599.4a3.3 3.3 0 1 0 6.6 0a3.3 3.3 0 1 0 -6.6 0M1026.5 577.7a3.3 3.3 0 1 0 6.6 0a3.3 3.3 0 1 0 -6.6 0M1133.8 590.7a3.3 3.3 0 1 0 6.6 0a3.3 3.3 0 1 0 -6.6 0M1010.0 591.2a3.3 3.3 0 1 0 6.6 0a3.3 3.3 0 1 0 -6.6 0M788.9 608.2a3.3 3.3 0 1 0 6.6 0a3.3 3.3 0 1 0 -6.6 0M1245.9 633.8a3.3 3.3 0 1 0 6.6 0a3.3 3.3 0 1 0 -6.6 0M1035.0 597.1a3.3 3.3 0 1 0 6.6 0a3.3 3.3 0 1 0 -6.6 0M665.9 596.0a3.3 3.3 0 1 0 6.6 0a3.3 3.3 0 1 0 -6.6 0M1398.8 606.0a3.3 3.3 0 1 0 6.6 0a3.3 3.3 0 1 0 -6.6 0M1180.6 600.6a3.3 3.3 0 1 0 6.6 0a3.3 3.3 0 1 0 -6.6 0M1401.0 631.1a3.3 3.3 0 1 0 6.6 0a3.3 3.3 0 1 0 -6.6 0M835.8 603.9a3.3 3.3 0 1 0 6.6 0a3.3 3.3 0 1 0 -6.6 0M1088.5 588.4a3.3 3.3 0 1 0 6.6 0a3.3 3.3 0 1 0 -6.6 0M1295.0 604.5a3.3 3.3 0 1 0 6.6 0a3.3 3.3 0 1 0 -6.6 0M1335.0 635.1a3.3 3.3 0 1 0 6.6 0a3.3 3.3 0 1 0 -6.6 0M765.8 608.3a3.3 3.3 0 1 0 6.6 0a3.3 3.3 0 1 0 -6.6 0M1096.2 608.0a3.3 3.3 0 1 0 6.6 0a3.3 3.3 0 1 0 -6.6 0M931.3 603.4a3.3 3.3 0 1 0 6.6 0a3.3 3.3 0 1 0 -6.6 0M1138.1 599.9a3.3 3.3 0 1 0 6.6 0a3.3 3.3 0 1 0 -6.6 0M921.4 594.5a3.3 3.3 0 1 0 6.6 0a3.3 3.3 0 1 0 -6.6 0M1406.8 615.5a3.3 3.3 0 1 0 6.6 0a3.3 3.3 0 1 0 -6.6 0M965.4 569.0a3.3 3.3 0 1 0 6.6 0a3.3 3.3 0 1 0 -6.6 0M857.1 600.2a3.3 3.3 0 1 0 6.6 0a3.3 3.3 0 1 0 -6.6 0M1336.8 609.7a3.3 3.3 0 1 0 6.6 0a3.3 3.3 0 1 0 -6.6 0M1277.4 608.1a3.3 3.3 0 1 0 6.6 0a3.3 3.3 0 1 0 -6.6 0M1119.4 614.4a3.3 3.3 0 1 0 6.6 0a3.3 3.3 0 1 0 -6.6 0M1104.6 613.0a3.3 3.3 0 1 0 6.6 0a3.3 3.3 0 1 0 -6.6 0M999.9 582.5a3.3 3.3 0 1 0 6.6 0a3.3 3.3 0 1 0 -6.6 0M958.6 573.2a3.3 3.3 0 1 0 6.6 0a3.3 3.3 0 1 0 -6.6 0M1325.7 626.9a3.3 3.3 0 1 0 6.6 0a3.3 3.3 0 1 0 -6.6 0M1302.8 620.1a3.3 3.3 0 1 0 6.6 0a3.3 3.3 0 1 0 -6.6 0M979.4 608.9a3.3 3.3 0 1 0 6.6 0a3.3 3.3 0 1 0 -6.6 0M1080.0 619.3a3.3 3.3 0 1 0 6.6 0a3.3 3.3 0 1 0 -6.6 0M1273.3 622.3a3.3 3.3 0 1 0 6.6 0a3.3 3.3 0 1 0 -6.6 0M1023.6 590.5a3.3 3.3 0 1 0 6.6 0a3.3 3.3 0 1 0 -6.6 0M1116.0 612.3a3.3 3.3 0 1 0 6.6 0a3.3 3.3 0 1 0 -6.6 0M967.9 574.0a3.3 3.3 0 1 0 6.6 0a3.3 3.3 0 1 0 -6.6 0M702.6 603.7a3.3 3.3 0 1 0 6.6 0a3.3 3.3 0 1 0 -6.6 0M942.4 610.7a3.3 3.3 0 1 0 6.6 0a3.3 3.3 0 1 0 -6.6 0M1243.0 641.9a3.3 3.3 0 1 0 6.6 0a3.3 3.3 0 1 0 -6.6 0M1352.3 614.5a3.3 3.3 0 1 0 6.6 0a3.3 3.3 0 1 0 -6.6 0M610.3 590.1a3.3 3.3 0 1 0 6.6 0a3.3 3.3 0 1 0 -6.6 0M1379.4 604.1a3.3 3.3 0 1 0 6.6 0a3.3 3.3 0 1 0 -6.6 0M1378.5 621.2a3.3 3.3 0 1 0 6.6 0a3.3 3.3 0 1 0 -6.6 0M1204.5 606.7a3.3 3.3 0 1 0 6.6 0a3.3 3.3 0 1 0 -6.6 0M938.7 586.5a3.3 3.3 0 1 0 6.6 0a3.3 3.3 0 1 0 -6.6 0M687.9 602.7a3.3 3.3 0 1 0 6.6 0a3.3 3.3 0 1 0 -6.6 0M1150.2 603.2a3.3 3.3 0 1 0 6.6 0a3.3 3.3 0 1 0 -6.6 0M990.4 606.0a3.3 3.3 0 1 0 6.6 0a3.3 3.3 0 1 0 -6.6 0M932.9 606.8a3.3 3.3 0 1 0 6.6 0a3.3 3.3 0 1 0 -6.6 0M1038.0 593.3a3.3 3.3 0 1 0 6.6 0a3.3 3.3 0 1 0 -6.6 0M1120.3 597.4a3.3 3.3 0 1 0 6.6 0a3.3 3.3 0 1 0 -6.6 0M1031.6 604.4a3.3 3.3 0 1 0 6.6 0a3.3 3.3 0 1 0 -6.6 0M1034.7 618.4a3.3 3.3 0 1 0 6.6 0a3.3 3.3 0 1 0 -6.6 0M1042.1 587.1a3.3 3.3 0 1 0 6.6 0a3.3 3.3 0 1 0 -6.6 0M1083.1 616.9a3.3 3.3 0 1 0 6.6 0a3.3 3.3 0 1 0 -6.6 0M1068.3 598.5a3.3 3.3 0 1 0 6.6 0a3.3 3.3 0 1 0 -6.6 0M963.0 600.4a3.3 3.3 0 1 0 6.6 0a3.3 3.3 0 1 0 -6.6 0M956.0 612.6a3.3 3.3 0 1 0 6.6 0a3.3 3.3 0 1 0 -6.6 0M702.0 598.4a3.3 3.3 0 1 0 6.6 0a3.3 3.3 0 1 0 -6.6 0M1026.3 593.5a3.3 3.3 0 1 0 6.6 0a3.3 3.3 0 1 0 -6.6 0M1052.1 593.8a3.3 3.3 0 1 0 6.6 0a3.3 3.3 0 1 0 -6.6 0M681.7 601.9a3.3 3.3 0 1 0 6.6 0a3.3 3.3 0 1 0 -6.6 0M1000.6 609.2a3.3 3.3 0 1 0 6.6 0a3.3 3.3 0 1 0 -6.6 0M1285.2 621.6a3.3 3.3 0 1 0 6.6 0a3.3 3.3 0 1 0 -6.6 0M1014.0 609.9a3.3 3.3 0 1 0 6.6 0a3.3 3.3 0 1 0 -6.6 0M653.0 600.2a3.3 3.3 0 1 0 6.6 0a3.3 3.3 0 1 0 -6.6 0M1025.7 585.6a3.3 3.3 0 1 0 6.6 0a3.3 3.3 0 1 0 -6.6 0M1055.6 613.4a3.3 3.3 0 1 0 6.6 0a3.3 3.3 0 1 0 -6.6 0M911.1 578.8a3.3 3.3 0 1 0 6.6 0a3.3 3.3 0 1 0 -6.6 0M1400.3 612.9a3.3 3.3 0 1 0 6.6 0a3.3 3.3 0 1 0 -6.6 0M1302.4 611.3a3.3 3.3 0 1 0 6.6 0a3.3 3.3 0 1 0 -6.6 0M1041.1 583.9a3.3 3.3 0 1 0 6.6 0a3.3 3.3 0 1 0 -6.6 0M1028.1 609.0a3.3 3.3 0 1 0 6.6 0a3.3 3.3 0 1 0 -6.6 0M872.8 587.3a3.3 3.3 0 1 0 6.6 0a3.3 3.3 0 1 0 -6.6 0M1336.9 606.0a3.3 3.3 0 1 0 6.6 0a3.3 3.3 0 1 0 -6.6 0M1267.7 604.9a3.3 3.3 0 1 0 6.6 0a3.3 3.3 0 1 0 -6.6 0M974.7 591.4a3.3 3.3 0 1 0 6.6 0a3.3 3.3 0 1 0 -6.6 0M1147.0 590.1a3.3 3.3 0 1 0 6.6 0a3.3 3.3 0 1 0 -6.6 0M1100.1 595.7a3.3 3.3 0 1 0 6.6 0a3.3 3.3 0 1 0 -6.6 0M1147.5 593.5a3.3 3.3 0 1 0 6.6 0a3.3 3.3 0 1 0 -6.6 0M1102.9 625.6a3.3 3.3 0 1 0 6.6 0a3.3 3.3 0 1 0 -6.6 0M839.9 594.0a3.3 3.3 0 1 0 6.6 0a3.3 3.3 0 1 0 -6.6 0M1156.8 590.2a3.3 3.3 0 1 0 6.6 0a3.3 3.3 0 1 0 -6.6 0M1067.8 598.4a3.3 3.3 0 1 0 6.6 0a3.3 3.3 0 1 0 -6.6 0M1457.8 611.0a3.3 3.3 0 1 0 6.6 0a3.3 3.3 0 1 0 -6.6 0M1170.6 611.4a3.3 3.3 0 1 0 6.6 0a3.3 3.3 0 1 0 -6.6 0M620.5 595.8a3.3 3.3 0 1 0 6.6 0a3.3 3.3 0 1 0 -6.6 0M903.4 587.5a3.3 3.3 0 1 0 6.6 0a3.3 3.3 0 1 0 -6.6 0M869.5 588.6a3.3 3.3 0 1 0 6.6 0a3.3 3.3 0 1 0 -6.6 0M1175.6 616.9a3.3 3.3 0 1 0 6.6 0a3.3 3.3 0 1 0 -6.6 0M735.8 594.6a3.3 3.3 0 1 0 6.6 0a3.3 3.3 0 1 0 -6.6 0M1018.2 587.5a3.3 3.3 0 1 0 6.6 0a3.3 3.3 0 1 0 -6.6 0M1015.8 596.0a3.3 3.3 0 1 0 6.6 0a3.3 3.3 0 1 0 -6.6 0M1135.3 599.5a3.3 3.3 0 1 0 6.6 0a3.3 3.3 0 1 0 -6.6 0M987.2 578.6a3.3 3.3 0 1 0 6.6 0a3.3 3.3 0 1 0 -6.6 0M754.0 596.2a3.3 3.3 0 1 0 6.6 0a3.3 3.3 0 1 0 -6.6 0M1335.8 603.3a3.3 3.3 0 1 0 6.6 0a3.3 3.3 0 1 0 -6.6 0M1117.6 616.2a3.3 3.3 0 1 0 6.6 0a3.3 3.3 0 1 0 -6.6 0M1187.9 621.8a3.3 3.3 0 1 0 6.6 0a3.3 3.3 0 1 0 -6.6 0M707.9 600.6a3.3 3.3 0 1 0 6.6 0a3.3 3.3 0 1 0 -6.6 0M1275.3 616.5a3.3 3.3 0 1 0 6.6 0a3.3 3.3 0 1 0 -6.6 0M1237.8 620.6a3.3 3.3 0 1 0 6.6 0a3.3 3.3 0 1 0 -6.6 0M1334.0 627.1a3.3 3.3 0 1 0 6.6 0a3.3 3.3 0 1 0 -6.6 0M1007.4 579.9a3.3 3.3 0 1 0 6.6 0a3.3 3.3 0 1 0 -6.6 0M666.4 598.7a3.3 3.3 0 1 0 6.6 0a3.3 3.3 0 1 0 -6.6 0M1055.6 592.2a3.3 3.3 0 1 0 6.6 0a3.3 3.3 0 1 0 -6.6 0M1068.6 586.5a3.3 3.3 0 1 0 6.6 0a3.3 3.3 0 1 0 -6.6 0M1182.4 612.0a3.3 3.3 0 1 0 6.6 0a3.3 3.3 0 1 0 -6.6 0M1470.3 612.9a3.3 3.3 0 1 0 6.6 0a3.3 3.3 0 1 0 -6.6 0M1194.8 597.0a3.3 3.3 0 1 0 6.6 0a3.3 3.3 0 1 0 -6.6 0M1095.0 616.6a3.3 3.3 0 1 0 6.6 0a3.3 3.3 0 1 0 -6.6 0M1317.7 631.3a3.3 3.3 0 1 0 6.6 0a3.3 3.3 0 1 0 -6.6 0M822.0 601.3a3.3 3.3 0 1 0 6.6 0a3.3 3.3 0 1 0 -6.6 0M923.2 590.7a3.3 3.3 0 1 0 6.6 0a3.3 3.3 0 1 0 -6.6 0M1431.5 628.5a3.3 3.3 0 1 0 6.6 0a3.3 3.3 0 1 0 -6.6 0M817.1 597.3a3.3 3.3 0 1 0 6.6 0a3.3 3.3 0 1 0 -6.6 0M943.1 583.7a3.3 3.3 0 1 0 6.6 0a3.3 3.3 0 1 0 -6.6 0M611.9 597.4a3.3 3.3 0 1 0 6.6 0a3.3 3.3 0 1 0 -6.6 0M897.5 590.4a3.3 3.3 0 1 0 6.6 0a3.3 3.3 0 1 0 -6.6 0M1270.6 633.6a3.3 3.3 0 1 0 6.6 0a3.3 3.3 0 1 0 -6.6 0M1033.4 621.9a3.3 3.3 0 1 0 6.6 0a3.3 3.3 0 1 0 -6.6 0M1175.0 635.8a3.3 3.3 0 1 0 6.6 0a3.3 3.3 0 1 0 -6.6 0M1119.8 615.9a3.3 3.3 0 1 0 6.6 0a3.3 3.3 0 1 0 -6.6 0M718.6 607.9a3.3 3.3 0 1 0 6.6 0a3.3 3.3 0 1 0 -6.6 0M1046.5 611.2a3.3 3.3 0 1 0 6.6 0a3.3 3.3 0 1 0 -6.6 0M729.4 607.1a3.3 3.3 0 1 0 6.6 0a3.3 3.3 0 1 0 -6.6 0M1297.2 637.3a3.3 3.3 0 1 0 6.6 0a3.3 3.3 0 1 0 -6.6 0M1093.6 622.8a3.3 3.3 0 1 0 6.6 0a3.3 3.3 0 1 0 -6.6 0M1010.5 581.8a3.3 3.3 0 1 0 6.6 0a3.3 3.3 0 1 0 -6.6 0M964.9 605.0a3.3 3.3 0 1 0 6.6 0a3.3 3.3 0 1 0 -6.6 0M969.1 583.0a3.3 3.3 0 1 0 6.6 0a3.3 3.3 0 1 0 -6.6 0M1261.3 614.2a3.3 3.3 0 1 0 6.6 0a3.3 3.3 0 1 0 -6.6 0M1112.6 624.2a3.3 3.3 0 1 0 6.6 0a3.3 3.3 0 1 0 -6.6 0M1273.4 646.7a3.3 3.3 0 1 0 6.6 0a3.3 3.3 0 1 0 -6.6 0M673.9 602.1a3.3 3.3 0 1 0 6.6 0a3.3 3.3 0 1 0 -6.6 0M1079.0 585.8a3.3 3.3 0 1 0 6.6 0a3.3 3.3 0 1 0 -6.6 0M741.8 605.6a3.3 3.3 0 1 0 6.6 0a3.3 3.3 0 1 0 -6.6 0M1180.0 608.0a3.3 3.3 0 1 0 6.6 0a3.3 3.3 0 1 0 -6.6 0M971.5 581.8a3.3 3.3 0 1 0 6.6 0a3.3 3.3 0 1 0 -6.6 0M812.7 594.5a3.3 3.3 0 1 0 6.6 0a3.3 3.3 0 1 0 -6.6 0M1015.0 615.9a3.3 3.3 0 1 0 6.6 0a3.3 3.3 0 1 0 -6.6 0M1303.1 628.1a3.3 3.3 0 1 0 6.6 0a3.3 3.3 0 1 0 -6.6 0M901.4 581.7a3.3 3.3 0 1 0 6.6 0a3.3 3.3 0 1 0 -6.6 0M1318.3 612.9a3.3 3.3 0 1 0 6.6 0a3.3 3.3 0 1 0 -6.6 0M1359.8 605.4a3.3 3.3 0 1 0 6.6 0a3.3 3.3 0 1 0 -6.6 0M1062.6 586.1a3.3 3.3 0 1 0 6.6 0a3.3 3.3 0 1 0 -6.6 0M1120.1 591.4a3.3 3.3 0 1 0 6.6 0a3.3 3.3 0 1 0 -6.6 0M1104.3 623.7a3.3 3.3 0 1 0 6.6 0a3.3 3.3 0 1 0 -6.6 0M1021.9 579.9a3.3 3.3 0 1 0 6.6 0a3.3 3.3 0 1 0 -6.6 0M1356.3 602.1a3.3 3.3 0 1 0 6.6 0a3.3 3.3 0 1 0 -6.6 0M1177.7 614.3a3.3 3.3 0 1 0 6.6 0a3.3 3.3 0 1 0 -6.6 0M1065.9 589.5a3.3 3.3 0 1 0 6.6 0a3.3 3.3 0 1 0 -6.6 0M638.0 598.2a3.3 3.3 0 1 0 6.6 0a3.3 3.3 0 1 0 -6.6 0M924.4 580.0a3.3 3.3 0 1 0 6.6 0a3.3 3.3 0 1 0 -6.6 0M836.3 595.4a3.3 3.3 0 1 0 6.6 0a3.3 3.3 0 1 0 -6.6 0M1071.8 598.0a3.3 3.3 0 1 0 6.6 0a3.3 3.3 0 1 0 -6.6 0M1138.4 607.0a3.3 3.3 0 1 0 6.6 0a3.3 3.3 0 1 0 -6.6 0M947.4 576.9a3.3 3.3 0 1 0 6.6 0a3.3 3.3 0 1 0 -6.6 0M1350.2 628.0a3.3 3.3 0 1 0 6.6 0a3.3 3.3 0 1 0 -6.6 0M1021.5 577.1a3.3 3.3 0 1 0 6.6 0a3.3 3.3 0 1 0 -6.6 0M623.5 595.4a3.3 3.3 0 1 0 6.6 0a3.3 3.3 0 1 0 -6.6 0M1218.2 598.8a3.3 3.3 0 1 0 6.6 0a3.3 3.3 0 1 0 -6.6 0M1371.0 633.5a3.3 3.3 0 1 0 6.6 0a3.3 3.3 0 1 0 -6.6 0M1074.3 599.9a3.3 3.3 0 1 0 6.6 0a3.3 3.3 0 1 0 -6.6 0M1273.7 623.0a3.3 3.3 0 1 0 6.6 0a3.3 3.3 0 1 0 -6.6 0M994.0 582.6a3.3 3.3 0 1 0 6.6 0a3.3 3.3 0 1 0 -6.6 0M938.7 595.8a3.3 3.3 0 1 0 6.6 0a3.3 3.3 0 1 0 -6.6 0M808.1 597.1a3.3 3.3 0 1 0 6.6 0a3.3 3.3 0 1 0 -6.6 0M995.3 607.2a3.3 3.3 0 1 0 6.6 0a3.3 3.3 0 1 0 -6.6 0M999.2 596.7a3.3 3.3 0 1 0 6.6 0a3.3 3.3 0 1 0 -6.6 0M1116.4 614.3a3.3 3.3 0 1 0 6.6 0a3.3 3.3 0 1 0 -6.6 0M1400.6 631.6a3.3 3.3 0 1 0 6.6 0a3.3 3.3 0 1 0 -6.6 0M1328.3 628.4a3.3 3.3 0 1 0 6.6 0a3.3 3.3 0 1 0 -6.6 0M1283.3 607.7a3.3 3.3 0 1 0 6.6 0a3.3 3.3 0 1 0 -6.6 0M1185.0 603.6a3.3 3.3 0 1 0 6.6 0a3.3 3.3 0 1 0 -6.6 0M941.1 607.8a3.3 3.3 0 1 0 6.6 0a3.3 3.3 0 1 0 -6.6 0M1047.6 596.4a3.3 3.3 0 1 0 6.6 0a3.3 3.3 0 1 0 -6.6 0M907.7 597.4a3.3 3.3 0 1 0 6.6 0a3.3 3.3 0 1 0 -6.6 0M1282.5 610.8a3.3 3.3 0 1 0 6.6 0a3.3 3.3 0 1 0 -6.6 0M1089.8 611.6a3.3 3.3 0 1 0 6.6 0a3.3 3.3 0 1 0 -6.6 0M1133.7 591.3a3.3 3.3 0 1 0 6.6 0a3.3 3.3 0 1 0 -6.6 0M1033.1 617.5a3.3 3.3 0 1 0 6.6 0a3.3 3.3 0 1 0 -6.6 0M673.4 600.1a3.3 3.3 0 1 0 6.6 0a3.3 3.3 0 1 0 -6.6 0M1175.5 596.8a3.3 3.3 0 1 0 6.6 0a3.3 3.3 0 1 0 -6.6 0M1234.0 638.9a3.3 3.3 0 1 0 6.6 0a3.3 3.3 0 1 0 -6.6 0M1027.6 589.4a3.3 3.3 0 1 0 6.6 0a3.3 3.3 0 1 0 -6.6 0M1411.2 632.4a3.3 3.3 0 1 0 6.6 0a3.3 3.3 0 1 0 -6.6 0M904.0 590.4a3.3 3.3 0 1 0 6.6 0a3.3 3.3 0 1 0 -6.6 0M617.9 596.4a3.3 3.3 0 1 0 6.6 0a3.3 3.3 0 1 0 -6.6 0M1157.7 612.2a3.3 3.3 0 1 0 6.6 0a3.3 3.3 0 1 0 -6.6 0M968.1 583.3a3.3 3.3 0 1 0 6.6 0a3.3 3.3 0 1 0 -6.6 0M1279.8 633.9a3.3 3.3 0 1 0 6.6 0a3.3 3.3 0 1 0 -6.6 0M796.3 603.1a3.3 3.3 0 1 0 6.6 0a3.3 3.3 0 1 0 -6.6 0M707.7 596.9a3.3 3.3 0 1 0 6.6 0a3.3 3.3 0 1 0 -6.6 0M911.1 595.0a3.3 3.3 0 1 0 6.6 0a3.3 3.3 0 1 0 -6.6 0M1106.9 598.8a3.3 3.3 0 1 0 6.6 0a3.3 3.3 0 1 0 -6.6 0M1158.3 617.8a3.3 3.3 0 1 0 6.6 0a3.3 3.3 0 1 0 -6.6 0M929.0 606.0a3.3 3.3 0 1 0 6.6 0a3.3 3.3 0 1 0 -6.6 0M809.0 607.2a3.3 3.3 0 1 0 6.6 0a3.3 3.3 0 1 0 -6.6 0M962.9 602.1a3.3 3.3 0 1 0 6.6 0a3.3 3.3 0 1 0 -6.6 0M1396.2 612.7a3.3 3.3 0 1 0 6.6 0a3.3 3.3 0 1 0 -6.6 0M627.5 592.8a3.3 3.3 0 1 0 6.6 0a3.3 3.3 0 1 0 -6.6 0M968.5 590.1a3.3 3.3 0 1 0 6.6 0a3.3 3.3 0 1 0 -6.6 0M1339.3 604.8a3.3 3.3 0 1 0 6.6 0a3.3 3.3 0 1 0 -6.6 0M739.1 597.3a3.3 3.3 0 1 0 6.6 0a3.3 3.3 0 1 0 -6.6 0M1005.1 609.1a3.3 3.3 0 1 0 6.6 0a3.3 3.3 0 1 0 -6.6 0M1023.5 592.5a3.3 3.3 0 1 0 6.6 0a3.3 3.3 0 1 0 -6.6 0M1216.1 631.5a3.3 3.3 0 1 0 6.6 0a3.3 3.3 0 1 0 -6.6 0M1025.9 587.1a3.3 3.3 0 1 0 6.6 0a3.3 3.3 0 1 0 -6.6 0M988.9 606.1a3.3 3.3 0 1 0 6.6 0a3.3 3.3 0 1 0 -6.6 0M1098.9 596.9a3.3 3.3 0 1 0 6.6 0a3.3 3.3 0 1 0 -6.6 0M1117.3 595.8a3.3 3.3 0 1 0 6.6 0a3.3 3.3 0 1 0 -6.6 0M901.0 588.7a3.3 3.3 0 1 0 6.6 0a3.3 3.3 0 1 0 -6.6 0M936.4 572.7a3.3 3.3 0 1 0 6.6 0a3.3 3.3 0 1 0 -6.6 0M1155.5 597.8a3.3 3.3 0 1 0 6.6 0a3.3 3.3 0 1 0 -6.6 0M809.2 602.7a3.3 3.3 0 1 0 6.6 0a3.3 3.3 0 1 0 -6.6 0M1430.8 616.4a3.3 3.3 0 1 0 6.6 0a3.3 3.3 0 1 0 -6.6 0M631.5 595.9a3.3 3.3 0 1 0 6.6 0a3.3 3.3 0 1 0 -6.6 0M1189.3 618.0a3.3 3.3 0 1 0 6.6 0a3.3 3.3 0 1 0 -6.6 0M1433.6 616.4a3.3 3.3 0 1 0 6.6 0a3.3 3.3 0 1 0 -6.6 0M614.3 593.4a3.3 3.3 0 1 0 6.6 0a3.3 3.3 0 1 0 -6.6 0M1061.5 623.5a3.3 3.3 0 1 0 6.6 0a3.3 3.3 0 1 0 -6.6 0M884.4 585.6a3.3 3.3 0 1 0 6.6 0a3.3 3.3 0 1 0 -6.6 0M846.2 595.2a3.3 3.3 0 1 0 6.6 0a3.3 3.3 0 1 0 -6.6 0M1104.3 593.4a3.3 3.3 0 1 0 6.6 0a3.3 3.3 0 1 0 -6.6 0M1243.5 627.5a3.3 3.3 0 1 0 6.6 0a3.3 3.3 0 1 0 -6.6 0M1294.8 626.3a3.3 3.3 0 1 0 6.6 0a3.3 3.3 0 1 0 -6.6 0M938.8 598.5a3.3 3.3 0 1 0 6.6 0a3.3 3.3 0 1 0 -6.6 0M974.9 580.6a3.3 3.3 0 1 0 6.6 0a3.3 3.3 0 1 0 -6.6 0M1392.0 636.3a3.3 3.3 0 1 0 6.6 0a3.3 3.3 0 1 0 -6.6 0M1055.8 594.5a3.3 3.3 0 1 0 6.6 0a3.3 3.3 0 1 0 -6.6 0M1331.5 612.8a3.3 3.3 0 1 0 6.6 0a3.3 3.3 0 1 0 -6.6 0M1009.9 597.2a3.3 3.3 0 1 0 6.6 0a3.3 3.3 0 1 0 -6.6 0M1162.5 599.7a3.3 3.3 0 1 0 6.6 0a3.3 3.3 0 1 0 -6.6 0M1133.4 609.3a3.3 3.3 0 1 0 6.6 0a3.3 3.3 0 1 0 -6.6 0M1042.5 621.8a3.3 3.3 0 1 0 6.6 0a3.3 3.3 0 1 0 -6.6 0M1135.4 606.5a3.3 3.3 0 1 0 6.6 0a3.3 3.3 0 1 0 -6.6 0M1003.6 577.9a3.3 3.3 0 1 0 6.6 0a3.3 3.3 0 1 0 -6.6 0M1030.8 587.8a3.3 3.3 0 1 0 6.6 0a3.3 3.3 0 1 0 -6.6 0M1037.8 590.1a3.3 3.3 0 1 0 6.6 0a3.3 3.3 0 1 0 -6.6 0M1431.1 615.0a3.3 3.3 0 1 0 6.6 0a3.3 3.3 0 1 0 -6.6 0M923.8 578.0a3.3 3.3 0 1 0 6.6 0a3.3 3.3 0 1 0 -6.6 0M1144.2 619.7a3.3 3.3 0 1 0 6.6 0a3.3 3.3 0 1 0 -6.6 0M1009.4 586.9a3.3 3.3 0 1 0 6.6 0a3.3 3.3 0 1 0 -6.6 0M878.3 587.4a3.3 3.3 0 1 0 6.6 0a3.3 3.3 0 1 0 -6.6 0M1007.1 606.0a3.3 3.3 0 1 0 6.6 0a3.3 3.3 0 1 0 -6.6 0M932.0 606.5a3.3 3.3 0 1 0 6.6 0a3.3 3.3 0 1 0 -6.6 0M998.6 580.1a3.3 3.3 0 1 0 6.6 0a3.3 3.3 0 1 0 -6.6 0M1291.1 600.5a3.3 3.3 0 1 0 6.6 0a3.3 3.3 0 1 0 -6.6 0M919.9 580.6a3.3 3.3 0 1 0 6.6 0a3.3 3.3 0 1 0 -6.6 0M966.9 614.5a3.3 3.3 0 1 0 6.6 0a3.3 3.3 0 1 0 -6.6 0M1246.7 620.9a3.3 3.3 0 1 0 6.6 0a3.3 3.3 0 1 0 -6.6 0M970.6 587.5a3.3 3.3 0 1 0 6.6 0a3.3 3.3 0 1 0 -6.6 0M1202.7 631.6a3.3 3.3 0 1 0 6.6 0a3.3 3.3 0 1 0 -6.6 0M1209.1 601.3a3.3 3.3 0 1 0 6.6 0a3.3 3.3 0 1 0 -6.6 0M1149.2 594.8a3.3 3.3 0 1 0 6.6 0a3.3 3.3 0 1 0 -6.6 0M1106.3 622.8a3.3 3.3 0 1 0 6.6 0a3.3 3.3 0 1 0 -6.6 0M1083.6 593.5a3.3 3.3 0 1 0 6.6 0a3.3 3.3 0 1 0 -6.6 0M1376.8 607.1a3.3 3.3 0 1 0 6.6 0a3.3 3.3 0 1 0 -6.6 0M1202.6 633.1a3.3 3.3 0 1 0 6.6 0a3.3 3.3 0 1 0 -6.6 0M1077.5 609.4a3.3 3.3 0 1 0 6.6 0a3.3 3.3 0 1 0 -6.6 0M1335.1 617.6a3.3 3.3 0 1 0 6.6 0a3.3 3.3 0 1 0 -6.6 0M1288.8 625.2a3.3 3.3 0 1 0 6.6 0a3.3 3.3 0 1 0 -6.6 0M1207.5 598.5a3.3 3.3 0 1 0 6.6 0a3.3 3.3 0 1 0 -6.6 0M1114.4 598.5a3.3 3.3 0 1 0 6.6 0a3.3 3.3 0 1 0 -6.6 0M669.6 598.4a3.3 3.3 0 1 0 6.6 0a3.3 3.3 0 1 0 -6.6 0M1094.0 609.9a3.3 3.3 0 1 0 6.6 0a3.3 3.3 0 1 0 -6.6 0M1269.5 606.9a3.3 3.3 0 1 0 6.6 0a3.3 3.3 0 1 0 -6.6 0M1006.2 591.7a3.3 3.3 0 1 0 6.6 0a3.3 3.3 0 1 0 -6.6 0M1009.2 581.6a3.3 3.3 0 1 0 6.6 0a3.3 3.3 0 1 0 -6.6 0M761.9 599.5a3.3 3.3 0 1 0 6.6 0a3.3 3.3 0 1 0 -6.6 0M1229.3 637.9a3.3 3.3 0 1 0 6.6 0a3.3 3.3 0 1 0 -6.6 0M978.3 587.4a3.3 3.3 0 1 0 6.6 0a3.3 3.3 0 1 0 -6.6 0M1320.3 633.1a3.3 3.3 0 1 0 6.6 0a3.3 3.3 0 1 0 -6.6 0M1373.0 619.0a3.3 3.3 0 1 0 6.6 0a3.3 3.3 0 1 0 -6.6 0M944.9 579.5a3.3 3.3 0 1 0 6.6 0a3.3 3.3 0 1 0 -6.6 0M906.0 584.5a3.3 3.3 0 1 0 6.6 0a3.3 3.3 0 1 0 -6.6 0M897.8 599.6a3.3 3.3 0 1 0 6.6 0a3.3 3.3 0 1 0 -6.6 0M1138.4 600.9a3.3 3.3 0 1 0 6.6 0a3.3 3.3 0 1 0 -6.6 0M1197.2 606.9a3.3 3.3 0 1 0 6.6 0a3.3 3.3 0 1 0 -6.6 0M894.5 587.2a3.3 3.3 0 1 0 6.6 0a3.3 3.3 0 1 0 -6.6 0M1199.0 622.0a3.3 3.3 0 1 0 6.6 0a3.3 3.3 0 1 0 -6.6 0M1226.4 597.7a3.3 3.3 0 1 0 6.6 0a3.3 3.3 0 1 0 -6.6 0M1270.1 598.0a3.3 3.3 0 1 0 6.6 0a3.3 3.3 0 1 0 -6.6 0M1122.9 606.6a3.3 3.3 0 1 0 6.6 0a3.3 3.3 0 1 0 -6.6 0M1365.8 614.6a3.3 3.3 0 1 0 6.6 0a3.3 3.3 0 1 0 -6.6 0M1070.6 604.7a3.3 3.3 0 1 0 6.6 0a3.3 3.3 0 1 0 -6.6 0M1316.9 603.4a3.3 3.3 0 1 0 6.6 0a3.3 3.3 0 1 0 -6.6 0M1296.8 626.2a3.3 3.3 0 1 0 6.6 0a3.3 3.3 0 1 0 -6.6 0M909.6 590.1a3.3 3.3 0 1 0 6.6 0a3.3 3.3 0 1 0 -6.6 0M889.7 589.1a3.3 3.3 0 1 0 6.6 0a3.3 3.3 0 1 0 -6.6 0M800.2 600.5a3.3 3.3 0 1 0 6.6 0a3.3 3.3 0 1 0 -6.6 0M1093.5 588.5a3.3 3.3 0 1 0 6.6 0a3.3 3.3 0 1 0 -6.6 0M872.2 603.3a3.3 3.3 0 1 0 6.6 0a3.3 3.3 0 1 0 -6.6 0M1265.5 632.6a3.3 3.3 0 1 0 6.6 0a3.3 3.3 0 1 0 -6.6 0M1344.0 613.1a3.3 3.3 0 1 0 6.6 0a3.3 3.3 0 1 0 -6.6 0M1452.8 619.4a3.3 3.3 0 1 0 6.6 0a3.3 3.3 0 1 0 -6.6 0M1016.0 612.9a3.3 3.3 0 1 0 6.6 0a3.3 3.3 0 1 0 -6.6 0M760.3 594.2a3.3 3.3 0 1 0 6.6 0a3.3 3.3 0 1 0 -6.6 0M933.6 579.7a3.3 3.3 0 1 0 6.6 0a3.3 3.3 0 1 0 -6.6 0M1239.3 629.5a3.3 3.3 0 1 0 6.6 0a3.3 3.3 0 1 0 -6.6 0M1165.2 592.5a3.3 3.3 0 1 0 6.6 0a3.3 3.3 0 1 0 -6.6 0M1205.8 621.4a3.3 3.3 0 1 0 6.6 0a3.3 3.3 0 1 0 -6.6 0M1241.1 600.0a3.3 3.3 0 1 0 6.6 0a3.3 3.3 0 1 0 -6.6 0M1147.4 620.3a3.3 3.3 0 1 0 6.6 0a3.3 3.3 0 1 0 -6.6 0M1189.4 622.6a3.3 3.3 0 1 0 6.6 0a3.3 3.3 0 1 0 -6.6 0M1404.8 634.1a3.3 3.3 0 1 0 6.6 0a3.3 3.3 0 1 0 -6.6 0M1223.2 620.7a3.3 3.3 0 1 0 6.6 0a3.3 3.3 0 1 0 -6.6 0M819.3 606.5a3.3 3.3 0 1 0 6.6 0a3.3 3.3 0 1 0 -6.6 0M884.9 593.3a3.3 3.3 0 1 0 6.6 0a3.3 3.3 0 1 0 -6.6 0M1277.1 616.8a3.3 3.3 0 1 0 6.6 0a3.3 3.3 0 1 0 -6.6 0M1267.6 622.4a3.3 3.3 0 1 0 6.6 0a3.3 3.3 0 1 0 -6.6 0M1050.7 595.8a3.3 3.3 0 1 0 6.6 0a3.3 3.3 0 1 0 -6.6 0M1196.7 594.1a3.3 3.3 0 1 0 6.6 0a3.3 3.3 0 1 0 -6.6 0M735.2 596.2a3.3 3.3 0 1 0 6.6 0a3.3 3.3 0 1 0 -6.6 0M1284.9 622.4a3.3 3.3 0 1 0 6.6 0a3.3 3.3 0 1 0 -6.6 0M1171.7 607.6a3.3 3.3 0 1 0 6.6 0a3.3 3.3 0 1 0 -6.6 0M685.9 596.7a3.3 3.3 0 1 0 6.6 0a3.3 3.3 0 1 0 -6.6 0M1228.7 625.2a3.3 3.3 0 1 0 6.6 0a3.3 3.3 0 1 0 -6.6 0M1009.7 581.0a3.3 3.3 0 1 0 6.6 0a3.3 3.3 0 1 0 -6.6 0M1344.1 624.0a3.3 3.3 0 1 0 6.6 0a3.3 3.3 0 1 0 -6.6 0M967.4 570.6a3.3 3.3 0 1 0 6.6 0a3.3 3.3 0 1 0 -6.6 0M937.9 614.4a3.3 3.3 0 1 0 6.6 0a3.3 3.3 0 1 0 -6.6 0M990.7 585.9a3.3 3.3 0 1 0 6.6 0a3.3 3.3 0 1 0 -6.6 0M1147.1 591.0a3.3 3.3 0 1 0 6.6 0a3.3 3.3 0 1 0 -6.6 0M673.5 600.2a3.3 3.3 0 1 0 6.6 0a3.3 3.3 0 1 0 -6.6 0M1058.8 613.5a3.3 3.3 0 1 0 6.6 0a3.3 3.3 0 1 0 -6.6 0M863.3 599.5a3.3 3.3 0 1 0 6.6 0a3.3 3.3 0 1 0 -6.6 0M1466.0 616.1a3.3 3.3 0 1 0 6.6 0a3.3 3.3 0 1 0 -6.6 0M1213.4 619.3a3.3 3.3 0 1 0 6.6 0a3.3 3.3 0 1 0 -6.6 0M1026.0 598.9a3.3 3.3 0 1 0 6.6 0a3.3 3.3 0 1 0 -6.6 0M961.7 593.4a3.3 3.3 0 1 0 6.6 0a3.3 3.3 0 1 0 -6.6 0M1229.0 601.2a3.3 3.3 0 1 0 6.6 0a3.3 3.3 0 1 0 -6.6 0M866.2 598.0a3.3 3.3 0 1 0 6.6 0a3.3 3.3 0 1 0 -6.6 0M837.1 594.5a3.3 3.3 0 1 0 6.6 0a3.3 3.3 0 1 0 -6.6 0M1147.0 608.1a3.3 3.3 0 1 0 6.6 0a3.3 3.3 0 1 0 -6.6 0M901.2 601.0a3.3 3.3 0 1 0 6.6 0a3.3 3.3 0 1 0 -6.6 0M1065.2 621.5a3.3 3.3 0 1 0 6.6 0a3.3 3.3 0 1 0 -6.6 0M938.6 594.4a3.3 3.3 0 1 0 6.6 0a3.3 3.3 0 1 0 -6.6 0M1136.8 592.0a3.3 3.3 0 1 0 6.6 0a3.3 3.3 0 1 0 -6.6 0M820.7 608.5a3.3 3.3 0 1 0 6.6 0a3.3 3.3 0 1 0 -6.6 0M945.5 603.2a3.3 3.3 0 1 0 6.6 0a3.3 3.3 0 1 0 -6.6 0M1020.3 585.1a3.3 3.3 0 1 0 6.6 0a3.3 3.3 0 1 0 -6.6 0M1261.2 642.8a3.3 3.3 0 1 0 6.6 0a3.3 3.3 0 1 0 -6.6 0M1445.0 623.6a3.3 3.3 0 1 0 6.6 0a3.3 3.3 0 1 0 -6.6 0M1026.1 579.6a3.3 3.3 0 1 0 6.6 0a3.3 3.3 0 1 0 -6.6 0M1169.0 600.0a3.3 3.3 0 1 0 6.6 0a3.3 3.3 0 1 0 -6.6 0M923.1 611.6a3.3 3.3 0 1 0 6.6 0a3.3 3.3 0 1 0 -6.6 0M1326.7 611.9a3.3 3.3 0 1 0 6.6 0a3.3 3.3 0 1 0 -6.6 0M883.3 604.6a3.3 3.3 0 1 0 6.6 0a3.3 3.3 0 1 0 -6.6 0M1121.3 593.8a3.3 3.3 0 1 0 6.6 0a3.3 3.3 0 1 0 -6.6 0M1049.8 595.0a3.3 3.3 0 1 0 6.6 0a3.3 3.3 0 1 0 -6.6 0M913.5 580.6a3.3 3.3 0 1 0 6.6 0a3.3 3.3 0 1 0 -6.6 0M1250.0 598.3a3.3 3.3 0 1 0 6.6 0a3.3 3.3 0 1 0 -6.6 0M848.9 604.2a3.3 3.3 0 1 0 6.6 0a3.3 3.3 0 1 0 -6.6 0M1073.5 597.8a3.3 3.3 0 1 0 6.6 0a3.3 3.3 0 1 0 -6.6 0M896.1 601.3a3.3 3.3 0 1 0 6.6 0a3.3 3.3 0 1 0 -6.6 0M1018.1 598.1a3.3 3.3 0 1 0 6.6 0a3.3 3.3 0 1 0 -6.6 0M1223.2 636.4a3.3 3.3 0 1 0 6.6 0a3.3 3.3 0 1 0 -6.6 0M798.2 595.8a3.3 3.3 0 1 0 6.6 0a3.3 3.3 0 1 0 -6.6 0M784.1 600.8a3.3 3.3 0 1 0 6.6 0a3.3 3.3 0 1 0 -6.6 0M1147.9 632.1a3.3 3.3 0 1 0 6.6 0a3.3 3.3 0 1 0 -6.6 0M1126.5 598.4a3.3 3.3 0 1 0 6.6 0a3.3 3.3 0 1 0 -6.6 0M779.2 605.2a3.3 3.3 0 1 0 6.6 0a3.3 3.3 0 1 0 -6.6 0M1440.7 613.7a3.3 3.3 0 1 0 6.6 0a3.3 3.3 0 1 0 -6.6 0M832.1 600.4a3.3 3.3 0 1 0 6.6 0a3.3 3.3 0 1 0 -6.6 0M1133.1 627.5a3.3 3.3 0 1 0 6.6 0a3.3 3.3 0 1 0 -6.6 0M1184.0 626.0a3.3 3.3 0 1 0 6.6 0a3.3 3.3 0 1 0 -6.6 0M918.8 606.8a3.3 3.3 0 1 0 6.6 0a3.3 3.3 0 1 0 -6.6 0M877.6 594.6a3.3 3.3 0 1 0 6.6 0a3.3 3.3 0 1 0 -6.6 0M1368.7 602.5a3.3 3.3 0 1 0 6.6 0a3.3 3.3 0 1 0 -6.6 0M741.0 605.7a3.3 3.3 0 1 0 6.6 0a3.3 3.3 0 1 0 -6.6 0M746.1 599.4a3.3 3.3 0 1 0 6.6 0a3.3 3.3 0 1 0 -6.6 0M1302.4 642.6a3.3 3.3 0 1 0 6.6 0a3.3 3.3 0 1 0 -6.6 0M969.9 604.4a3.3 3.3 0 1 0 6.6 0a3.3 3.3 0 1 0 -6.6 0M1208.1 624.0a3.3 3.3 0 1 0 6.6 0a3.3 3.3 0 1 0 -6.6 0M1115.4 592.0a3.3 3.3 0 1 0 6.6 0a3.3 3.3 0 1 0 -6.6 0M1381.3 632.2a3.3 3.3 0 1 0 6.6 0a3.3 3.3 0 1 0 -6.6 0M1365.4 609.3a3.3 3.3 0 1 0 6.6 0a3.3 3.3 0 1 0 -6.6 0M991.1 599.2a3.3 3.3 0 1 0 6.6 0a3.3 3.3 0 1 0 -6.6 0M905.5 579.3a3.3 3.3 0 1 0 6.6 0a3.3 3.3 0 1 0 -6.6 0M1111.8 589.8a3.3 3.3 0 1 0 6.6 0a3.3 3.3 0 1 0 -6.6 0M1089.6 611.7a3.3 3.3 0 1 0 6.6 0a3.3 3.3 0 1 0 -6.6 0M1087.6 597.9a3.3 3.3 0 1 0 6.6 0a3.3 3.3 0 1 0 -6.6 0M877.1 587.6a3.3 3.3 0 1 0 6.6 0a3.3 3.3 0 1 0 -6.6 0M1196.6 609.6a3.3 3.3 0 1 0 6.6 0a3.3 3.3 0 1 0 -6.6 0M1319.4 609.7a3.3 3.3 0 1 0 6.6 0a3.3 3.3 0 1 0 -6.6 0M988.9 579.2a3.3 3.3 0 1 0 6.6 0a3.3 3.3 0 1 0 -6.6 0M839.5 601.5a3.3 3.3 0 1 0 6.6 0a3.3 3.3 0 1 0 -6.6 0M982.0 603.6a3.3 3.3 0 1 0 6.6 0a3.3 3.3 0 1 0 -6.6 0M950.2 570.1a3.3 3.3 0 1 0 6.6 0a3.3 3.3 0 1 0 -6.6 0M1197.1 635.4a3.3 3.3 0 1 0 6.6 0a3.3 3.3 0 1 0 -6.6 0M1194.7 626.5a3.3 3.3 0 1 0 6.6 0a3.3 3.3 0 1 0 -6.6 0M608.1 597.4a3.3 3.3 0 1 0 6.6 0a3.3 3.3 0 1 0 -6.6 0M1134.0 600.6a3.3 3.3 0 1 0 6.6 0a3.3 3.3 0 1 0 -6.6 0M863.4 601.7a3.3 3.3 0 1 0 6.6 0a3.3 3.3 0 1 0 -6.6 0M825.2 604.8a3.3 3.3 0 1 0 6.6 0a3.3 3.3 0 1 0 -6.6 0M1131.9 625.4a3.3 3.3 0 1 0 6.6 0a3.3 3.3 0 1 0 -6.6 0M980.0 599.9a3.3 3.3 0 1 0 6.6 0a3.3 3.3 0 1 0 -6.6 0M830.4 600.3a3.3 3.3 0 1 0 6.6 0a3.3 3.3 0 1 0 -6.6 0M1031.1 582.6a3.3 3.3 0 1 0 6.6 0a3.3 3.3 0 1 0 -6.6 0M1105.3 616.8a3.3 3.3 0 1 0 6.6 0a3.3 3.3 0 1 0 -6.6 0M1306.5 610.0a3.3 3.3 0 1 0 6.6 0a3.3 3.3 0 1 0 -6.6 0M1023.4 597.4a3.3 3.3 0 1 0 6.6 0a3.3 3.3 0 1 0 -6.6 0M949.6 610.3a3.3 3.3 0 1 0 6.6 0a3.3 3.3 0 1 0 -6.6 0M1370.3 611.3a3.3 3.3 0 1 0 6.6 0a3.3 3.3 0 1 0 -6.6 0M878.1 595.6a3.3 3.3 0 1 0 6.6 0a3.3 3.3 0 1 0 -6.6 0M927.7 590.3a3.3 3.3 0 1 0 6.6 0a3.3 3.3 0 1 0 -6.6 0M1132.7 602.4a3.3 3.3 0 1 0 6.6 0a3.3 3.3 0 1 0 -6.6 0M926.0 611.0a3.3 3.3 0 1 0 6.6 0a3.3 3.3 0 1 0 -6.6 0M1377.7 605.4a3.3 3.3 0 1 0 6.6 0a3.3 3.3 0 1 0 -6.6 0M729.1 595.3a3.3 3.3 0 1 0 6.6 0a3.3 3.3 0 1 0 -6.6 0M1007.0 606.4a3.3 3.3 0 1 0 6.6 0a3.3 3.3 0 1 0 -6.6 0M949.2 570.7a3.3 3.3 0 1 0 6.6 0a3.3 3.3 0 1 0 -6.6 0M867.1 599.0a3.3 3.3 0 1 0 6.6 0a3.3 3.3 0 1 0 -6.6 0M918.9 583.2a3.3 3.3 0 1 0 6.6 0a3.3 3.3 0 1 0 -6.6 0M1127.5 619.2a3.3 3.3 0 1 0 6.6 0a3.3 3.3 0 1 0 -6.6 0M989.9 601.8a3.3 3.3 0 1 0 6.6 0a3.3 3.3 0 1 0 -6.6 0M605.3 595.3a3.3 3.3 0 1 0 6.6 0a3.3 3.3 0 1 0 -6.6 0M929.0 576.0a3.3 3.3 0 1 0 6.6 0a3.3 3.3 0 1 0 -6.6 0M1159.2 589.9a3.3 3.3 0 1 0 6.6 0a3.3 3.3 0 1 0 -6.6 0M788.5 602.0a3.3 3.3 0 1 0 6.6 0a3.3 3.3 0 1 0 -6.6 0M1047.2 616.2a3.3 3.3 0 1 0 6.6 0a3.3 3.3 0 1 0 -6.6 0M1155.7 598.1a3.3 3.3 0 1 0 6.6 0a3.3 3.3 0 1 0 -6.6 0M986.6 601.4a3.3 3.3 0 1 0 6.6 0a3.3 3.3 0 1 0 -6.6 0M1440.4 625.6a3.3 3.3 0 1 0 6.6 0a3.3 3.3 0 1 0 -6.6 0M1174.4 605.5a3.3 3.3 0 1 0 6.6 0a3.3 3.3 0 1 0 -6.6 0M1297.8 644.9a3.3 3.3 0 1 0 6.6 0a3.3 3.3 0 1 0 -6.6 0M944.9 592.1a3.3 3.3 0 1 0 6.6 0a3.3 3.3 0 1 0 -6.6 0M1113.3 596.1a3.3 3.3 0 1 0 6.6 0a3.3 3.3 0 1 0 -6.6 0M1023.9 596.2a3.3 3.3 0 1 0 6.6 0a3.3 3.3 0 1 0 -6.6 0M847.3 606.1a3.3 3.3 0 1 0 6.6 0a3.3 3.3 0 1 0 -6.6 0M963.6 586.8a3.3 3.3 0 1 0 6.6 0a3.3 3.3 0 1 0 -6.6 0M1097.0 591.4a3.3 3.3 0 1 0 6.6 0a3.3 3.3 0 1 0 -6.6 0M907.1 611.7a3.3 3.3 0 1 0 6.6 0a3.3 3.3 0 1 0 -6.6 0M1009.8 575.5a3.3 3.3 0 1 0 6.6 0a3.3 3.3 0 1 0 -6.6 0M1163.7 591.3a3.3 3.3 0 1 0 6.6 0a3.3 3.3 0 1 0 -6.6 0M808.4 606.6a3.3 3.3 0 1 0 6.6 0a3.3 3.3 0 1 0 -6.6 0M605.1 595.3a3.3 3.3 0 1 0 6.6 0a3.3 3.3 0 1 0 -6.6 0M1387.8 619.8a3.3 3.3 0 1 0 6.6 0a3.3 3.3 0 1 0 -6.6 0M1224.5 613.2a3.3 3.3 0 1 0 6.6 0a3.3 3.3 0 1 0 -6.6 0M913.8 583.2a3.3 3.3 0 1 0 6.6 0a3.3 3.3 0 1 0 -6.6 0M1078.4 599.3a3.3 3.3 0 1 0 6.6 0a3.3 3.3 0 1 0 -6.6 0M961.5 580.3a3.3 3.3 0 1 0 6.6 0a3.3 3.3 0 1 0 -6.6 0M1332.0 602.1a3.3 3.3 0 1 0 6.6 0a3.3 3.3 0 1 0 -6.6 0M906.6 581.1a3.3 3.3 0 1 0 6.6 0a3.3 3.3 0 1 0 -6.6 0M853.3 589.9a3.3 3.3 0 1 0 6.6 0a3.3 3.3 0 1 0 -6.6 0M1140.3 609.7a3.3 3.3 0 1 0 6.6 0a3.3 3.3 0 1 0 -6.6 0M1092.1 588.5a3.3 3.3 0 1 0 6.6 0a3.3 3.3 0 1 0 -6.6 0M953.1 604.0a3.3 3.3 0 1 0 6.6 0a3.3 3.3 0 1 0 -6.6 0M900.4 601.0a3.3 3.3 0 1 0 6.6 0a3.3 3.3 0 1 0 -6.6 0M1305.3 629.9a3.3 3.3 0 1 0 6.6 0a3.3 3.3 0 1 0 -6.6 0M1382.1 607.2a3.3 3.3 0 1 0 6.6 0a3.3 3.3 0 1 0 -6.6 0M1410.0 629.9a3.3 3.3 0 1 0 6.6 0a3.3 3.3 0 1 0 -6.6 0M938.7 593.7a3.3 3.3 0 1 0 6.6 0a3.3 3.3 0 1 0 -6.6 0M952.7 610.9a3.3 3.3 0 1 0 6.6 0a3.3 3.3 0 1 0 -6.6 0M1123.8 614.1a3.3 3.3 0 1 0 6.6 0a3.3 3.3 0 1 0 -6.6 0M784.9 599.9a3.3 3.3 0 1 0 6.6 0a3.3 3.3 0 1 0 -6.6 0M983.7 588.9a3.3 3.3 0 1 0 6.6 0a3.3 3.3 0 1 0 -6.6 0M650.0 600.4a3.3 3.3 0 1 0 6.6 0a3.3 3.3 0 1 0 -6.6 0M924.2 603.2a3.3 3.3 0 1 0 6.6 0a3.3 3.3 0 1 0 -6.6 0M613.7 595.7a3.3 3.3 0 1 0 6.6 0a3.3 3.3 0 1 0 -6.6 0M1005.7 596.8a3.3 3.3 0 1 0 6.6 0a3.3 3.3 0 1 0 -6.6 0M1273.8 622.3a3.3 3.3 0 1 0 6.6 0a3.3 3.3 0 1 0 -6.6 0M993.2 616.9a3.3 3.3 0 1 0 6.6 0a3.3 3.3 0 1 0 -6.6 0M992.1 581.5a3.3 3.3 0 1 0 6.6 0a3.3 3.3 0 1 0 -6.6 0M1023.6 612.7a3.3 3.3 0 1 0 6.6 0a3.3 3.3 0 1 0 -6.6 0M1055.7 582.7a3.3 3.3 0 1 0 6.6 0a3.3 3.3 0 1 0 -6.6 0M655.3 599.4a3.3 3.3 0 1 0 6.6 0a3.3 3.3 0 1 0 -6.6 0M1063.5 612.1a3.3 3.3 0 1 0 6.6 0a3.3 3.3 0 1 0 -6.6 0M906.8 579.9a3.3 3.3 0 1 0 6.6 0a3.3 3.3 0 1 0 -6.6 0M1204.0 611.5a3.3 3.3 0 1 0 6.6 0a3.3 3.3 0 1 0 -6.6 0M1040.1 606.7a3.3 3.3 0 1 0 6.6 0a3.3 3.3 0 1 0 -6.6 0M1292.2 637.6a3.3 3.3 0 1 0 6.6 0a3.3 3.3 0 1 0 -6.6 0M1031.4 619.3a3.3 3.3 0 1 0 6.6 0a3.3 3.3 0 1 0 -6.6 0M1373.7 606.4a3.3 3.3 0 1 0 6.6 0a3.3 3.3 0 1 0 -6.6 0M672.5 603.7a3.3 3.3 0 1 0 6.6 0a3.3 3.3 0 1 0 -6.6 0M1016.8 601.1a3.3 3.3 0 1 0 6.6 0a3.3 3.3 0 1 0 -6.6 0M1031.1 600.7a3.3 3.3 0 1 0 6.6 0a3.3 3.3 0 1 0 -6.6 0M975.5 608.3a3.3 3.3 0 1 0 6.6 0a3.3 3.3 0 1 0 -6.6 0M1342.9 630.4a3.3 3.3 0 1 0 6.6 0a3.3 3.3 0 1 0 -6.6 0M667.5 597.8a3.3 3.3 0 1 0 6.6 0a3.3 3.3 0 1 0 -6.6 0M826.9 607.7a3.3 3.3 0 1 0 6.6 0a3.3 3.3 0 1 0 -6.6 0M1160.7 607.6a3.3 3.3 0 1 0 6.6 0a3.3 3.3 0 1 0 -6.6 0M935.5 608.3a3.3 3.3 0 1 0 6.6 0a3.3 3.3 0 1 0 -6.6 0M810.0 595.5a3.3 3.3 0 1 0 6.6 0a3.3 3.3 0 1 0 -6.6 0M1160.1 622.7a3.3 3.3 0 1 0 6.6 0a3.3 3.3 0 1 0 -6.6 0M989.4 594.8a3.3 3.3 0 1 0 6.6 0a3.3 3.3 0 1 0 -6.6 0M946.2 591.4a3.3 3.3 0 1 0 6.6 0a3.3 3.3 0 1 0 -6.6 0M1324.1 636.3a3.3 3.3 0 1 0 6.6 0a3.3 3.3 0 1 0 -6.6 0M921.3 579.8a3.3 3.3 0 1 0 6.6 0a3.3 3.3 0 1 0 -6.6 0M1441.5 620.0a3.3 3.3 0 1 0 6.6 0a3.3 3.3 0 1 0 -6.6 0M930.1 600.8a3.3 3.3 0 1 0 6.6 0a3.3 3.3 0 1 0 -6.6 0M971.1 611.5a3.3 3.3 0 1 0 6.6 0a3.3 3.3 0 1 0 -6.6 0M1327.7 608.1a3.3 3.3 0 1 0 6.6 0a3.3 3.3 0 1 0 -6.6 0M906.3 600.0a3.3 3.3 0 1 0 6.6 0a3.3 3.3 0 1 0 -6.6 0M988.7 614.7a3.3 3.3 0 1 0 6.6 0a3.3 3.3 0 1 0 -6.6 0M971.6 568.9a3.3 3.3 0 1 0 6.6 0a3.3 3.3 0 1 0 -6.6 0M1070.9 583.9a3.3 3.3 0 1 0 6.6 0a3.3 3.3 0 1 0 -6.6 0M767.6 601.6a3.3 3.3 0 1 0 6.6 0a3.3 3.3 0 1 0 -6.6 0M996.5 577.4a3.3 3.3 0 1 0 6.6 0a3.3 3.3 0 1 0 -6.6 0M1359.3 639.1a3.3 3.3 0 1 0 6.6 0a3.3 3.3 0 1 0 -6.6 0M1332.8 619.3a3.3 3.3 0 1 0 6.6 0a3.3 3.3 0 1 0 -6.6 0M1093.0 589.5a3.3 3.3 0 1 0 6.6 0a3.3 3.3 0 1 0 -6.6 0M959.1 570.6a3.3 3.3 0 1 0 6.6 0a3.3 3.3 0 1 0 -6.6 0M1360.0 612.3a3.3 3.3 0 1 0 6.6 0a3.3 3.3 0 1 0 -6.6 0M1091.2 599.8a3.3 3.3 0 1 0 6.6 0a3.3 3.3 0 1 0 -6.6 0M1308.9 618.0a3.3 3.3 0 1 0 6.6 0a3.3 3.3 0 1 0 -6.6 0M961.8 594.2a3.3 3.3 0 1 0 6.6 0a3.3 3.3 0 1 0 -6.6 0M1191.5 638.1a3.3 3.3 0 1 0 6.6 0a3.3 3.3 0 1 0 -6.6 0M902.9 597.3a3.3 3.3 0 1 0 6.6 0a3.3 3.3 0 1 0 -6.6 0M1080.9 589.7a3.3 3.3 0 1 0 6.6 0a3.3 3.3 0 1 0 -6.6 0M985.4 586.8a3.3 3.3 0 1 0 6.6 0a3.3 3.3 0 1 0 -6.6 0M1120.2 611.2a3.3 3.3 0 1 0 6.6 0a3.3 3.3 0 1 0 -6.6 0M975.4 590.9a3.3 3.3 0 1 0 6.6 0a3.3 3.3 0 1 0 -6.6 0M1227.5 598.4a3.3 3.3 0 1 0 6.6 0a3.3 3.3 0 1 0 -6.6 0M904.9 590.4a3.3 3.3 0 1 0 6.6 0a3.3 3.3 0 1 0 -6.6 0M1036.0 592.5a3.3 3.3 0 1 0 6.6 0a3.3 3.3 0 1 0 -6.6 0M877.1 586.8a3.3 3.3 0 1 0 6.6 0a3.3 3.3 0 1 0 -6.6 0M1094.7 598.9a3.3 3.3 0 1 0 6.6 0a3.3 3.3 0 1 0 -6.6 0M1179.3 591.5a3.3 3.3 0 1 0 6.6 0a3.3 3.3 0 1 0 -6.6 0M946.3 602.4a3.3 3.3 0 1 0 6.6 0a3.3 3.3 0 1 0 -6.6 0M1198.4 594.6a3.3 3.3 0 1 0 6.6 0a3.3 3.3 0 1 0 -6.6 0M1185.2 591.9a3.3 3.3 0 1 0 6.6 0a3.3 3.3 0 1 0 -6.6 0M1431.5 615.7a3.3 3.3 0 1 0 6.6 0a3.3 3.3 0 1 0 -6.6 0M696.2 604.8a3.3 3.3 0 1 0 6.6 0a3.3 3.3 0 1 0 -6.6 0M1279.6 610.3a3.3 3.3 0 1 0 6.6 0a3.3 3.3 0 1 0 -6.6 0M991.2 589.3a3.3 3.3 0 1 0 6.6 0a3.3 3.3 0 1 0 -6.6 0M1025.8 590.7a3.3 3.3 0 1 0 6.6 0a3.3 3.3 0 1 0 -6.6 0M824.9 600.0a3.3 3.3 0 1 0 6.6 0a3.3 3.3 0 1 0 -6.6 0M1232.2 596.3a3.3 3.3 0 1 0 6.6 0a3.3 3.3 0 1 0 -6.6 0M813.0 601.9a3.3 3.3 0 1 0 6.6 0a3.3 3.3 0 1 0 -6.6 0M909.7 583.1a3.3 3.3 0 1 0 6.6 0a3.3 3.3 0 1 0 -6.6 0M1338.8 607.0a3.3 3.3 0 1 0 6.6 0a3.3 3.3 0 1 0 -6.6 0M1297.6 604.3a3.3 3.3 0 1 0 6.6 0a3.3 3.3 0 1 0 -6.6 0M1328.6 645.1a3.3 3.3 0 1 0 6.6 0a3.3 3.3 0 1 0 -6.6 0M816.0 599.0a3.3 3.3 0 1 0 6.6 0a3.3 3.3 0 1 0 -6.6 0M803.3 608.7a3.3 3.3 0 1 0 6.6 0a3.3 3.3 0 1 0 -6.6 0M1234.8 596.2a3.3 3.3 0 1 0 6.6 0a3.3 3.3 0 1 0 -6.6 0M1136.7 594.4a3.3 3.3 0 1 0 6.6 0a3.3 3.3 0 1 0 -6.6 0M1159.0 625.3a3.3 3.3 0 1 0 6.6 0a3.3 3.3 0 1 0 -6.6 0M913.1 577.5a3.3 3.3 0 1 0 6.6 0a3.3 3.3 0 1 0 -6.6 0M1094.3 612.4a3.3 3.3 0 1 0 6.6 0a3.3 3.3 0 1 0 -6.6 0M902.0 604.6a3.3 3.3 0 1 0 6.6 0a3.3 3.3 0 1 0 -6.6 0M717.1 597.0a3.3 3.3 0 1 0 6.6 0a3.3 3.3 0 1 0 -6.6 0M686.6 601.8a3.3 3.3 0 1 0 6.6 0a3.3 3.3 0 1 0 -6.6 0M960.1 604.3a3.3 3.3 0 1 0 6.6 0a3.3 3.3 0 1 0 -6.6 0M968.0 578.8a3.3 3.3 0 1 0 6.6 0a3.3 3.3 0 1 0 -6.6 0M1104.0 607.5a3.3 3.3 0 1 0 6.6 0a3.3 3.3 0 1 0 -6.6 0M1207.9 597.3a3.3 3.3 0 1 0 6.6 0a3.3 3.3 0 1 0 -6.6 0M1388.0 605.3a3.3 3.3 0 1 0 6.6 0a3.3 3.3 0 1 0 -6.6 0M762.0 601.7a3.3 3.3 0 1 0 6.6 0a3.3 3.3 0 1 0 -6.6 0M1376.7 623.3a3.3 3.3 0 1 0 6.6 0a3.3 3.3 0 1 0 -6.6 0M1405.0 618.7a3.3 3.3 0 1 0 6.6 0a3.3 3.3 0 1 0 -6.6 0M950.2 576.0a3.3 3.3 0 1 0 6.6 0a3.3 3.3 0 1 0 -6.6 0M881.7 586.9a3.3 3.3 0 1 0 6.6 0a3.3 3.3 0 1 0 -6.6 0M1194.4 622.0a3.3 3.3 0 1 0 6.6 0a3.3 3.3 0 1 0 -6.6 0M685.2 601.3a3.3 3.3 0 1 0 6.6 0a3.3 3.3 0 1 0 -6.6 0M1394.0 606.4a3.3 3.3 0 1 0 6.6 0a3.3 3.3 0 1 0 -6.6 0M1058.1 613.7a3.3 3.3 0 1 0 6.6 0a3.3 3.3 0 1 0 -6.6 0M1098.4 605.9a3.3 3.3 0 1 0 6.6 0a3.3 3.3 0 1 0 -6.6 0M1150.9 611.9a3.3 3.3 0 1 0 6.6 0a3.3 3.3 0 1 0 -6.6 0M1248.8 625.1a3.3 3.3 0 1 0 6.6 0a3.3 3.3 0 1 0 -6.6 0M1091.2 586.4a3.3 3.3 0 1 0 6.6 0a3.3 3.3 0 1 0 -6.6 0M1334.7 625.6a3.3 3.3 0 1 0 6.6 0a3.3 3.3 0 1 0 -6.6 0M1047.0 586.1a3.3 3.3 0 1 0 6.6 0a3.3 3.3 0 1 0 -6.6 0M1203.5 627.8a3.3 3.3 0 1 0 6.6 0a3.3 3.3 0 1 0 -6.6 0M976.7 589.1a3.3 3.3 0 1 0 6.6 0a3.3 3.3 0 1 0 -6.6 0M1224.2 623.4a3.3 3.3 0 1 0 6.6 0a3.3 3.3 0 1 0 -6.6 0M907.6 589.5a3.3 3.3 0 1 0 6.6 0a3.3 3.3 0 1 0 -6.6 0M1310.9 604.7a3.3 3.3 0 1 0 6.6 0a3.3 3.3 0 1 0 -6.6 0M1300.6 607.4a3.3 3.3 0 1 0 6.6 0a3.3 3.3 0 1 0 -6.6 0M972.8 591.4a3.3 3.3 0 1 0 6.6 0a3.3 3.3 0 1 0 -6.6 0M1313.3 636.2a3.3 3.3 0 1 0 6.6 0a3.3 3.3 0 1 0 -6.6 0M876.5 597.3a3.3 3.3 0 1 0 6.6 0a3.3 3.3 0 1 0 -6.6 0M1401.7 616.0a3.3 3.3 0 1 0 6.6 0a3.3 3.3 0 1 0 -6.6 0M1021.0 591.7a3.3 3.3 0 1 0 6.6 0a3.3 3.3 0 1 0 -6.6 0M1240.6 634.1a3.3 3.3 0 1 0 6.6 0a3.3 3.3 0 1 0 -6.6 0M820.3 594.2a3.3 3.3 0 1 0 6.6 0a3.3 3.3 0 1 0 -6.6 0M1253.7 626.5a3.3 3.3 0 1 0 6.6 0a3.3 3.3 0 1 0 -6.6 0M1046.6 583.7a3.3 3.3 0 1 0 6.6 0a3.3 3.3 0 1 0 -6.6 0M982.1 572.7a3.3 3.3 0 1 0 6.6 0a3.3 3.3 0 1 0 -6.6 0M1042.2 605.6a3.3 3.3 0 1 0 6.6 0a3.3 3.3 0 1 0 -6.6 0M965.1 576.8a3.3 3.3 0 1 0 6.6 0a3.3 3.3 0 1 0 -6.6 0M1429.1 624.0a3.3 3.3 0 1 0 6.6 0a3.3 3.3 0 1 0 -6.6 0M1122.2 604.6a3.3 3.3 0 1 0 6.6 0a3.3 3.3 0 1 0 -6.6 0M1401.3 614.9a3.3 3.3 0 1 0 6.6 0a3.3 3.3 0 1 0 -6.6 0M1032.6 584.8a3.3 3.3 0 1 0 6.6 0a3.3 3.3 0 1 0 -6.6 0M982.6 617.8a3.3 3.3 0 1 0 6.6 0a3.3 3.3 0 1 0 -6.6 0M1293.9 637.2a3.3 3.3 0 1 0 6.6 0a3.3 3.3 0 1 0 -6.6 0M806.1 594.7a3.3 3.3 0 1 0 6.6 0a3.3 3.3 0 1 0 -6.6 0M737.4 608.6a3.3 3.3 0 1 0 6.6 0a3.3 3.3 0 1 0 -6.6 0M743.1 605.3a3.3 3.3 0 1 0 6.6 0a3.3 3.3 0 1 0 -6.6 0M779.6 605.6a3.3 3.3 0 1 0 6.6 0a3.3 3.3 0 1 0 -6.6 0M972.3 584.1a3.3 3.3 0 1 0 6.6 0a3.3 3.3 0 1 0 -6.6 0M1188.8 598.2a3.3 3.3 0 1 0 6.6 0a3.3 3.3 0 1 0 -6.6 0M738.5 601.7a3.3 3.3 0 1 0 6.6 0a3.3 3.3 0 1 0 -6.6 0M1164.1 600.8a3.3 3.3 0 1 0 6.6 0a3.3 3.3 0 1 0 -6.6 0M1092.5 617.4a3.3 3.3 0 1 0 6.6 0a3.3 3.3 0 1 0 -6.6 0M1338.7 612.2a3.3 3.3 0 1 0 6.6 0a3.3 3.3 0 1 0 -6.6 0M893.1 594.6a3.3 3.3 0 1 0 6.6 0a3.3 3.3 0 1 0 -6.6 0M621.3 594.1a3.3 3.3 0 1 0 6.6 0a3.3 3.3 0 1 0 -6.6 0M1162.1 595.5a3.3 3.3 0 1 0 6.6 0a3.3 3.3 0 1 0 -6.6 0M1308.3 627.2a3.3 3.3 0 1 0 6.6 0a3.3 3.3 0 1 0 -6.6 0M1338.0 622.5a3.3 3.3 0 1 0 6.6 0a3.3 3.3 0 1 0 -6.6 0M869.4 587.1a3.3 3.3 0 1 0 6.6 0a3.3 3.3 0 1 0 -6.6 0M1182.2 594.2a3.3 3.3 0 1 0 6.6 0a3.3 3.3 0 1 0 -6.6 0M1306.4 612.0a3.3 3.3 0 1 0 6.6 0a3.3 3.3 0 1 0 -6.6 0M983.5 606.8a3.3 3.3 0 1 0 6.6 0a3.3 3.3 0 1 0 -6.6 0M1048.9 613.6a3.3 3.3 0 1 0 6.6 0a3.3 3.3 0 1 0 -6.6 0M1270.6 609.4a3.3 3.3 0 1 0 6.6 0a3.3 3.3 0 1 0 -6.6 0M1103.8 618.4a3.3 3.3 0 1 0 6.6 0a3.3 3.3 0 1 0 -6.6 0M956.3 586.7a3.3 3.3 0 1 0 6.6 0a3.3 3.3 0 1 0 -6.6 0M1284.9 603.4a3.3 3.3 0 1 0 6.6 0a3.3 3.3 0 1 0 -6.6 0M1377.7 618.0a3.3 3.3 0 1 0 6.6 0a3.3 3.3 0 1 0 -6.6 0M1346.5 601.8a3.3 3.3 0 1 0 6.6 0a3.3 3.3 0 1 0 -6.6 0M789.2 606.1a3.3 3.3 0 1 0 6.6 0a3.3 3.3 0 1 0 -6.6 0M1145.6 588.5a3.3 3.3 0 1 0 6.6 0a3.3 3.3 0 1 0 -6.6 0M1307.1 601.4a3.3 3.3 0 1 0 6.6 0a3.3 3.3 0 1 0 -6.6 0M1465.0 611.1a3.3 3.3 0 1 0 6.6 0a3.3 3.3 0 1 0 -6.6 0M1017.4 584.6a3.3 3.3 0 1 0 6.6 0a3.3 3.3 0 1 0 -6.6 0M989.5 574.8a3.3 3.3 0 1 0 6.6 0a3.3 3.3 0 1 0 -6.6 0M1366.5 612.6a3.3 3.3 0 1 0 6.6 0a3.3 3.3 0 1 0 -6.6 0M1255.9 623.0a3.3 3.3 0 1 0 6.6 0a3.3 3.3 0 1 0 -6.6 0M1039.3 611.9a3.3 3.3 0 1 0 6.6 0a3.3 3.3 0 1 0 -6.6 0M1316.1 648.3a3.3 3.3 0 1 0 6.6 0a3.3 3.3 0 1 0 -6.6 0M1266.8 611.1a3.3 3.3 0 1 0 6.6 0a3.3 3.3 0 1 0 -6.6 0M1398.2 635.4a3.3 3.3 0 1 0 6.6 0a3.3 3.3 0 1 0 -6.6 0M845.5 599.0a3.3 3.3 0 1 0 6.6 0a3.3 3.3 0 1 0 -6.6 0M1412.7 622.2a3.3 3.3 0 1 0 6.6 0a3.3 3.3 0 1 0 -6.6 0M799.1 596.9a3.3 3.3 0 1 0 6.6 0a3.3 3.3 0 1 0 -6.6 0M1029.5 584.5a3.3 3.3 0 1 0 6.6 0a3.3 3.3 0 1 0 -6.6 0M1037.0 582.8a3.3 3.3 0 1 0 6.6 0a3.3 3.3 0 1 0 -6.6 0M1242.7 602.4a3.3 3.3 0 1 0 6.6 0a3.3 3.3 0 1 0 -6.6 0M1107.3 621.2a3.3 3.3 0 1 0 6.6 0a3.3 3.3 0 1 0 -6.6 0M1049.4 611.0a3.3 3.3 0 1 0 6.6 0a3.3 3.3 0 1 0 -6.6 0M1131.2 611.5a3.3 3.3 0 1 0 6.6 0a3.3 3.3 0 1 0 -6.6 0M686.9 602.1a3.3 3.3 0 1 0 6.6 0a3.3 3.3 0 1 0 -6.6 0M1316.0 648.1a3.3 3.3 0 1 0 6.6 0a3.3 3.3 0 1 0 -6.6 0M941.3 578.3a3.3 3.3 0 1 0 6.6 0a3.3 3.3 0 1 0 -6.6 0M1123.4 593.1a3.3 3.3 0 1 0 6.6 0a3.3 3.3 0 1 0 -6.6 0M1237.0 597.6a3.3 3.3 0 1 0 6.6 0a3.3 3.3 0 1 0 -6.6 0M1090.9 597.8a3.3 3.3 0 1 0 6.6 0a3.3 3.3 0 1 0 -6.6 0M975.3 576.2a3.3 3.3 0 1 0 6.6 0a3.3 3.3 0 1 0 -6.6 0M1060.6 602.7a3.3 3.3 0 1 0 6.6 0a3.3 3.3 0 1 0 -6.6 0M1227.5 623.5a3.3 3.3 0 1 0 6.6 0a3.3 3.3 0 1 0 -6.6 0M955.2 600.2a3.3 3.3 0 1 0 6.6 0a3.3 3.3 0 1 0 -6.6 0M1314.5 609.1a3.3 3.3 0 1 0 6.6 0a3.3 3.3 0 1 0 -6.6 0M944.3 582.1a3.3 3.3 0 1 0 6.6 0a3.3 3.3 0 1 0 -6.6 0M1262.0 635.4a3.3 3.3 0 1 0 6.6 0a3.3 3.3 0 1 0 -6.6 0M1318.3 646.2a3.3 3.3 0 1 0 6.6 0a3.3 3.3 0 1 0 -6.6 0M1262.3 604.7a3.3 3.3 0 1 0 6.6 0a3.3 3.3 0 1 0 -6.6 0M1217.2 637.9a3.3 3.3 0 1 0 6.6 0a3.3 3.3 0 1 0 -6.6 0M1360.1 631.0a3.3 3.3 0 1 0 6.6 0a3.3 3.3 0 1 0 -6.6 0M905.1 603.3a3.3 3.3 0 1 0 6.6 0a3.3 3.3 0 1 0 -6.6 0M922.4 592.8a3.3 3.3 0 1 0 6.6 0a3.3 3.3 0 1 0 -6.6 0M819.2 598.2a3.3 3.3 0 1 0 6.6 0a3.3 3.3 0 1 0 -6.6 0M1105.5 619.3a3.3 3.3 0 1 0 6.6 0a3.3 3.3 0 1 0 -6.6 0M1043.9 602.7a3.3 3.3 0 1 0 6.6 0a3.3 3.3 0 1 0 -6.6 0M1131.1 606.5a3.3 3.3 0 1 0 6.6 0a3.3 3.3 0 1 0 -6.6 0M661.4 603.4a3.3 3.3 0 1 0 6.6 0a3.3 3.3 0 1 0 -6.6 0M1109.7 612.5a3.3 3.3 0 1 0 6.6 0a3.3 3.3 0 1 0 -6.6 0M742.5 605.3a3.3 3.3 0 1 0 6.6 0a3.3 3.3 0 1 0 -6.6 0M1089.7 603.1a3.3 3.3 0 1 0 6.6 0a3.3 3.3 0 1 0 -6.6 0M1300.2 603.5a3.3 3.3 0 1 0 6.6 0a3.3 3.3 0 1 0 -6.6 0M874.3 586.9a3.3 3.3 0 1 0 6.6 0a3.3 3.3 0 1 0 -6.6 0M783.7 602.8a3.3 3.3 0 1 0 6.6 0a3.3 3.3 0 1 0 -6.6 0M878.1 591.5a3.3 3.3 0 1 0 6.6 0a3.3 3.3 0 1 0 -6.6 0M938.1 588.7a3.3 3.3 0 1 0 6.6 0a3.3 3.3 0 1 0 -6.6 0M1112.9 612.1a3.3 3.3 0 1 0 6.6 0a3.3 3.3 0 1 0 -6.6 0M884.2 609.5a3.3 3.3 0 1 0 6.6 0a3.3 3.3 0 1 0 -6.6 0M1137.7 614.1a3.3 3.3 0 1 0 6.6 0a3.3 3.3 0 1 0 -6.6 0M1093.7 597.4a3.3 3.3 0 1 0 6.6 0a3.3 3.3 0 1 0 -6.6 0M1053.4 602.0a3.3 3.3 0 1 0 6.6 0a3.3 3.3 0 1 0 -6.6 0M937.9 592.8a3.3 3.3 0 1 0 6.6 0a3.3 3.3 0 1 0 -6.6 0M1261.5 614.6a3.3 3.3 0 1 0 6.6 0a3.3 3.3 0 1 0 -6.6 0M958.6 597.5a3.3 3.3 0 1 0 6.6 0a3.3 3.3 0 1 0 -6.6 0M1151.9 604.6a3.3 3.3 0 1 0 6.6 0a3.3 3.3 0 1 0 -6.6 0M1272.6 625.3a3.3 3.3 0 1 0 6.6 0a3.3 3.3 0 1 0 -6.6 0M1060.7 616.3a3.3 3.3 0 1 0 6.6 0a3.3 3.3 0 1 0 -6.6 0M1013.1 613.6a3.3 3.3 0 1 0 6.6 0a3.3 3.3 0 1 0 -6.6 0M891.9 590.8a3.3 3.3 0 1 0 6.6 0a3.3 3.3 0 1 0 -6.6 0M1118.1 606.8a3.3 3.3 0 1 0 6.6 0a3.3 3.3 0 1 0 -6.6 0M844.2 607.8a3.3 3.3 0 1 0 6.6 0a3.3 3.3 0 1 0 -6.6 0M1150.2 591.2a3.3 3.3 0 1 0 6.6 0a3.3 3.3 0 1 0 -6.6 0M682.8 596.0a3.3 3.3 0 1 0 6.6 0a3.3 3.3 0 1 0 -6.6 0M954.3 600.1a3.3 3.3 0 1 0 6.6 0a3.3 3.3 0 1 0 -6.6 0M991.8 584.2a3.3 3.3 0 1 0 6.6 0a3.3 3.3 0 1 0 -6.6 0M1147.8 589.8a3.3 3.3 0 1 0 6.6 0a3.3 3.3 0 1 0 -6.6 0M1173.9 627.3a3.3 3.3 0 1 0 6.6 0a3.3 3.3 0 1 0 -6.6 0M1109.2 594.5a3.3 3.3 0 1 0 6.6 0a3.3 3.3 0 1 0 -6.6 0M985.7 574.5a3.3 3.3 0 1 0 6.6 0a3.3 3.3 0 1 0 -6.6 0M615.7 590.3a3.3 3.3 0 1 0 6.6 0a3.3 3.3 0 1 0 -6.6 0M674.2 602.5a3.3 3.3 0 1 0 6.6 0a3.3 3.3 0 1 0 -6.6 0M1307.5 613.1a3.3 3.3 0 1 0 6.6 0a3.3 3.3 0 1 0 -6.6 0M1214.8 600.6a3.3 3.3 0 1 0 6.6 0a3.3 3.3 0 1 0 -6.6 0M1060.0 598.2a3.3 3.3 0 1 0 6.6 0a3.3 3.3 0 1 0 -6.6 0M1076.0 584.1a3.3 3.3 0 1 0 6.6 0a3.3 3.3 0 1 0 -6.6 0M1239.1 638.6a3.3 3.3 0 1 0 6.6 0a3.3 3.3 0 1 0 -6.6 0M1237.8 599.2a3.3 3.3 0 1 0 6.6 0a3.3 3.3 0 1 0 -6.6 0M932.1 610.3a3.3 3.3 0 1 0 6.6 0a3.3 3.3 0 1 0 -6.6 0M1172.4 629.7a3.3 3.3 0 1 0 6.6 0a3.3 3.3 0 1 0 -6.6 0M828.3 598.2a3.3 3.3 0 1 0 6.6 0a3.3 3.3 0 1 0 -6.6 0M1290.8 600.6a3.3 3.3 0 1 0 6.6 0a3.3 3.3 0 1 0 -6.6 0M1080.1 595.7a3.3 3.3 0 1 0 6.6 0a3.3 3.3 0 1 0 -6.6 0M1291.9 610.3a3.3 3.3 0 1 0 6.6 0a3.3 3.3 0 1 0 -6.6 0M1040.8 587.4a3.3 3.3 0 1 0 6.6 0a3.3 3.3 0 1 0 -6.6 0M1258.1 609.5a3.3 3.3 0 1 0 6.6 0a3.3 3.3 0 1 0 -6.6 0M983.4 600.4a3.3 3.3 0 1 0 6.6 0a3.3 3.3 0 1 0 -6.6 0M943.1 573.9a3.3 3.3 0 1 0 6.6 0a3.3 3.3 0 1 0 -6.6 0M883.3 604.2a3.3 3.3 0 1 0 6.6 0a3.3 3.3 0 1 0 -6.6 0M864.9 609.5a3.3 3.3 0 1 0 6.6 0a3.3 3.3 0 1 0 -6.6 0M926.6 599.5a3.3 3.3 0 1 0 6.6 0a3.3 3.3 0 1 0 -6.6 0M950.2 604.0a3.3 3.3 0 1 0 6.6 0a3.3 3.3 0 1 0 -6.6 0M1112.4 606.7a3.3 3.3 0 1 0 6.6 0a3.3 3.3 0 1 0 -6.6 0M1176.3 623.8a3.3 3.3 0 1 0 6.6 0a3.3 3.3 0 1 0 -6.6 0M1217.6 619.8a3.3 3.3 0 1 0 6.6 0a3.3 3.3 0 1 0 -6.6 0M1044.7 607.8a3.3 3.3 0 1 0 6.6 0a3.3 3.3 0 1 0 -6.6 0M921.1 582.6a3.3 3.3 0 1 0 6.6 0a3.3 3.3 0 1 0 -6.6 0M996.6 593.3a3.3 3.3 0 1 0 6.6 0a3.3 3.3 0 1 0 -6.6 0M731.5 603.8a3.3 3.3 0 1 0 6.6 0a3.3 3.3 0 1 0 -6.6 0M1352.5 622.7a3.3 3.3 0 1 0 6.6 0a3.3 3.3 0 1 0 -6.6 0M1249.3 638.9a3.3 3.3 0 1 0 6.6 0a3.3 3.3 0 1 0 -6.6 0M980.2 581.2a3.3 3.3 0 1 0 6.6 0a3.3 3.3 0 1 0 -6.6 0M1146.5 604.9a3.3 3.3 0 1 0 6.6 0a3.3 3.3 0 1 0 -6.6 0M863.6 587.4a3.3 3.3 0 1 0 6.6 0a3.3 3.3 0 1 0 -6.6 0M1218.2 609.2a3.3 3.3 0 1 0 6.6 0a3.3 3.3 0 1 0 -6.6 0M662.8 603.6a3.3 3.3 0 1 0 6.6 0a3.3 3.3 0 1 0 -6.6 0M880.8 599.6a3.3 3.3 0 1 0 6.6 0a3.3 3.3 0 1 0 -6.6 0M962.0 612.1a3.3 3.3 0 1 0 6.6 0a3.3 3.3 0 1 0 -6.6 0M1284.5 600.8a3.3 3.3 0 1 0 6.6 0a3.3 3.3 0 1 0 -6.6 0M801.7 604.1a3.3 3.3 0 1 0 6.6 0a3.3 3.3 0 1 0 -6.6 0M1197.1 598.0a3.3 3.3 0 1 0 6.6 0a3.3 3.3 0 1 0 -6.6 0M1031.5 614.9a3.3 3.3 0 1 0 6.6 0a3.3 3.3 0 1 0 -6.6 0M1374.8 640.8a3.3 3.3 0 1 0 6.6 0a3.3 3.3 0 1 0 -6.6 0M1381.2 608.4a3.3 3.3 0 1 0 6.6 0a3.3 3.3 0 1 0 -6.6 0M1141.3 594.4a3.3 3.3 0 1 0 6.6 0a3.3 3.3 0 1 0 -6.6 0M1006.6 593.4a3.3 3.3 0 1 0 6.6 0a3.3 3.3 0 1 0 -6.6 0M1272.8 604.5a3.3 3.3 0 1 0 6.6 0a3.3 3.3 0 1 0 -6.6 0M848.6 591.3a3.3 3.3 0 1 0 6.6 0a3.3 3.3 0 1 0 -6.6 0M788.0 598.8a3.3 3.3 0 1 0 6.6 0a3.3 3.3 0 1 0 -6.6 0M705.4 597.8a3.3 3.3 0 1 0 6.6 0a3.3 3.3 0 1 0 -6.6 0M1025.1 578.8a3.3 3.3 0 1 0 6.6 0a3.3 3.3 0 1 0 -6.6 0M1028.2 609.7a3.3 3.3 0 1 0 6.6 0a3.3 3.3 0 1 0 -6.6 0M1185.4 618.9a3.3 3.3 0 1 0 6.6 0a3.3 3.3 0 1 0 -6.6 0M715.0 602.2a3.3 3.3 0 1 0 6.6 0a3.3 3.3 0 1 0 -6.6 0M884.0 587.0a3.3 3.3 0 1 0 6.6 0a3.3 3.3 0 1 0 -6.6 0M911.5 589.2a3.3 3.3 0 1 0 6.6 0a3.3 3.3 0 1 0 -6.6 0M750.2 598.0a3.3 3.3 0 1 0 6.6 0a3.3 3.3 0 1 0 -6.6 0M888.7 599.7a3.3 3.3 0 1 0 6.6 0a3.3 3.3 0 1 0 -6.6 0M1070.5 597.5a3.3 3.3 0 1 0 6.6 0a3.3 3.3 0 1 0 -6.6 0M668.3 596.4a3.3 3.3 0 1 0 6.6 0a3.3 3.3 0 1 0 -6.6 0M1186.6 623.9a3.3 3.3 0 1 0 6.6 0a3.3 3.3 0 1 0 -6.6 0M839.5 606.5a3.3 3.3 0 1 0 6.6 0a3.3 3.3 0 1 0 -6.6 0M958.3 607.4a3.3 3.3 0 1 0 6.6 0a3.3 3.3 0 1 0 -6.6 0M946.6 583.7a3.3 3.3 0 1 0 6.6 0a3.3 3.3 0 1 0 -6.6 0M1024.0 589.3a3.3 3.3 0 1 0 6.6 0a3.3 3.3 0 1 0 -6.6 0M953.4 586.7a3.3 3.3 0 1 0 6.6 0a3.3 3.3 0 1 0 -6.6 0M1365.4 613.7a3.3 3.3 0 1 0 6.6 0a3.3 3.3 0 1 0 -6.6 0M1097.9 610.4a3.3 3.3 0 1 0 6.6 0a3.3 3.3 0 1 0 -6.6 0M1037.2 613.5a3.3 3.3 0 1 0 6.6 0a3.3 3.3 0 1 0 -6.6 0M1059.9 620.3a3.3 3.3 0 1 0 6.6 0a3.3 3.3 0 1 0 -6.6 0M1105.4 611.0a3.3 3.3 0 1 0 6.6 0a3.3 3.3 0 1 0 -6.6 0M884.7 599.5a3.3 3.3 0 1 0 6.6 0a3.3 3.3 0 1 0 -6.6 0M1152.1 629.0a3.3 3.3 0 1 0 6.6 0a3.3 3.3 0 1 0 -6.6 0M1063.2 591.8a3.3 3.3 0 1 0 6.6 0a3.3 3.3 0 1 0 -6.6 0M963.3 567.9a3.3 3.3 0 1 0 6.6 0a3.3 3.3 0 1 0 -6.6 0M943.5 571.0a3.3 3.3 0 1 0 6.6 0a3.3 3.3 0 1 0 -6.6 0M1005.9 598.7a3.3 3.3 0 1 0 6.6 0a3.3 3.3 0 1 0 -6.6 0M1158.3 600.1a3.3 3.3 0 1 0 6.6 0a3.3 3.3 0 1 0 -6.6 0M642.5 596.2a3.3 3.3 0 1 0 6.6 0a3.3 3.3 0 1 0 -6.6 0M1184.8 593.7a3.3 3.3 0 1 0 6.6 0a3.3 3.3 0 1 0 -6.6 0M1191.7 594.7a3.3 3.3 0 1 0 6.6 0a3.3 3.3 0 1 0 -6.6 0M1255.9 638.8a3.3 3.3 0 1 0 6.6 0a3.3 3.3 0 1 0 -6.6 0M870.9 607.9a3.3 3.3 0 1 0 6.6 0a3.3 3.3 0 1 0 -6.6 0M789.5 606.6a3.3 3.3 0 1 0 6.6 0a3.3 3.3 0 1 0 -6.6 0M1446.6 618.6a3.3 3.3 0 1 0 6.6 0a3.3 3.3 0 1 0 -6.6 0M1398.6 607.4a3.3 3.3 0 1 0 6.6 0a3.3 3.3 0 1 0 -6.6 0M1361.5 634.0a3.3 3.3 0 1 0 6.6 0a3.3 3.3 0 1 0 -6.6 0M906.1 583.5a3.3 3.3 0 1 0 6.6 0a3.3 3.3 0 1 0 -6.6 0M1329.7 607.0a3.3 3.3 0 1 0 6.6 0a3.3 3.3 0 1 0 -6.6 0M1138.1 610.1a3.3 3.3 0 1 0 6.6 0a3.3 3.3 0 1 0 -6.6 0M1096.0 605.0a3.3 3.3 0 1 0 6.6 0a3.3 3.3 0 1 0 -6.6 0M1099.9 596.0a3.3 3.3 0 1 0 6.6 0a3.3 3.3 0 1 0 -6.6 0M993.6 617.9a3.3 3.3 0 1 0 6.6 0a3.3 3.3 0 1 0 -6.6 0M1062.6 599.0a3.3 3.3 0 1 0 6.6 0a3.3 3.3 0 1 0 -6.6 0M1021.4 583.2a3.3 3.3 0 1 0 6.6 0a3.3 3.3 0 1 0 -6.6 0M1163.8 600.5a3.3 3.3 0 1 0 6.6 0a3.3 3.3 0 1 0 -6.6 0M1303.3 614.1a3.3 3.3 0 1 0 6.6 0a3.3 3.3 0 1 0 -6.6 0M1025.4 620.8a3.3 3.3 0 1 0 6.6 0a3.3 3.3 0 1 0 -6.6 0M912.4 609.3a3.3 3.3 0 1 0 6.6 0a3.3 3.3 0 1 0 -6.6 0M741.0 608.1a3.3 3.3 0 1 0 6.6 0a3.3 3.3 0 1 0 -6.6 0M1104.8 601.6a3.3 3.3 0 1 0 6.6 0a3.3 3.3 0 1 0 -6.6 0M732.2 594.9a3.3 3.3 0 1 0 6.6 0a3.3 3.3 0 1 0 -6.6 0M637.5 583.0a4.2 4.2 0 1 0 8.4 0a4.2 4.2 0 1 0 -8.4 0M691.6 578.0a4.2 4.2 0 1 0 8.4 0a4.2 4.2 0 1 0 -8.4 0M721.8 574.0a4.2 4.2 0 1 0 8.4 0a4.2 4.2 0 1 0 -8.4 0M779.8 575.0a4.2 4.2 0 1 0 8.4 0a4.2 4.2 0 1 0 -8.4 0M826.8 575.0a4.2 4.2 0 1 0 8.4 0a4.2 4.2 0 1 0 -8.4 0M887.5 574.0a4.2 4.2 0 1 0 8.4 0a4.2 4.2 0 1 0 -8.4 0M912.5 576.0a4.2 4.2 0 1 0 8.4 0a4.2 4.2 0 1 0 -8.4 0M928.8 576.0a4.2 4.2 0 1 0 8.4 0a4.2 4.2 0 1 0 -8.4 0M960.4 569.6a4.2 4.2 0 1 0 8.4 0a4.2 4.2 0 1 0 -8.4 0" fill="#1c1cff"/><path d="M675.2 599.3L669.7 598.7M669.7 598.7L672.9 598.4M608.6 595.3L608.4 595.3M625.9 597.0L613.7 596.6M655.0 599.9L656.3 600.2M656.3 600.2L653.3 600.4M769.1 608.3L754.0 606.9M746.4 605.3L745.8 605.3M746.4 605.3L751.9 604.8M751.9 604.8L751.1 603.7M705.3 598.4L712.7 598.1M708.7 597.8L707.7 597.7M757.3 596.2L774.9 597.5M790.7 600.1L788.2 599.9M805.0 604.1L819.8 605.6M819.8 605.6L822.6 606.5M812.3 607.2L811.7 606.6M833.7 600.3L835.4 600.4M828.6 600.6L816.0 599.8M785.0 597.3L779.4 596.6M847.4 601.4L861.1 601.4M890.3 601.9L908.4 603.3M870.4 599.0L866.6 599.5M848.8 599.0L842.1 599.3M811.4 597.1L802.4 596.9M869.5 598.0L877.5 598.0M879.8 597.3L889.4 597.9M886.6 604.2L905.3 604.6M992.7 594.8L998.6 594.9M1019.1 596.0L1025.0 596.4M1046.1 597.4L1060.1 597.9M1098.6 601.1L1108.1 601.6M1090.9 597.9L1094.2 597.8M1094.2 597.8L1110.2 598.8M1153.3 601.2L1141.7 600.9M1141.7 600.9L1144.5 601.5M1152.9 598.7L1164.4 599.4M1147.4 602.2L1153.5 603.2M1155.2 604.6L1149.8 604.9M1118.1 596.1L1120.6 595.8M931.0 590.3L914.8 589.2M881.6 587.4L880.4 587.6M880.4 587.6L876.1 587.3M953.3 586.7L947.8 586.5M942.0 586.5L925.1 585.9M936.0 597.0L959.4 598.4M996.3 600.7L1008.0 601.2M1035.6 602.0L1045.4 601.9M1062.1 601.7L1060.7 601.3M989.5 601.3L989.9 601.4M984.0 601.1L969.5 600.0M1134.1 606.3L1138.7 606.5M1175.0 607.6L1177.0 607.6M972.5 597.5L978.0 596.9M1107.3 607.5L1099.5 608.0M1086.9 610.7L1079.6 610.2M1135.7 614.0L1140.0 614.2M1048.0 607.8L1043.4 606.7M1045.5 605.6L1034.9 604.4M1077.1 613.2L1074.5 613.1M1052.7 611.0L1049.8 611.2M1034.8 614.9L1050.5 616.2M1095.8 617.4L1107.1 618.4M1108.8 619.3L1095.1 618.8M1095.0 619.7L1083.3 619.3M1095.0 619.7L1110.6 621.2M956.6 611.7L965.3 612.1M935.4 610.3L931.0 610.7M931.0 610.7L929.3 611.0M952.9 610.3L936.0 609.3M1010.3 606.4L1009.9 607.2M998.6 607.2L986.8 606.8M953.5 604.0L934.6 603.4M1043.1 618.4L1038.0 618.4M1038.0 618.4L1041.1 619.3M1041.1 619.3L1063.2 620.3M1096.9 622.8L1109.6 622.8M1154.2 611.9L1145.1 611.0M1136.7 609.3L1143.6 609.7M1110.2 625.5L1125.6 626.5M1136.4 627.5L1152.4 628.7M1206.3 627.9L1206.8 627.8M1163.4 622.7L1149.9 621.8M1216.6 622.9L1227.5 623.4M1211.4 624.0L1232.0 625.2M1276.6 622.3L1277.1 622.3M1331.6 628.4L1341.5 629.5M1346.2 630.4L1363.4 631.0M1250.0 620.9L1241.1 620.6M1226.5 620.7L1224.5 620.9M1316.3 626.9L1329.0 626.9M1351.7 626.7L1338.0 625.6M1270.2 635.2L1297.2 637.2M985.3 603.6L992.7 603.8M1311.6 627.2L1306.4 628.1M936.0 609.3L938.8 608.3M1182.8 609.5L1202.7 611.3M1202.7 611.3L1207.3 611.5M1245.4 616.0L1222.8 614.7M1358.1 624.1L1353.9 623.7M1362.1 624.0L1362.1 623.9M1140.0 594.4L1145.9 594.8M1153.5 591.2L1167.0 591.3M1160.3 596.3L1178.8 596.8M1200.4 598.0L1201.9 598.4M1168.5 592.5L1184.0 593.0M1184.0 593.0L1188.1 593.7M1195.0 594.7L1200.2 595.5M1265.6 604.3L1265.5 604.5M1255.1 605.1L1259.5 605.8M1299.0 606.0L1304.3 605.9M1272.8 606.9L1286.6 607.7M1241.2 605.0L1237.8 605.0M1288.2 603.4L1287.8 602.9M1320.2 603.4L1342.6 604.8M1344.3 604.6L1345.9 604.3M1355.8 604.7L1363.1 605.4M1349.1 606.7L1342.1 607.0M1397.3 606.4L1397.8 606.2M1405.1 607.1L1422.2 607.6M1330.0 611.9L1347.3 613.1M1305.7 611.3L1309.7 612.0M1365.1 613.9L1368.7 613.7M1285.8 610.8L1277.2 610.6M1260.7 608.9L1254.9 608.3M1095.4 588.5L1091.8 588.4M1095.4 588.5L1096.8 588.5M1065.9 586.1L1059.7 586.3M1306.1 609.6L1322.7 609.7M1377.0 611.2L1399.5 612.7M1434.8 615.7L1424.7 615.4M1436.9 616.4L1434.1 616.4M1067.3 591.9L1058.9 592.2M1058.9 592.2L1035.7 591.2M1050.3 586.1L1035.9 584.8M1288.9 599.5L1288.8 599.9M1354.9 602.4L1335.3 602.1M1434.2 616.8L1449.9 618.6M1449.9 618.6L1456.1 619.4M913.0 583.1L917.1 583.2M922.2 583.2L924.4 582.6M910.1 579.9L908.8 579.3M908.8 579.3L924.6 579.8M924.6 579.8L914.4 578.8M1108.6 616.8L1119.5 616.3M1033.3 621.4L1029.4 621.2M1376.3 619.0L1391.1 619.8M1071.5 603.0L1090.9 603.3M1173.9 611.4L1185.7 612.0M807.5 592.4L812.7 591.8M812.7 591.8L815.9 591.7M1280.4 616.8L1307.2 618.5M1264.8 614.6L1264.6 614.2M1264.6 614.2L1268.9 614.1M1188.3 603.6L1198.4 604.5M964.8 580.3L977.9 580.7M977.9 580.7L983.5 581.2M1049.9 583.7L1054.8 583.7M992.2 579.2L981.2 578.9M996.3 578.4L1005.7 578.5M932.3 576.0L927.7 575.5M934.4 576.7L926.2 576.7M999.8 577.4L991.7 577.1M961.7 576.1L968.4 576.8M982.4 575.4L967.3 574.2M1239.9 638.0L1242.4 638.6M1331.9 645.1L1305.7 642.6M1344.0 636.6L1338.3 635.1M1326.8 634.2L1319.2 633.9M1357.4 636.1L1351.3 635.5M1321.0 631.3L1308.6 629.9M1345.7 631.9L1374.3 633.5M1374.3 633.5L1401.5 635.4M1330.5 640.8L1363.7 643.7M1454.2 612.4L1456.1 613.1M1456.6 613.9L1444.0 613.7M1451.7 614.7L1469.3 616.1M1254.5 618.5L1263.4 618.5M1029.4 579.6L1054.8 581.1M1321.6 646.2L1319.3 648.1M1319.4 648.3L1289.5 646.5M1289.5 646.5L1276.7 646.7M1276.7 646.7L1266.3 647.6M962.4 570.6L970.7 570.6M1288.2 634.7L1273.9 633.6M861.1 601.4L860.4 600.2M1147.2 607.1L1138.7 606.5M998.6 594.9L980.8 593.7M1099.5 608.0L1108.9 609.4M1340.1 609.7L1329.6 608.6M1177.0 619.2L1161.6 617.8M1280.7 608.1L1272.8 606.9M1107.9 613.0L1092.9 611.7M691.2 602.7L690.2 602.1M1029.4 595.5L1025.2 594.9M685.0 601.9L690.3 602.1M1003.9 609.2L1017.3 609.9M1403.6 612.9L1415.8 613.6M1240.9 609.4L1270.1 611.1M906.7 587.5L887.3 587.0M1169.4 601.7L1161.0 600.7M990.5 578.6L1010.7 579.9M702.7 602.8L690.2 602.1M806.4 604.0L800.9 604.3M1198.1 597.0L1210.8 598.5M1152.3 618.6L1183.4 620.6M1049.8 611.2L1031.5 609.7M1029.4 595.5L1009.4 594.4M1210.2 630.4L1181.6 627.9M1251.0 600.4L1241.1 599.2M1033.3 621.4L1045.8 621.8M1338.3 635.1L1323.6 633.1M907.3 590.4L893.0 589.1M1408.1 634.1L1405.5 633.0M1164.4 599.4L1144.3 598.6M1144.5 601.5L1137.3 600.6M929.3 611.0L935.4 610.3M952.5 570.7L956.0 571.2M608.4 595.3L617.0 595.7M923.2 580.6L910.1 579.9M966.3 600.4L969.5 600.0M1243.4 597.0L1238.1 596.2M1018.3 615.9L992.0 614.7M1077.1 589.0L1096.3 589.5M953.5 576.0L968.4 576.8M1410.1 615.5L1405.0 616.0M1252.1 625.1L1257.0 626.5M1026.4 584.3L1035.9 584.8M805.3 594.4L815.4 595.6M1137.1 590.7L1153.5 591.2M945.2 592.4L925.3 591.4M1023.8 605.9L1048.0 607.8M746.4 605.3L734.8 603.8M978.2 580.6L983.5 581.2M1140.0 614.2L1157.2 614.5M1159.0 598.1L1177.6 599.5M1368.0 607.0L1384.5 608.4M1271.0 604.9L1276.1 604.5M1156.1 632.6L1141.4 631.9M1019.3 612.9L1040.5 613.5M1058.9 592.2L1066.5 591.8M1143.6 609.7L1141.4 610.1M1116.6 596.1L1103.2 596.0" stroke="#40e0ff" stroke-width="2.2" fill="none"/><path d="M672.9 598.4L670.8 597.8M728.8 608.1L721.9 607.9M760.8 608.5L769.1 608.3M757.2 606.6L751.4 605.7M1154.3 603.8L1155.2 604.6M1026.8 592.5L1009.5 591.7M972.1 587.3L981.6 587.4M989.9 601.4L993.2 601.8M1101.2 610.4L1108.7 611.0M1204.3 628.5L1206.3 627.9M1186.6 617.6L1178.9 616.9M1177.0 619.2L1188.7 618.9M1401.9 607.4L1405.1 607.1M1270.1 611.1L1287.5 612.3M1096.8 588.5L1092.8 587.6M1096.3 589.5L1086.1 589.7M1042.2 587.5L1029.2 587.1M1029.2 587.1L1034.1 587.8M1030.7 588.7L1035.6 589.1M1119.5 616.3L1120.9 616.2M1029.4 621.2L1028.7 620.8M1143.6 609.7L1173.9 611.4M1003.2 582.5L997.3 582.6M926.2 576.7L923.3 577.0M962.1 573.5L969.5 573.7M1327.4 636.3L1344.0 636.6M1357.4 636.1L1365.5 636.8M1344.0 636.6L1362.6 639.1M1364.6 645.0L1360.8 645.0M1289.5 646.5L1319.3 648.1M927.7 580.0L908.8 579.3M1319.6 623.9L1288.2 622.4M1334.8 612.8L1330.0 611.9M1384.6 632.2L1405.5 633.0M787.4 600.8L791.8 602.0M1059.0 582.7L1074.2 583.9M1182.8 609.5L1207.3 611.5M1306.1 609.6L1304.8 609.9M690.3 602.1L688.5 601.3M745.1 605.6L746.4 605.3" stroke="#eeee00" stroke-width="2.2" fill="none"/><path d="M672.9 598.4L682.4 599.1M645.8 596.2L634.8 595.9M634.8 595.9L626.8 595.4M626.8 595.4L623.8 595.8M623.8 595.8L617.0 595.7M617.0 595.7L608.6 595.3M617.0 595.7L621.2 596.4M688.5 601.3L689.9 601.8M690.3 602.1L691.2 602.7M691.2 602.7L677.2 602.1M677.5 602.5L674.3 602.3M641.3 598.2L658.6 599.4M632.6 594.1L639.5 594.2M639.5 594.2L644.1 594.3M664.7 603.4L666.1 603.6M710.8 606.0L732.7 607.1M744.3 608.1L740.7 608.6M744.3 608.1L760.8 608.5M769.1 608.3L777.1 609.0M751.4 605.7L746.4 605.3M751.1 603.7L750.6 602.9M689.2 596.7L700.1 598.0M700.1 598.0L705.3 598.4M711.0 596.9L701.5 595.7M720.4 597.0L741.8 598.0M741.8 598.0L739.5 597.2M742.4 597.3L753.5 598.0M742.4 597.3L738.5 596.2M739.1 594.6L748.5 594.7M774.9 597.5L785.1 598.4M803.5 600.5L790.7 600.1M787.4 600.8L784.2 601.4M791.8 602.0L799.6 603.1M799.6 603.1L787.0 602.8M767.0 601.9L768.1 602.4M824.0 608.5L814.9 608.2M822.8 602.0L829.4 602.4M828.6 600.6L828.2 600.0M842.8 601.5L856.2 602.3M861.1 601.4L866.7 601.7M890.3 601.9L883.9 601.0M866.6 599.5L848.8 599.0M842.1 599.3L831.6 598.2M816.3 601.9L812.5 602.7M888.0 599.5L869.5 598.0M839.1 603.9L852.2 604.2M813.3 595.5L809.4 594.7M840.4 594.5L832.1 593.6M848.4 593.3L852.4 592.6M850.1 591.9L872.2 593.0M914.4 595.0L910.1 594.0M929.0 594.4L941.9 594.4M941.9 594.4L942.0 593.7M957.7 594.2L965.1 594.2M965.1 594.2L966.0 593.9M1025.0 596.4L1024.3 596.5M1025.0 596.4L1027.2 596.2M1060.1 597.9L1063.7 598.1M1063.7 598.1L1063.3 598.2M1071.1 598.4L1065.8 597.8M1070.9 598.0L1075.1 598.0M1076.8 597.8L1073.8 597.5M1071.6 598.5L1081.7 599.3M1081.7 599.3L1094.5 599.8M1064.2 596.8L1054.0 595.8M1009.9 593.4L1005.7 592.9M1098.0 598.9L1090.9 597.9M1094.0 597.7L1097.0 597.4M1102.2 596.9L1109.1 597.0M1167.4 601.6L1161.0 600.7M1161.0 600.7L1167.4 600.8M1167.4 600.8L1167.1 600.5M1173.0 598.6L1158.8 597.8M1136.0 602.4L1124.7 601.8M1156.6 604.7L1177.7 605.5M1013.2 597.2L1009.0 596.8M1009.0 596.8L1002.5 596.7M1021.4 598.1L1038.2 598.7M1054.0 595.8L1053.1 595.0M1059.1 594.5L1055.4 593.8M1053.1 595.0L1038.3 594.4M1055.4 593.8L1041.3 593.3M1041.3 593.3L1026.8 592.5M1024.3 591.7L1013.3 591.2M1013.3 591.2L1011.1 590.8M1103.2 596.0L1096.5 595.7M1116.6 596.1L1118.1 596.1M949.5 591.4L931.0 590.3M912.9 590.1L926.5 590.7M999.9 593.3L979.9 592.0M979.9 592.0L976.1 591.4M978.0 591.4L978.7 590.9M880.4 587.6L881.6 587.7M876.1 587.3L872.7 587.1M877.6 586.9L880.4 586.8M880.4 586.8L885.0 586.9M880.4 586.8L872.6 585.9M887.6 586.1L887.7 585.6M887.7 585.6L896.7 585.9M975.4 589.0L980.0 589.1M987.0 588.9L994.5 589.3M972.1 587.3L966.9 586.8M956.7 586.7L953.3 586.7M963.6 598.0L961.9 597.5M983.3 599.9L986.7 600.4M1008.0 601.2L1018.0 601.1M1020.1 601.1L1025.7 601.4M1035.6 602.0L1047.2 602.7M1056.7 602.0L1062.1 601.7M1047.2 602.7L1064.3 604.0M1072.0 604.2L1073.9 604.7M1045.4 601.9L1034.4 600.7M986.7 600.4L989.5 601.3M957.6 600.1L958.5 600.2M1091.6 604.4L1099.3 605.0M1115.7 606.7L1121.4 606.8M1141.7 607.0L1147.2 607.1M1141.7 607.0L1150.3 608.1M1115.7 606.7L1110.5 607.1M1110.5 607.1L1107.3 607.5M1147.2 607.1L1164.0 607.6M1177.0 607.6L1183.3 608.0M1009.2 598.7L1008.0 599.4M1008.0 599.4L994.4 599.2M1110.8 610.0L1123.5 611.2M1107.9 613.0L1097.6 612.4M1092.9 611.7L1093.1 611.6M1119.7 614.3L1122.7 614.4M1122.7 614.4L1127.1 614.1M1080.8 609.4L1065.1 608.7M1065.1 608.7L1048.0 607.8M1097.6 612.4L1077.1 611.4M1034.9 604.4L1021.8 603.5M1077.1 611.4L1075.7 612.4M1075.7 612.4L1066.8 612.1M1083.8 613.2L1077.1 613.2M1052.7 611.0L1031.5 609.7M1017.3 609.9L1008.4 609.1M1042.6 611.9L1058.9 613.4M1052.2 613.6L1040.5 613.5M1011.1 612.9L1016.4 613.6M1079.8 615.3L1076.9 615.5M1107.1 618.4L1108.8 619.3M1108.6 616.8L1127.8 618.6M1127.8 618.6L1147.5 619.7M1147.5 619.7L1150.7 620.3M974.4 611.5L971.6 611.2M971.6 611.2L952.9 610.3M952.6 610.9L945.7 610.7M952.6 610.9L956.6 611.7M929.3 611.0L926.4 611.6M993.7 606.0L992.2 606.1M1010.3 606.4L1033.0 608.1M973.2 604.4L963.4 604.3M956.4 604.0L948.8 603.2M1017.5 616.1L1036.4 617.5M1044.8 618.1L1043.1 618.4M1034.7 619.3L1018.2 618.2M985.9 617.8L989.5 618.4M955.6 614.3L970.2 614.5M1063.2 620.3L1068.5 621.5M1107.6 623.7L1096.9 622.8M955.6 614.3L941.2 614.4M1097.0 623.6L1110.2 625.5M1125.6 626.5L1136.4 627.5M1181.6 627.9L1177.2 627.3M1206.8 627.8L1190.7 626.4M1190.7 626.4L1187.3 626.0M1190.6 625.2L1179.6 623.8M1179.6 623.8L1189.9 623.9M1187.4 623.5L1202.1 623.9M1227.5 623.4L1230.8 623.5M1191.2 621.8L1183.4 620.6M1232.0 625.2L1240.3 625.5M1275.9 625.3L1298.1 626.3M1300.1 626.2L1292.1 625.2M1399.5 633.2L1408.1 634.1M1399.5 633.2L1405.5 633.0M1270.9 622.4L1250.0 620.9M1241.1 620.6L1220.9 619.8M1337.3 627.1L1353.5 628.0M1344.7 626.7L1351.7 626.7M1229.9 629.0L1242.6 629.5M1216.7 619.3L1192.6 618.0M1192.6 618.0L1186.6 617.6M1183.4 620.6L1177.0 619.2M1202.3 622.0L1209.1 621.4M1375.4 627.5L1356.7 625.8M1240.6 626.8L1246.8 627.5M1256.9 634.4L1265.3 635.4M1403.9 631.6L1404.3 631.1M1210.2 630.4L1234.7 631.1M982.0 604.4L985.3 603.6M985.3 603.6L966.2 602.1M861.6 588.8L863.8 589.4M863.8 589.4L870.1 589.7M938.8 608.3L944.4 607.8M936.2 606.8L935.3 606.5M935.3 606.5L932.3 606.0M911.0 597.4L895.1 595.8M880.9 594.6L877.8 594.5M895.1 595.8L881.4 595.6M1235.8 614.2L1247.5 615.2M1324.1 621.4L1318.5 621.6M1112.5 594.5L1107.6 593.4M1152.5 594.8L1165.4 595.5M1116.9 592.2L1100.3 591.4M1118.7 592.0L1117.3 591.2M1123.4 591.4L1140.1 592.0M1140.1 592.0L1141.8 591.6M1137.0 591.3L1139.3 591.0M1139.3 591.0L1137.1 590.7M1137.1 590.7L1150.4 591.0M1150.3 590.1L1151.1 589.8M1151.1 589.8L1160.1 590.2M1162.5 589.9L1156.6 589.1M1201.9 598.4L1204.6 598.7M1200.4 598.0L1210.8 598.5M1210.8 598.5L1221.5 598.8M1228.1 599.5L1244.4 600.0M1230.8 598.4L1229.7 597.7M1230.8 598.4L1211.2 597.3M1253.3 598.3L1254.1 598.7M1240.3 597.6L1232.6 596.7M1235.5 596.3L1238.1 596.2M1232.3 601.2L1218.1 600.6M1265.5 604.5L1271.0 604.9M1265.6 604.7L1256.0 604.5M1256.0 604.5L1265.4 605.3M1291.3 605.5L1299.0 606.0M1304.3 605.9L1298.8 605.3M1303.5 603.5L1313.1 603.5M1313.1 603.5L1320.2 603.4M1355.8 604.7L1352.3 604.1M1383.9 608.1L1384.5 608.4M1397.8 606.2L1402.1 606.0M1400.3 605.4L1382.7 604.1M1369.2 603.4L1354.9 602.4M1382.7 604.1L1387.3 603.8M1280.7 608.1L1306.1 609.6M1306.1 609.6L1309.8 610.0M1326.3 611.4L1342.0 612.2M1334.8 612.8L1317.8 611.7M1273.9 609.4L1260.7 608.9M1260.7 608.9L1261.4 609.5M1321.6 612.9L1310.8 613.1M1263.7 611.0L1240.9 609.4M1248.1 596.4L1229.3 595.0M1287.5 612.3L1306.6 614.1M1306.6 614.1L1307.4 614.2M1104.1 589.0L1096.8 588.7M1071.9 586.5L1065.9 586.1M1058.7 588.0L1053.8 587.5M1021.5 587.5L1030.7 588.7M1030.9 589.4L1027.3 589.3M1317.8 609.1L1333.1 609.3M1333.1 609.3L1340.1 609.7M1333.1 609.3L1329.6 608.6M1353.5 608.8L1358.7 609.7M1353.5 608.8L1368.7 609.3M1415.8 613.6L1434.4 615.0M1434.4 615.0L1434.8 615.7M1424.7 615.4L1436.9 616.4M1434.1 616.4L1434.2 616.8M1434.2 616.8L1410.1 615.5M1329.6 608.6L1303.9 607.4M1041.1 590.1L1064.2 591.1M1066.5 591.8L1067.3 591.9M1422.2 607.6L1438.2 609.2M1035.9 584.8L1032.8 584.5M1023.6 585.1L1029.0 585.6M1009.1 584.9L995.1 584.2M1273.4 598.0L1273.6 598.4M1288.8 599.9L1294.4 600.5M1288.9 599.5L1295.7 599.4M909.9 581.1L926.3 581.4M916.8 580.6L910.1 579.9M914.4 578.8L916.2 578.8M936.9 579.7L937.4 579.8M1053.1 623.2L1036.7 621.9M1028.7 620.8L1033.4 620.9M1033.4 620.9L1045.8 621.8M1338.4 617.6L1369.3 619.5M1420.3 621.9L1432.5 622.8M1436.5 623.2L1448.3 623.6M1439.4 624.3L1432.4 624.0M1432.4 624.0L1443.7 625.6M1090.9 603.3L1093.0 603.1M1363.3 612.3L1369.8 612.6M1067.3 591.9L1086.9 593.5M1218.1 600.6L1212.4 601.3M1240.9 611.2L1236.3 611.7M1003.9 609.2L978.8 608.3M978.8 608.3L975.8 608.0M1409.7 626.0L1434.8 628.5M616.8 591.8L617.5 590.7M971.4 583.3L947.6 582.1M1161.0 612.2L1181.0 614.3M1375.4 627.5L1413.3 629.9M1280.4 616.8L1278.6 616.5M1307.2 618.5L1312.2 618.0M987.3 581.2L995.4 581.5M995.4 581.5L1009.9 582.4M1009.9 582.4L1024.7 583.2M1040.3 582.8L1039.1 582.6M1040.3 582.8L1034.4 582.6M1073.0 584.4L1078.3 584.3M1078.3 584.3L1079.3 584.1M1079.3 584.1L1091.6 584.8M1082.3 585.8L1094.5 586.4M1013.8 581.8L1012.5 581.6M1023.8 580.0L1025.2 579.9M1025.2 579.9L1029.4 579.6M1029.4 579.6L1028.4 578.8M991.7 577.1L978.6 576.2M978.6 576.2L966.8 575.5M1001.8 576.2L1010.2 576.7M1029.8 577.7L1024.8 577.1M1029.8 577.7L1034.9 578.4M949.5 575.0L961.7 576.1M969.5 573.7L971.2 574.0M989.0 574.5L992.8 574.8M962.7 574.1L945.0 573.6M941.3 572.9L939.7 572.7M997.3 582.6L974.8 581.8M1205.1 633.8L1226.5 636.4M1200.4 635.4L1183.5 634.5M1226.5 636.4L1239.9 638.0M1242.4 638.6L1232.6 637.9M1242.4 638.6L1237.3 638.9M1237.3 638.9L1220.5 637.9M1156.1 632.6L1151.2 632.1M1151.2 632.1L1141.4 631.9M1254.0 641.4L1265.7 642.1M1265.7 642.1L1264.5 642.8M1342.0 646.7L1344.8 646.0M1338.3 635.1L1326.8 634.2M856.6 589.9L881.4 591.5M967.7 589.4L941.8 587.8M941.8 587.8L941.4 588.7M940.9 589.1L949.0 589.6M1346.2 630.4L1345.7 631.9M1345.7 631.9L1333.0 631.8M1333.0 631.8L1321.0 631.3M1364.8 634.0L1395.3 636.3M1456.1 613.1L1456.6 613.9M1469.3 616.1L1476.6 616.0M1215.8 617.8L1218.9 617.6M1007.1 574.7L983.7 573.0M985.4 572.7L986.9 572.4M986.9 572.4L962.8 571.3M962.8 571.3L956.0 571.2M956.0 571.2L946.8 571.0M970.7 570.6L964.6 569.3M961.4 569.0L968.7 569.0M974.9 568.9L966.6 567.9M675.2 599.3L672.9 598.4M1117.3 591.2L1140.1 592.0M1190.7 626.4L1198.0 626.5M975.1 590.3L967.7 589.4M632.6 594.1L644.1 594.3M751.9 604.8L745.8 605.3M609.6 589.9L619.0 590.3M754.0 606.9L744.3 605.7M1265.5 607.9L1254.9 608.3M951.1 591.0L931.0 590.3M1137.1 590.7L1137.0 591.3M932.9 598.6L957.6 600.1M1298.3 604.5L1288.2 603.4M896.7 585.9L887.6 586.1M1306.1 620.1L1318.5 621.6M982.7 608.9L961.6 607.4M1083.3 619.3L1110.6 621.2M971.2 574.0L962.1 573.5M959.3 612.6L965.3 612.1M1029.6 593.5L1051.6 594.4M1055.4 593.8L1039.3 592.5M656.3 600.2L658.6 599.4M1029.0 585.6L1020.7 584.6M914.4 578.8L916.8 578.8M1103.4 595.7L1096.5 595.7M1454.2 612.4L1473.6 612.9M1098.3 616.6L1076.9 615.5M1096.9 622.8L1115.9 624.2M968.2 605.0L956.4 604.0M988.2 583.8L972.4 583.0M972.1 587.3L959.6 586.7M1123.4 591.4L1118.7 592.0M942.0 595.8L929.0 594.4M1333.1 609.3L1317.5 609.3M862.3 595.3L840.4 594.5M1282.9 611.3L1285.8 610.8M1138.6 608.8L1110.5 607.1M1110.2 598.8L1090.9 597.9M971.8 590.1L978.7 590.9M741.8 598.0L753.5 598.0M991.7 577.1L1006.9 577.9M1115.9 624.2L1109.6 622.8M1210.8 598.5L1201.9 598.4M1295.7 599.4L1273.4 598.0M1110.5 607.1L1101.7 605.9M1369.1 614.6L1347.3 613.1M1451.7 614.7L1476.6 616.0M1150.7 620.3L1130.8 619.2M1232.0 625.2L1257.0 626.5M675.2 599.3L676.8 600.2M1294.4 600.5L1296.6 600.2M1136.4 627.5L1155.4 629.0M944.4 607.8L922.1 606.8M765.2 599.5L749.4 599.4M968.2 605.0L973.2 604.4M1232.6 596.7L1235.5 596.3M982.7 608.9L975.8 608.0M1034.4 582.6L1039.1 582.6M677.2 602.1L674.3 602.3M989.5 601.3L993.2 601.8M1169.5 599.3L1159.0 598.1M872.6 585.9L885.0 586.9M811.7 606.6L830.2 607.7M1371.8 607.0L1385.4 607.2M987.0 588.9L996.9 589.2M675.8 603.7L666.1 603.6M1152.5 594.8L1145.9 594.8M1336.1 619.3L1312.2 618.0M1167.0 591.3L1188.5 591.9M1216.6 622.9L1230.8 623.5M971.2 574.0L962.9 573.8M835.4 600.4L819.3 599.0M1109.1 597.0L1096.5 595.7M1029.8 577.7L1025.7 577.1M1216.6 622.9L1197.7 622.0M887.7 585.6L883.7 586.0M1347.3 613.1L1342.0 612.2M1300.1 626.2L1311.6 627.2M1238.1 596.2L1229.3 595.0M961.3 599.9L958.5 600.2M1020.1 601.1L1008.0 601.2M1064.2 591.1L1067.3 591.9M877.6 586.9L886.6 587.4M770.9 601.6L787.0 602.8M1024.3 609.7L1033.2 611.1M657.6 597.0L641.9 595.5M1317.8 611.7L1295.2 610.3M968.2 605.0L953.5 604.0M991.0 617.4L971.4 615.7M1145.9 594.8L1144.6 594.4M1045.8 621.8L1053.1 623.2M1420.3 621.9L1436.5 623.2M887.3 587.0L886.6 587.4M1012.7 586.9L991.5 585.9M884.1 599.6L892.0 599.7M978.8 608.3L961.6 607.4M985.9 617.8L996.9 617.9M1040.3 582.8L1054.8 583.7M750.8 596.4L735.5 594.9" stroke="#2020ff" stroke-width="2.2" fill="none"/><path d="M670.8 597.8L657.6 597.0M675.2 599.3L676.7 600.1M676.8 600.2L688.5 601.3M702.7 602.8L705.9 603.7M705.9 603.7L720.4 604.5M699.5 604.8L694.9 605.1M694.9 605.1L710.8 606.0M617.6 593.4L624.6 594.1M648.9 594.8L663.2 595.6M669.2 596.0L671.6 596.4M750.6 602.9L741.8 601.7M734.8 603.8L718.3 602.2M686.1 596.0L689.2 596.7M712.7 598.1L708.7 597.8M738.5 596.2L732.4 595.3M732.4 595.3L735.5 594.9M750.8 596.4L759.5 597.4M750.8 596.4L757.3 596.2M791.3 598.8L801.1 599.6M799.6 603.1L806.4 604.0M830.2 607.7L832.7 608.6M824.0 608.5L812.3 607.2M792.5 606.1L792.8 606.6M822.8 602.0L825.3 601.3M875.5 603.3L886.6 604.2M814.9 608.2L806.6 608.7M894.9 605.9L892.3 606.3M892.3 606.3L881.1 605.7M774.9 597.5L785.0 597.3M881.2 601.8L890.3 601.9M883.9 601.0L899.4 601.3M899.4 601.3L905.0 601.2M905.0 601.2L903.7 601.0M903.7 601.0L904.5 601.0M892.0 599.7L888.0 599.5M848.8 599.0L860.4 600.2M811.4 597.1L801.5 595.8M847.5 607.8L868.2 609.5M868.2 609.5L889.3 611.0M815.4 595.6L813.3 595.5M839.6 595.4L849.5 595.2M849.5 595.2L840.4 594.5M852.4 592.6L852.6 592.4M910.1 594.0L924.7 594.5M924.7 594.5L942.0 595.8M942.0 595.8L946.1 595.9M942.0 593.7L925.7 592.8M942.0 593.7L957.7 594.2M1071.6 598.5L1071.1 598.4M1064.2 596.8L1050.9 596.4M1032.3 595.4L1025.2 594.9M1065.9 599.0L1077.6 599.9M1025.2 594.9L1009.4 594.4M999.9 593.3L1009.9 593.4M1076.8 597.8L1098.0 598.9M1123.6 597.4L1129.8 598.4M1153.3 601.2L1167.4 601.6M1164.4 599.4L1165.8 599.7M1153.5 603.2L1136.0 602.4M1137.3 600.6L1123.7 600.3M1196.9 606.4L1205.8 606.5M1013.2 597.2L1021.4 598.1M1021.4 598.1L1029.3 598.9M1053.1 595.0L1051.6 594.4M1038.3 594.4L1029.6 593.5M1024.3 591.7L1039.3 592.5M945.2 592.4L948.2 592.1M945.2 592.4L941.2 592.8M1103.4 595.7L1116.6 596.1M955.8 591.4L951.1 591.0M914.8 589.2L904.3 588.7M914.8 589.2L910.9 589.5M910.9 589.5L912.9 590.1M881.9 589.5L872.8 588.6M886.6 587.4L881.6 587.4M885.0 586.9L887.3 587.0M887.3 587.0L897.8 587.2M883.7 586.0L887.6 586.1M980.0 589.1L980.0 588.8M989.5 588.5L973.9 587.5M959.4 598.4L963.6 598.0M963.6 598.0L979.7 599.1M979.7 599.1L983.3 599.9M1018.0 601.1L1020.1 601.1M1025.7 601.4L1035.6 602.0M1045.4 601.9L1056.7 602.0M961.9 597.5L972.5 597.5M969.5 600.0L961.3 599.9M1071.5 603.0L1091.6 604.4M1164.0 607.6L1175.0 607.6M961.3 599.9L942.1 598.5M978.0 596.9L996.3 598.1M1073.9 604.7L1074.9 605.7M1099.5 608.0L1092.7 608.5M1092.7 608.5L1108.9 609.4M1108.9 609.4L1110.8 610.0M1123.5 611.2L1134.5 611.5M1110.8 610.0L1097.3 609.9M1097.3 609.9L1101.2 610.4M1116.2 612.1L1119.3 612.3M1113.0 612.5L1107.9 613.0M1093.1 611.6L1086.9 610.7M1097.3 609.9L1080.8 609.4M1075.7 612.4L1083.8 613.2M1066.8 612.1L1052.7 611.0M1008.4 609.1L1003.9 609.2M1017.3 609.9L1033.2 611.1M1033.2 611.1L1042.6 611.9M1061.4 613.7L1052.2 613.6M1040.5 613.5L1026.9 612.7M1032.1 614.4L1034.8 614.9M1050.5 616.2L1064.0 616.3M1011.1 612.9L990.8 611.7M1076.9 615.5L1086.4 616.9M945.7 610.7L935.4 610.3M1026.9 612.7L1004.5 611.0M973.2 604.4L982.0 604.4M948.8 603.2L949.6 602.4M1041.1 619.3L1034.7 619.3M991.0 617.4L973.4 616.2M971.4 615.7L955.6 614.3M1017.5 616.1L992.0 614.7M949.6 602.4L933.4 600.8M1082.1 623.4L1097.0 623.6M1146.2 610.5L1141.4 610.1M1175.7 629.7L1177.2 629.4M1177.2 628.6L1172.8 627.8M1187.3 626.0L1198.0 626.5M1163.4 622.7L1162.4 623.2M1145.4 622.1L1143.2 622.7M1202.1 623.9L1211.4 624.0M1192.7 622.6L1191.2 621.8M1240.3 625.5L1257.0 626.5M1230.8 623.5L1252.1 625.1M1260.8 625.0L1275.9 625.3M1298.1 626.3L1300.1 626.2M1280.8 624.5L1277.6 623.7M1270.1 623.0L1277.0 623.0M1363.4 631.0L1384.6 632.2M1384.6 632.2L1399.5 633.2M1220.9 619.8L1226.5 620.7M1177.0 619.2L1167.7 618.8M1167.7 618.8L1161.6 617.8M1167.7 618.8L1152.3 618.6M1363.4 631.0L1366.7 630.1M1206.0 631.6L1219.4 631.5M1249.2 633.8L1256.9 634.4M1265.3 635.4L1270.2 635.2M1300.5 637.3L1308.3 637.6M1177.2 627.3L1162.3 625.3M1414.5 632.4L1403.9 631.6M941.2 614.4L942.3 615.7M944.4 607.8L936.2 606.8M938.8 608.3L922.1 606.8M895.1 595.8L880.9 594.6M1207.3 611.5L1227.8 613.2M1347.4 624.0L1358.1 624.1M1318.5 621.6L1314.4 621.6M1107.6 593.4L1124.6 593.8M1144.6 594.4L1126.7 593.1M1116.9 592.2L1118.7 592.0M1167.0 591.3L1150.3 590.1M1160.1 590.2L1162.5 589.9M1178.8 596.8L1200.4 598.0M1192.1 598.2L1196.6 598.8M1244.4 600.0L1251.0 600.4M1241.1 599.2L1230.8 598.4M1231.0 599.9L1241.9 601.2M1265.6 604.3L1276.1 604.5M1276.1 604.5L1291.3 605.5M1298.8 605.3L1298.3 604.5M1287.8 602.9L1303.5 603.5M1345.9 604.3L1355.8 604.7M1352.3 604.1L1339.1 603.3M1363.1 605.4L1377.0 606.4M1377.0 606.4L1385.4 607.2M1380.1 607.1L1371.8 607.0M1362.6 607.6L1349.1 606.7M1349.1 606.7L1340.2 606.0M1342.1 607.0L1333.0 607.0M1405.1 607.1L1397.3 606.4M1402.1 606.0L1391.3 605.3M1309.8 610.0L1304.8 609.9M1309.7 612.0L1321.6 612.9M1305.7 611.3L1295.2 610.3M1365.1 613.9L1369.1 614.6M1376.5 615.5L1355.6 614.5M1277.2 610.6L1282.9 611.3M1282.9 610.3L1273.9 609.4M1270.1 611.1L1263.7 611.0M1092.8 587.6L1111.8 588.6M1092.8 587.6L1071.9 586.5M1034.1 587.8L1021.5 587.5M991.5 585.9L981.6 586.0M981.6 586.0L988.7 586.8M1028.8 589.2L1030.9 589.4M1160.1 590.2L1182.6 591.5M1187.3 591.9L1188.5 591.9M1403.6 612.9L1406.0 613.2M1436.9 616.4L1459.1 617.6M1410.1 615.5L1399.1 615.2M1399.1 615.2L1405.0 616.0M1438.2 609.2L1454.8 609.9M1032.8 584.5L1026.4 584.3M1026.4 584.3L1020.7 584.6M972.4 583.0L971.4 583.3M971.4 583.3L975.6 584.1M1273.6 598.4L1288.9 599.5M1288.8 599.9L1296.6 600.2M909.3 584.5L921.5 584.5M909.4 583.5L913.0 583.1M917.1 583.2L922.2 583.2M924.4 582.6L904.7 581.7M904.7 581.7L909.9 581.1M926.3 581.4L916.8 580.6M924.6 579.8L927.7 580.0M1029.4 621.2L1018.9 620.9M1307.4 614.2L1318.0 615.8M1381.8 621.2L1376.8 621.7M1432.5 622.8L1436.5 623.2M978.8 608.3L982.7 608.9M961.6 607.4L960.3 606.2M960.3 606.2L958.2 605.7M832.1 593.6L807.5 592.4M617.5 590.7L613.6 590.1M1312.2 618.0L1333.5 619.3M1198.4 604.5L1187.3 604.6M948.2 579.5L964.8 580.3M983.5 581.2L987.3 581.2M1024.7 583.2L1044.4 583.9M1049.9 583.7L1040.3 582.8M1054.8 583.7L1073.0 584.4M1079.3 584.1L1074.2 583.9M1069.0 583.2L1059.0 582.7M1049.9 583.7L1067.1 584.8M1067.1 584.8L1082.3 585.8M971.3 578.8L956.4 577.7M950.7 576.9L932.3 576.0M992.2 579.2L1010.7 579.9M1010.7 579.9L1018.3 580.2M1018.3 580.2L1023.8 580.0M974.4 575.2L982.4 575.4M969.5 573.7L989.0 574.5M992.8 574.8L1013.1 575.5M1013.1 575.5L1007.1 574.7M881.1 605.7L878.6 606.8M1217.4 636.3L1200.4 635.4M1242.4 638.6L1252.6 638.9M1259.2 638.8L1264.5 639.0M1301.1 644.9L1321.6 646.2M1321.6 646.2L1321.0 645.9M1381.0 618.0L1369.6 617.3M1234.7 631.1L1268.8 632.6M1283.1 633.9L1273.9 633.6M1319.2 633.9L1311.9 633.6M1352.7 636.0L1357.4 636.1M1311.9 633.6L1292.1 633.1M1362.6 639.1L1378.1 640.8M1384.5 608.4L1419.3 610.2M1419.3 610.2L1454.2 612.4M1454.2 612.4L1467.3 612.8M1467.3 612.8L1473.6 612.9M1209.8 617.5L1215.8 617.8M1240.6 618.0L1254.5 618.5M1240.6 618.0L1222.8 616.5M1018.9 620.9L1036.7 621.9M1287.5 612.3L1282.9 611.3M828.6 600.6L842.8 601.5M1053.8 587.5L1044.1 587.4M675.2 599.3L682.4 599.1M1352.3 604.1L1345.9 604.3M1237.3 623.2L1227.5 623.4M1215.1 604.1L1237.8 605.0M751.4 605.7L745.8 605.3M1265.4 605.3L1251.4 604.3M1265.6 604.3L1265.6 604.7M1352.7 636.0L1365.5 636.8M1225.4 604.8L1241.2 605.0M870.1 589.7L861.6 588.8M1086.4 616.9L1107.1 618.4M1028.8 589.2L1027.3 589.3M1071.1 598.4L1063.7 598.1M739.1 594.6L757.3 596.2M1345.9 604.3L1339.1 603.3M1273.9 633.6L1268.8 632.6M984.0 601.1L989.5 601.3M1144.5 601.5L1123.7 600.3M1286.6 607.7L1262.7 607.1M1045.4 587.1L1042.2 587.5M1178.8 596.8L1165.4 595.5M812.3 607.2L814.9 608.2M630.8 592.8L639.5 594.2M1298.8 605.3L1291.3 605.5M1036.7 621.9L1064.8 623.5M1439.4 624.3L1416.0 622.2M1138.6 608.8L1136.7 609.3M1024.8 577.1L1010.2 576.7M1150.3 608.1L1134.5 606.8M971.2 574.0L967.3 574.2M1338.3 635.1L1319.2 633.9M1151.0 599.3L1129.8 598.4M782.5 605.2L792.5 606.1M1224.5 620.9L1220.9 619.8M1198.0 626.5L1206.8 627.8M611.4 597.4L613.7 596.6M1091.8 588.4L1096.8 588.7M877.8 594.5L881.4 595.6M1456.1 613.1L1467.3 612.8M957.3 570.9L956.0 571.2M965.0 593.4L948.2 592.1M1073.0 618.2L1095.1 618.8M1296.6 600.2L1288.9 599.5M787.4 600.8L788.2 599.9M995.4 581.5L983.5 581.2M1154.3 603.8L1156.6 604.7M1177.0 607.6L1164.0 607.6M1356.7 625.8L1338.0 625.6M1182.6 591.5L1188.5 591.9M699.5 604.8L710.8 606.0M1422.2 607.6L1397.3 606.4M1211.4 624.0L1240.3 625.5M1190.7 626.4L1162.3 625.3M1333.1 609.3L1303.9 607.4M782.9 605.6L792.8 606.6M1255.1 605.1L1241.2 605.0M1295.6 600.9L1310.4 601.4M819.8 605.6L800.9 604.3M1395.3 636.3L1401.5 635.4M1432.5 622.8L1416.0 622.2M621.2 596.4L613.7 596.6M1110.8 610.0L1134.5 611.5M639.5 594.2L648.9 594.8M1172.8 627.8L1177.2 627.3M1362.1 623.9L1355.8 622.7M799.6 603.1L805.0 604.1M987.0 588.9L989.5 588.5M1080.8 609.4L1101.2 610.4M1201.7 594.6L1188.1 593.7M1026.7 597.4L1038.2 598.7M1345.7 631.9L1364.8 634.0M1063.7 598.1L1065.9 599.0" stroke="#ffffff" stroke-width="2.2" fill="none"/><path d="M657.6 597.0L645.8 596.2M676.7 600.1L676.8 600.2M690.2 602.1L685.0 601.9M677.2 602.1L677.5 602.5M658.6 599.4L655.0 599.9M626.8 595.4L609.7 594.5M644.1 594.3L648.9 594.8M669.2 596.0L666.4 595.2M675.8 603.7L664.7 603.4M664.7 603.4L658.2 603.0M740.7 608.6L728.8 608.1M754.0 606.9L757.2 606.6M745.8 605.3L745.1 605.6M711.2 600.6L717.5 600.6M666.4 595.2L686.1 596.0M700.1 598.0L698.7 598.3M711.0 596.9L720.4 597.0M630.8 592.8L616.8 591.8M735.5 594.9L739.1 594.6M738.5 596.2L750.8 596.4M787.0 602.8L784.0 602.9M784.0 602.9L770.9 601.6M770.9 601.6L765.3 601.7M765.3 601.7L767.0 601.9M832.7 608.6L824.0 608.5M803.5 600.5L816.3 601.9M825.3 601.3L828.6 600.6M835.4 600.4L847.4 601.4M828.2 600.0L819.3 599.0M856.2 602.3L875.5 603.3M886.6 604.2L886.6 604.6M806.6 608.7L792.2 608.2M866.7 601.7L881.2 601.8M888.0 599.5L884.1 599.6M892.0 599.7L901.1 599.6M820.4 597.3L811.4 597.1M753.5 598.0L765.2 599.5M889.4 597.9L901.7 598.5M828.5 604.8L850.6 606.1M845.7 607.1L847.5 607.8M889.3 611.0L910.4 611.7M834.8 597.2L815.4 595.6M809.4 594.7L816.0 594.5M816.0 594.5L823.6 594.2M823.6 594.2L839.6 595.4M839.6 595.4L847.6 596.2M849.5 595.2L862.3 595.3M850.1 591.9L851.9 591.3M896.4 594.6L914.4 595.0M924.7 594.5L929.0 594.4M926.6 595.7L936.0 597.0M966.0 593.9L965.0 593.4M965.0 593.4L980.8 593.7M980.8 593.7L992.7 594.8M998.6 594.9L1019.1 596.0M1025.0 596.4L1038.3 597.1M1065.8 597.8L1070.9 598.0M1050.9 596.4L1038.9 595.6M1032.3 595.4L1029.4 595.5M1063.3 598.2L1065.9 599.0M1009.4 594.4L999.9 593.3M1077.6 599.9L1098.6 601.1M1102.2 596.9L1083.4 595.7M1138.6 599.5L1141.4 599.9M1141.7 600.9L1137.3 600.6M1167.1 600.5L1161.6 600.1M1165.8 599.7L1172.3 600.0M1172.3 600.0L1183.9 600.6M1164.4 599.4L1169.5 599.3M1169.5 599.3L1177.6 599.5M1153.5 603.2L1154.3 603.8M1155.2 604.6L1156.6 604.7M1196.9 606.4L1200.5 606.9M1024.3 596.5L1026.7 597.4M1051.6 594.4L1059.1 594.5M1009.5 591.7L999.9 591.4M912.9 590.1L908.2 590.4M907.3 590.4L900.8 590.4M908.2 590.4L893.0 589.1M900.8 590.4L881.9 589.5M976.1 591.4L978.0 591.4M975.1 590.3L971.8 590.1M971.8 590.1L967.7 589.4M904.3 588.7L886.6 587.4M872.6 585.9L883.7 586.0M872.7 587.1L866.9 587.4M994.5 589.3L996.9 589.2M996.9 589.2L989.5 588.5M966.9 586.8L959.6 586.7M947.8 586.5L942.0 586.5M986.7 600.4L996.3 600.7M1064.3 604.0L1072.0 604.2M966.3 600.4L957.6 600.1M1121.4 606.8L1126.2 606.6M1134.5 606.8L1134.4 606.5M1134.5 606.8L1141.7 607.0M1119.3 612.3L1113.0 612.5M1127.1 614.1L1135.7 614.0M1140.0 614.2L1141.0 614.1M1043.4 606.7L1035.2 605.8M1035.2 605.8L1023.1 605.7M1035.2 605.8L1045.5 605.6M1045.5 605.6L1062.9 605.9M932.9 598.6L911.0 597.4M911.0 597.4L906.2 597.3M1077.1 613.2L1087.3 614.1M1031.5 609.7L1024.3 609.7M1024.3 609.7L1017.3 609.9M1058.9 613.4L1061.4 613.7M1063.5 613.7L1062.1 613.5M1026.9 612.7L1019.3 612.9M1019.3 612.9L1011.1 612.9M1063.5 613.7L1079.8 615.3M1034.8 614.9L1031.4 615.7M956.0 610.9L952.6 610.9M1023.8 605.9L1010.4 606.0M1010.4 606.0L1010.3 606.4M1009.9 607.2L998.6 607.2M993.7 606.0L973.2 604.4M963.4 604.3L968.2 605.0M1018.3 615.9L1017.5 616.1M991.0 617.4L985.9 617.8M973.4 616.2L971.4 615.7M1097.0 623.6L1107.6 623.7M1107.6 623.7L1115.9 624.2M1134.5 611.5L1154.2 611.9M1154.2 611.9L1161.0 612.2M1141.4 610.1L1136.7 609.3M1110.2 625.5L1106.2 625.6M1106.2 625.6L1103.5 625.7M1155.4 629.0L1175.7 629.7M1172.8 627.8L1181.6 627.9M1177.2 627.3L1204.3 628.5M1198.0 626.5L1190.6 625.2M1179.6 623.8L1163.4 622.7M1149.9 621.8L1145.4 622.1M1202.1 623.9L1192.7 622.6M1202.3 622.0L1216.6 622.9M1298.1 626.3L1311.6 627.2M1311.6 627.2L1316.3 626.9M1292.1 625.2L1280.8 624.5M1277.6 623.7L1270.1 623.0M1275.1 622.6L1276.6 622.3M1277.1 622.3L1288.2 622.4M1353.5 628.0L1344.7 626.7M1338.0 625.6L1314.4 624.4M1314.4 624.4L1319.6 623.9M1206.8 627.8L1229.9 629.0M1314.4 624.4L1310.5 625.1M1232.0 625.2L1240.6 626.8M1246.8 627.5L1272.4 629.4M1249.2 633.8L1243.9 634.1M1227.8 613.2L1235.8 614.2M1247.5 615.2L1245.4 616.0M1353.9 623.7L1362.1 624.0M1324.1 621.4L1306.1 620.1M1341.3 622.5L1355.8 622.7M1145.9 594.8L1149.2 595.4M1117.3 591.2L1123.4 591.4M1141.8 591.6L1137.0 591.3M1148.9 588.5L1137.7 587.6M1228.1 599.5L1231.0 599.9M1229.7 597.7L1240.3 597.6M1240.3 597.6L1253.3 598.3M1243.4 597.0L1235.5 596.3M1200.0 594.1L1201.7 594.6M1201.7 594.6L1195.0 594.7M1241.9 601.2L1232.3 601.2M1232.3 601.2L1246.0 602.4M1249.7 603.1L1265.6 604.3M1265.4 605.3L1255.1 605.1M1259.5 605.8L1272.8 606.9M1262.7 607.1L1265.5 607.9M1298.3 604.5L1300.9 604.3M1300.9 604.3L1288.2 603.4M1342.6 604.8L1344.3 604.6M1371.8 607.0L1368.0 607.0M1384.5 608.4L1362.6 607.6M1385.4 607.2L1401.9 607.4M1382.7 604.1L1369.2 603.4M1309.8 610.0L1326.3 611.4M1347.3 613.1L1334.8 612.8M1347.3 613.1L1365.1 613.9M1369.1 614.6L1376.5 615.5M1282.9 610.3L1285.8 610.8M1115.1 589.8L1103.0 589.5M1103.0 589.5L1096.3 589.5M1059.7 586.3L1050.3 586.1M1086.1 589.7L1084.2 589.7M1077.1 589.0L1058.7 588.0M1012.7 586.9L994.0 585.9M1084.2 589.7L1069.2 589.5M1182.6 591.5L1187.3 591.9M1322.7 609.7L1317.5 609.3M1317.5 609.3L1317.8 609.1M1358.7 609.7L1363.8 610.0M1399.5 612.7L1403.6 612.9M1406.0 613.2L1397.9 613.1M1035.7 591.2L1029.1 590.7M1029.1 590.7L1026.9 590.5M1468.3 611.1L1461.1 611.0M1023.6 585.1L1009.1 584.9M988.2 583.8L973.5 582.9M973.5 582.9L972.4 583.0M1248.1 596.4L1273.4 598.0M1294.1 600.6L1288.7 600.4M1294.1 600.6L1295.6 600.9M1295.6 600.9L1287.8 600.8M1064.2 591.1L1079.3 591.2M1434.5 618.8L1444.8 620.0M921.5 584.5L909.4 583.5M946.4 583.7L949.9 583.7M916.8 580.6L923.2 580.6M916.2 578.8L916.8 578.8M1064.8 623.5L1053.1 623.2M1036.7 621.9L1033.3 621.4M1318.0 615.8L1338.4 617.6M1391.1 619.8L1420.3 621.9M1420.3 621.9L1416.0 622.2M1405.7 625.6L1409.7 626.0M1368.7 613.7L1363.3 612.3M1198.2 608.7L1221.5 609.2M1212.4 601.3L1214.0 602.2M975.8 608.0L961.6 607.4M613.6 590.1L619.0 590.3M1136.4 627.5L1131.2 628.7M1333.5 619.3L1336.1 619.3M1169.4 601.7L1188.3 603.6M936.9 579.7L948.2 579.5M1009.9 582.4L1003.2 582.5M1074.2 583.9L1069.0 583.2M975.6 578.7L971.3 578.8M992.2 579.2L990.5 578.6M956.4 577.7L950.7 576.9M932.3 576.0L934.4 576.7M1005.7 578.5L1006.9 577.9M966.8 575.5L974.4 575.2M982.4 575.4L1001.8 576.2M1010.2 576.7L1014.2 577.2M966.8 575.5L949.5 575.0M961.7 576.1L953.5 576.0M962.9 573.8L962.1 573.5M962.1 573.5L961.9 573.2M945.0 573.6L941.3 572.9M923.3 577.0L944.6 578.3M923.3 577.0L927.1 578.0M1205.9 633.1L1200.8 633.0M1264.5 639.0L1263.4 638.6M1237.3 638.9L1254.0 641.4M1216.7 639.2L1194.8 638.1M1194.8 638.1L1178.3 635.8M1268.8 632.6L1283.1 633.9M1288.2 634.7L1316.6 636.2M1295.5 637.6L1330.5 640.8M1363.7 643.7L1364.6 645.0M1218.9 617.6L1240.6 618.0M1319.3 648.1L1319.4 648.3M983.7 573.0L985.4 572.7M962.8 571.3L957.3 570.9M748.5 594.7L763.6 594.2M1209.8 617.5L1218.9 617.6M916.2 578.8L924.6 579.8M1387.3 603.8L1369.2 603.4M1073.0 584.4L1074.2 583.9M1295.6 600.9L1288.7 600.4M794.7 594.3L813.3 595.5M1013.3 591.2L1009.5 591.7M934.6 603.4L956.4 604.0M1355.6 614.5L1369.1 614.6M1207.8 606.7L1200.5 606.9M1041.3 593.3L1051.6 594.4M1030.7 588.7L1028.8 589.2M1038.0 618.4L1036.4 617.5M979.9 592.0L978.0 591.4M843.2 594.0L840.4 594.5M1461.1 611.0L1438.2 609.2M1025.7 601.4L1018.0 601.1M1363.8 610.0L1353.5 608.8M757.3 596.2L735.5 594.9M666.4 595.2L663.2 595.6M1013.8 581.8L1013.0 581.0M1314.4 621.6L1324.1 621.4M962.8 571.3L952.5 570.7M1018.3 615.9L1036.4 617.5M1198.2 608.7L1177.0 607.6M904.3 588.7L915.5 588.9M1206.0 631.6L1177.2 629.4M1162.4 623.2L1179.6 623.8M765.2 599.5L787.4 600.8M875.5 603.3L886.6 604.6M1237.3 623.2L1209.1 621.4M1277.0 623.0L1270.9 622.4M1050.9 596.4L1054.0 595.8M1183.3 608.0L1175.0 607.6M1362.1 624.0L1347.4 624.0M972.5 597.5L994.4 599.2M1380.1 607.1L1368.0 607.0M1073.0 618.2L1095.0 619.7M904.5 601.0L905.0 601.2M1097.0 623.6L1068.5 621.5M1137.0 591.3L1140.1 592.0M948.8 603.2L963.4 604.3M1399.5 612.7L1397.9 613.1M899.4 601.3L903.7 601.0M1232.6 637.9L1226.5 636.4M1363.8 610.0L1368.7 609.3M1226.5 636.4L1200.4 635.4M828.6 600.6L833.7 600.3M621.2 596.4L608.6 595.3M712.7 598.1L707.7 597.7M1137.7 587.6L1156.6 589.1M690.3 602.1L689.9 601.8M850.1 591.9L852.4 592.6M949.0 589.6L941.4 588.7M1240.6 618.0L1263.4 618.5M885.0 586.9L886.6 587.4M1181.6 627.9L1177.2 628.6M1251.4 604.3L1255.1 605.1M704.1 604.2L720.4 604.5M916.2 578.8L937.4 579.8M983.3 599.9L996.3 600.7M1140.0 594.4L1149.2 595.4M1071.6 598.5L1063.3 598.2M962.7 574.1L946.4 573.9M1202.3 622.0L1183.4 620.6M1006.9 577.9L1028.4 578.8M1161.6 617.8L1188.7 618.9M847.5 607.8L842.8 606.5" stroke="#b040ff" stroke-width="2.2" fill="none"/><path d="M645.8 596.2L641.9 595.5M690.2 602.1L690.3 602.1M705.9 603.7L704.1 604.2M611.3 593.6L617.6 593.4M663.2 595.6L669.2 596.0M694.9 605.1L675.8 603.7M732.7 607.1L744.3 608.1M718.3 602.2L723.3 602.0M707.7 597.7L711.0 596.9M790.7 600.1L787.4 600.8M812.3 607.2L792.5 606.1M816.3 601.9L822.8 602.0M828.2 600.0L833.7 600.3M847.4 601.4L842.8 601.5M806.4 604.0L828.5 604.8M809.4 594.7L805.3 594.4M805.3 594.4L794.7 594.3M832.1 593.6L843.2 594.0M852.6 592.4L850.1 591.9M888.2 593.3L896.4 594.6M1038.9 595.6L1032.3 595.4M1094.2 597.8L1094.0 597.7M1097.0 597.4L1102.2 596.9M1161.6 600.1L1151.0 599.3M1144.3 598.6L1152.9 598.7M1177.6 599.5L1173.0 598.6M1026.7 597.4L1013.2 597.2M900.8 590.4L895.2 590.8M978.7 590.9L975.1 590.3M967.7 589.4L975.4 589.0M989.9 601.4L984.0 601.1M961.3 599.9L966.3 600.4M1134.4 606.5L1134.1 606.3M1108.7 611.0L1116.2 612.1M1141.0 614.1L1157.2 614.5M1031.5 609.7L1031.4 609.0M1016.4 613.6L1032.1 614.4M1079.8 615.3L1098.3 616.6M1095.1 618.8L1095.0 619.7M952.9 610.3L956.0 610.9M956.6 611.7L959.3 612.6M931.0 610.7L915.7 609.3M956.4 604.0L953.5 604.0M1018.2 618.2L1000.7 616.6M1145.1 611.0L1146.2 610.5M1277.0 623.0L1275.1 622.6M1270.9 624.1L1259.2 623.0M1341.5 629.5L1346.2 630.4M1272.4 629.4L1262.3 629.8M1219.4 631.5L1249.2 633.8M1297.2 637.2L1295.5 637.6M863.8 589.4L855.2 589.3M1353.9 623.7L1341.3 622.5M1120.6 595.8L1112.5 594.5M1126.7 593.1L1116.9 592.2M1153.5 591.2L1168.5 592.5M1195.0 594.7L1185.5 594.2M1246.0 602.4L1249.7 603.1M1265.5 604.5L1265.6 604.7M1286.6 607.7L1280.7 608.1M1225.4 604.8L1215.1 604.1M1368.0 607.0L1383.9 608.1M1349.8 601.8L1359.6 602.1M1359.6 602.1L1372.0 602.5M1326.3 611.4L1330.0 611.9M1096.8 588.7L1095.4 588.5M1053.8 587.5L1045.4 587.1M1044.1 587.4L1042.2 587.5M1021.5 587.5L1012.7 586.9M994.0 585.9L991.5 585.9M1035.6 589.1L1028.8 589.2M1454.8 609.9L1468.3 611.1M1287.8 600.8L1291.1 601.5M1456.1 619.4L1434.5 618.8M1369.3 619.5L1376.3 619.0M1369.3 619.5L1381.8 621.2M1436.5 623.2L1439.4 624.3M1247.5 615.2L1280.4 616.8M977.9 580.7L978.2 580.6M1001.9 580.1L992.2 579.2M1014.2 577.2L1029.8 577.7M945.0 573.6L946.4 573.9M1013.1 575.5L1020.0 575.9M1226.5 636.4L1217.4 636.3M1183.5 634.5L1156.1 632.6M1321.0 645.9L1342.0 646.7M1444.0 613.7L1451.7 614.7M1352.7 636.0L1351.3 635.5M1110.2 625.5L1103.5 625.7M877.8 594.5L895.1 595.8M860.4 600.2L881.2 601.8M1222.8 616.5L1254.5 618.5M1278.6 616.5L1307.2 618.5M1424.7 615.4L1434.4 615.0M1023.8 605.9L1043.4 606.7M901.1 599.6L888.0 599.5M1242.6 629.5L1262.3 629.8M1058.7 588.0L1044.1 587.4M929.0 594.4L910.1 594.0M978.2 580.6L964.8 580.3M1270.9 622.4L1277.1 622.3M952.9 610.3L974.4 611.5M895.1 595.8L906.2 597.3M1077.1 589.0L1084.2 589.7M1152.5 594.8L1140.0 594.4M1185.5 594.2L1188.1 593.7M1282.9 611.3L1310.8 613.1M1277.2 610.6L1261.4 609.5" stroke="#ff0000" stroke-width="2.2" fill="none"/><path d="M621.2 596.4L625.9 597.0M613.7 596.6L615.2 597.4M615.2 597.4L611.4 597.4M615.2 597.4L629.1 598.0M689.9 601.8L690.2 602.1M690.3 602.1L702.7 602.8M629.1 598.0L641.3 598.2M704.1 604.2L699.5 604.8M609.7 594.5L610.9 594.0M610.9 594.0L611.3 593.6M624.6 594.1L632.6 594.1M745.1 605.6L744.3 605.7M751.9 604.8L734.8 603.8M723.3 602.0L711.2 600.6M644.1 594.3L630.8 592.8M739.5 597.2L742.4 597.3M785.1 598.4L791.3 598.8M801.1 599.6L803.5 600.5M784.2 601.4L791.8 602.0M806.4 604.0L805.0 604.1M805.0 604.1L800.9 604.3M822.6 606.5L830.2 607.7M792.5 606.1L782.9 605.6M782.9 605.6L782.5 605.2M886.6 604.6L894.9 605.9M904.5 601.0L892.0 599.7M884.1 599.6L870.4 599.0M901.1 599.6L909.6 600.0M831.6 598.2L822.5 598.2M831.6 598.2L820.4 597.3M741.8 598.0L749.4 599.4M877.5 598.0L879.8 597.3M829.4 602.4L839.1 603.9M850.6 606.1L842.8 606.5M842.8 606.5L845.7 607.1M850.6 606.1L874.2 607.9M874.2 607.9L887.5 609.5M820.4 597.3L834.8 597.2M843.2 594.0L848.4 593.3M872.2 593.0L888.2 593.3M914.4 595.0L926.6 595.7M1038.3 597.1L1046.1 597.4M1063.7 598.1L1071.6 598.5M1075.1 598.0L1076.8 597.8M1073.8 597.5L1064.2 596.8M1110.2 598.8L1117.7 598.5M1109.1 597.0L1123.6 597.4M1129.8 598.4L1138.6 599.5M1141.4 599.9L1153.3 601.2M1144.5 601.5L1147.4 602.2M1167.4 601.6L1169.4 601.7M1151.0 599.3L1144.3 598.6M1158.8 597.8L1159.0 598.1M1177.7 605.5L1196.9 606.4M1205.8 606.5L1207.8 606.7M1026.8 592.5L1024.3 591.7M965.0 593.4L945.2 592.4M1109.1 597.0L1103.2 596.0M1103.2 596.0L1103.4 595.7M948.2 592.1L949.5 591.4M949.5 591.4L955.8 591.4M914.8 589.2L915.5 588.9M908.2 590.4L907.3 590.4M908.2 590.4L925.3 591.4M881.6 587.4L877.6 586.9M897.8 587.2L906.7 587.5M896.7 585.9L890.5 584.8M980.0 588.8L987.0 588.9M973.9 587.5L972.1 587.3M959.6 586.7L956.7 586.7M1056.7 602.0L1063.9 602.7M1063.9 602.7L1071.5 603.0M1099.3 605.0L1101.7 605.9M1101.7 605.9L1115.7 606.7M1126.2 606.6L1134.5 606.8M1183.3 608.0L1198.2 608.7M1198.2 608.7L1199.9 609.6M942.1 598.5L932.9 598.6M996.3 598.1L1009.2 598.7M1097.6 612.4L1092.9 611.7M1107.9 613.0L1119.7 614.3M1023.1 605.7L1023.8 605.9M1061.4 613.7L1063.5 613.7M1098.3 616.6L1108.6 616.8M1086.4 616.9L1095.8 617.4M1083.3 619.3L1073.0 618.2M1127.8 618.6L1130.8 619.2M990.8 611.7L974.4 611.5M1009.9 607.2L993.7 606.0M963.4 604.3L956.4 604.0M934.6 603.4L927.5 603.2M1031.4 615.7L1018.3 615.9M1036.4 617.5L1044.8 618.1M1000.7 616.6L996.5 616.9M996.5 616.9L991.0 617.4M991.0 617.4L996.9 617.9M989.5 618.4L971.9 617.8M1068.5 621.5L1082.1 623.4M1115.9 624.2L1135.2 625.4M1161.0 612.2L1163.0 612.0M1143.6 609.7L1138.6 608.8M1152.4 628.7L1155.4 629.0M1177.2 629.4L1177.2 628.6M1189.9 623.9L1187.4 623.5M1191.2 621.8L1197.7 622.0M1197.7 622.0L1202.3 622.0M1230.8 623.5L1237.3 623.2M1252.1 625.1L1260.8 625.0M1280.8 624.5L1270.9 624.1M1275.1 622.6L1270.9 622.4M1311.6 627.2L1331.6 628.4M1288.2 622.4L1288.5 621.6M1220.9 619.8L1216.7 619.3M1329.0 626.9L1337.3 627.1M1351.7 626.7L1375.4 627.5M1175.7 629.7L1206.0 631.6M1219.4 631.5L1210.2 630.4M1297.2 637.2L1300.5 637.3M1308.3 637.6L1336.7 639.0M1405.5 633.0L1414.5 632.4M992.7 603.8L1001.2 603.3M881.9 589.5L861.6 588.8M855.2 589.3L856.6 589.9M1199.9 609.6L1182.8 609.5M933.4 600.8L929.9 599.5M1356.7 625.8L1347.4 624.0M1341.3 622.5L1324.1 621.4M1355.8 622.7L1380.0 623.3M1124.6 593.8L1140.0 594.4M1140.0 594.4L1144.6 594.4M1144.6 594.4L1152.5 594.8M1149.2 595.4L1160.3 596.3M1160.3 596.3L1159.2 596.7M1150.4 591.0L1153.5 591.2M1156.6 589.1L1148.9 588.5M1221.5 598.8L1228.1 599.5M1204.6 598.7L1192.1 598.2M1244.4 600.0L1241.1 599.2M1211.2 597.3L1198.1 597.0M1232.6 596.7L1243.4 597.0M1238.1 596.2L1248.1 596.4M1188.1 593.7L1200.0 594.1M1256.0 604.5L1251.4 604.3M1280.7 608.1L1262.7 607.1M1259.5 605.8L1241.2 605.0M1237.8 605.0L1225.4 604.8M1300.9 604.3L1314.2 604.7M1385.4 607.2L1380.1 607.1M1391.3 605.3L1400.3 605.4M1397.8 606.2L1381.0 605.4M1354.9 602.4L1349.8 601.8M1317.8 611.7L1305.7 611.3M1295.2 610.3L1282.9 610.3M1282.9 611.3L1270.1 611.1M1137.1 590.7L1115.1 589.8M1115.1 589.8L1104.1 589.0M1086.1 589.7L1077.1 589.0M1045.4 587.1L1044.1 587.4M1030.9 589.4L1041.1 590.1M1329.6 608.6L1331.0 608.1M1331.0 608.1L1353.5 608.8M1363.8 610.0L1377.0 611.2M1377.0 611.2L1373.6 611.3M1406.0 613.2L1415.8 613.6M1410.1 615.5L1404.6 614.9M1064.2 591.1L1066.5 591.8M1020.7 584.6L1023.6 585.1M995.1 584.2L988.2 583.8M1294.4 600.5L1294.1 600.6M1294.4 600.5L1310.4 601.4M1456.1 619.4L1473.5 621.2M925.1 585.9L909.3 584.5M924.4 582.6L946.4 583.7M916.8 578.8L936.9 579.7M1120.9 616.2L1123.1 615.9M1082.1 623.4L1064.8 623.5M1380.0 623.3L1405.7 625.6M1093.0 603.1L1115.3 604.2M1115.3 604.2L1125.5 604.6M1221.5 609.2L1240.9 611.2M613.6 590.1L609.6 589.9M1278.6 616.5L1264.8 614.6M1044.4 583.9L1049.9 583.7M1034.4 582.6L1013.8 581.8M1012.5 581.6L1013.0 581.0M1013.0 581.0L1001.9 580.1M981.2 578.9L975.6 578.7M990.5 578.6L996.3 578.4M1006.9 577.9L999.8 577.4M1024.8 577.1L1025.7 577.1M967.3 574.2L962.7 574.1M967.3 574.2L962.9 573.8M927.1 578.0L916.4 577.5M1206.0 631.6L1205.9 633.1M1200.8 633.0L1205.1 633.8M1252.6 638.9L1259.2 638.8M1264.5 642.8L1246.3 641.9M1246.3 641.9L1216.7 639.2M1265.7 642.1L1301.1 644.9M1344.8 646.0L1331.9 645.1M1151.1 589.8L1126.7 588.2M1391.1 619.8L1381.0 618.0M1381.0 618.0L1408.3 618.7M1283.1 633.9L1288.2 634.7M1316.6 636.2L1327.4 636.3M1338.3 635.1L1352.7 636.0M1326.8 634.2L1323.6 633.1M941.4 588.7L940.9 589.1M1374.3 633.5L1364.8 634.0M1216.7 619.3L1209.8 617.5M1140.1 592.0L1150.8 593.5M985.4 572.7L1001.2 573.4M957.3 570.9L952.5 570.7M957.3 570.9L962.4 570.6M962.4 570.6L953.5 570.1M970.7 570.6L985.0 571.5M964.6 569.3L961.4 569.0M968.7 569.0L974.9 568.9M973.5 582.9L971.4 583.3M1265.7 642.1L1246.3 641.9M1135.7 614.0L1141.0 614.1M946.1 595.9L929.0 594.4M1405.1 607.1L1397.8 606.2M979.7 599.1L959.4 598.4M901.7 598.5L879.8 597.3M1091.8 588.4L1096.8 588.5M961.9 573.2L971.2 574.0M1329.0 626.9L1353.5 628.0M1139.3 591.0L1141.8 591.6M1024.3 596.5L1019.1 596.0M820.4 597.3L822.5 598.2M1038.9 595.6L1025.2 594.9M1305.7 611.3L1321.6 612.9M1434.2 616.8L1436.9 616.4M676.7 600.1L688.5 601.3M759.5 597.4L774.9 597.5M812.5 602.7L791.8 602.0M632.6 594.1L617.6 593.4M1147.5 619.7L1130.8 619.2M876.1 587.3L881.6 587.4M1380.1 607.1L1377.0 606.4M961.3 599.9L957.6 600.1M1221.5 598.8L1231.0 599.9M897.8 587.2L885.0 586.9M801.1 599.6L816.0 599.8M1163.0 612.0L1145.1 611.0M1025.2 579.9L1018.3 580.2M1124.6 593.8L1145.9 594.8M1070.9 598.0L1076.8 597.8M820.4 597.3L801.5 595.8M1118.7 592.0L1100.3 591.4M1322.7 609.7L1317.8 609.1M1270.2 635.2L1256.9 634.4M1381.0 605.4L1397.3 606.4M1159.2 596.7L1149.2 595.4M1300.5 637.3L1295.5 637.6M768.1 602.4L765.3 601.7M1062.1 613.5L1061.4 613.7M1101.7 605.9L1121.4 606.8M1298.3 604.5L1314.2 604.7M1083.8 613.2L1074.5 613.1M881.6 587.4L872.7 587.1M1058.9 613.4L1052.2 613.6M1277.6 623.7L1259.2 623.0M1045.4 601.9L1063.9 602.7M1152.4 628.7L1175.7 629.7M1096.5 595.7L1083.4 595.7M1005.7 592.9L999.9 593.3M700.1 598.0L708.7 597.8M1161.0 612.2L1145.1 611.0M1347.3 613.1L1368.7 613.7M1121.4 606.8L1099.3 605.0M935.4 610.3L915.7 609.3" stroke="#ff40ff" stroke-width="2.2" fill="none"/><path d="M1313.0 626.9a3.3 3.3 0 1 0 6.6 0a3.3 3.3 0 1 0 -6.6 0M1279.6 611.3a3.3 3.3 0 1 0 6.6 0a3.3 3.3 0 1 0 -6.6 0M1309.8 603.5a3.3 3.3 0 1 0 6.6 0a3.3 3.3 0 1 0 -6.6 0M978.7 604.4a3.3 3.3 0 1 0 6.6 0a3.3 3.3 0 1 0 -6.6 0M663.1 595.2a3.3 3.3 0 1 0 6.6 0a3.3 3.3 0 1 0 -6.6 0M1262.4 642.1a3.3 3.3 0 1 0 6.6 0a3.3 3.3 0 1 0 -6.6 0M1384.0 603.8a3.3 3.3 0 1 0 6.6 0a3.3 3.3 0 1 0 -6.6 0M1130.8 606.3a3.3 3.3 0 1 0 6.6 0a3.3 3.3 0 1 0 -6.6 0M1071.6 605.7a3.3 3.3 0 1 0 6.6 0a3.3 3.3 0 1 0 -6.6 0M1169.7 598.6a3.3 3.3 0 1 0 6.6 0a3.3 3.3 0 1 0 -6.6 0M1284.5 602.9a3.3 3.3 0 1 0 6.6 0a3.3 3.3 0 1 0 -6.6 0M1194.9 608.7a3.3 3.3 0 1 0 6.6 0a3.3 3.3 0 1 0 -6.6 0M1266.9 635.2a3.3 3.3 0 1 0 6.6 0a3.3 3.3 0 1 0 -6.6 0M625.8 598.0a3.3 3.3 0 1 0 6.6 0a3.3 3.3 0 1 0 -6.6 0M1396.2 633.2a3.3 3.3 0 1 0 6.6 0a3.3 3.3 0 1 0 -6.6 0M1213.4 639.2a3.3 3.3 0 1 0 6.6 0a3.3 3.3 0 1 0 -6.6 0M958.1 569.0a3.3 3.3 0 1 0 6.6 0a3.3 3.3 0 1 0 -6.6 0M1161.1 599.4a3.3 3.3 0 1 0 6.6 0a3.3 3.3 0 1 0 -6.6 0M819.5 602.0a3.3 3.3 0 1 0 6.6 0a3.3 3.3 0 1 0 -6.6 0M1068.2 603.0a3.3 3.3 0 1 0 6.6 0a3.3 3.3 0 1 0 -6.6 0M929.6 598.6a3.3 3.3 0 1 0 6.6 0a3.3 3.3 0 1 0 -6.6 0M968.3 611.2a3.3 3.3 0 1 0 6.6 0a3.3 3.3 0 1 0 -6.6 0M954.4 594.2a3.3 3.3 0 1 0 6.6 0a3.3 3.3 0 1 0 -6.6 0M1224.8 599.5a3.3 3.3 0 1 0 6.6 0a3.3 3.3 0 1 0 -6.6 0M797.8 599.6a3.3 3.3 0 1 0 6.6 0a3.3 3.3 0 1 0 -6.6 0M1042.8 597.4a3.3 3.3 0 1 0 6.6 0a3.3 3.3 0 1 0 -6.6 0M1060.2 613.7a3.3 3.3 0 1 0 6.6 0a3.3 3.3 0 1 0 -6.6 0M844.3 596.2a3.3 3.3 0 1 0 6.6 0a3.3 3.3 0 1 0 -6.6 0M1136.0 591.0a3.3 3.3 0 1 0 6.6 0a3.3 3.3 0 1 0 -6.6 0M989.4 603.8a3.3 3.3 0 1 0 6.6 0a3.3 3.3 0 1 0 -6.6 0M1083.6 610.7a3.3 3.3 0 1 0 6.6 0a3.3 3.3 0 1 0 -6.6 0M1073.8 613.2a3.3 3.3 0 1 0 6.6 0a3.3 3.3 0 1 0 -6.6 0M1026.1 595.5a3.3 3.3 0 1 0 6.6 0a3.3 3.3 0 1 0 -6.6 0M1084.0 614.1a3.3 3.3 0 1 0 6.6 0a3.3 3.3 0 1 0 -6.6 0M1080.5 613.2a3.3 3.3 0 1 0 6.6 0a3.3 3.3 0 1 0 -6.6 0M1421.4 615.4a3.3 3.3 0 1 0 6.6 0a3.3 3.3 0 1 0 -6.6 0M1237.6 609.4a3.3 3.3 0 1 0 6.6 0a3.3 3.3 0 1 0 -6.6 0M1237.3 626.8a3.3 3.3 0 1 0 6.6 0a3.3 3.3 0 1 0 -6.6 0M913.5 578.8a3.3 3.3 0 1 0 6.6 0a3.3 3.3 0 1 0 -6.6 0M961.3 569.3a3.3 3.3 0 1 0 6.6 0a3.3 3.3 0 1 0 -6.6 0M1302.8 609.6a3.3 3.3 0 1 0 6.6 0a3.3 3.3 0 1 0 -6.6 0M968.6 617.8a3.3 3.3 0 1 0 6.6 0a3.3 3.3 0 1 0 -6.6 0M986.2 618.4a3.3 3.3 0 1 0 6.6 0a3.3 3.3 0 1 0 -6.6 0M1100.8 589.0a3.3 3.3 0 1 0 6.6 0a3.3 3.3 0 1 0 -6.6 0M1354.1 636.1a3.3 3.3 0 1 0 6.6 0a3.3 3.3 0 1 0 -6.6 0M1005.8 584.9a3.3 3.3 0 1 0 6.6 0a3.3 3.3 0 1 0 -6.6 0M1285.5 599.9a3.3 3.3 0 1 0 6.6 0a3.3 3.3 0 1 0 -6.6 0M1031.6 578.4a3.3 3.3 0 1 0 6.6 0a3.3 3.3 0 1 0 -6.6 0M1219.5 616.5a3.3 3.3 0 1 0 6.6 0a3.3 3.3 0 1 0 -6.6 0M1352.5 604.7a3.3 3.3 0 1 0 6.6 0a3.3 3.3 0 1 0 -6.6 0M980.7 601.1a3.3 3.3 0 1 0 6.6 0a3.3 3.3 0 1 0 -6.6 0M1327.2 640.8a3.3 3.3 0 1 0 6.6 0a3.3 3.3 0 1 0 -6.6 0M1358.8 624.0a3.3 3.3 0 1 0 6.6 0a3.3 3.3 0 1 0 -6.6 0M1311.1 621.6a3.3 3.3 0 1 0 6.6 0a3.3 3.3 0 1 0 -6.6 0M1035.0 594.4a3.3 3.3 0 1 0 6.6 0a3.3 3.3 0 1 0 -6.6 0M1061.8 608.7a3.3 3.3 0 1 0 6.6 0a3.3 3.3 0 1 0 -6.6 0M977.5 593.7a3.3 3.3 0 1 0 6.6 0a3.3 3.3 0 1 0 -6.6 0M1142.1 622.1a3.3 3.3 0 1 0 6.6 0a3.3 3.3 0 1 0 -6.6 0M859.0 595.3a3.3 3.3 0 1 0 6.6 0a3.3 3.3 0 1 0 -6.6 0M1197.5 633.0a3.3 3.3 0 1 0 6.6 0a3.3 3.3 0 1 0 -6.6 0M986.2 601.3a3.3 3.3 0 1 0 6.6 0a3.3 3.3 0 1 0 -6.6 0M1196.9 595.5a3.3 3.3 0 1 0 6.6 0a3.3 3.3 0 1 0 -6.6 0M608.0 593.6a3.3 3.3 0 1 0 6.6 0a3.3 3.3 0 1 0 -6.6 0M1032.3 589.1a3.3 3.3 0 1 0 6.6 0a3.3 3.3 0 1 0 -6.6 0M921.8 585.9a3.3 3.3 0 1 0 6.6 0a3.3 3.3 0 1 0 -6.6 0M804.2 592.4a3.3 3.3 0 1 0 6.6 0a3.3 3.3 0 1 0 -6.6 0M1059.6 605.9a3.3 3.3 0 1 0 6.6 0a3.3 3.3 0 1 0 -6.6 0M842.4 607.1a3.3 3.3 0 1 0 6.6 0a3.3 3.3 0 1 0 -6.6 0M1206.9 630.4a3.3 3.3 0 1 0 6.6 0a3.3 3.3 0 1 0 -6.6 0M1323.0 611.4a3.3 3.3 0 1 0 6.6 0a3.3 3.3 0 1 0 -6.6 0M1062.5 597.8a3.3 3.3 0 1 0 6.6 0a3.3 3.3 0 1 0 -6.6 0M1237.3 618.0a3.3 3.3 0 1 0 6.6 0a3.3 3.3 0 1 0 -6.6 0M1234.5 605.0a3.3 3.3 0 1 0 6.6 0a3.3 3.3 0 1 0 -6.6 0M891.8 595.8a3.3 3.3 0 1 0 6.6 0a3.3 3.3 0 1 0 -6.6 0M1368.5 607.0a3.3 3.3 0 1 0 6.6 0a3.3 3.3 0 1 0 -6.6 0M1006.9 576.7a3.3 3.3 0 1 0 6.6 0a3.3 3.3 0 1 0 -6.6 0M1122.3 626.5a3.3 3.3 0 1 0 6.6 0a3.3 3.3 0 1 0 -6.6 0M1020.5 605.9a3.3 3.3 0 1 0 6.6 0a3.3 3.3 0 1 0 -6.6 0M1341.4 626.7a3.3 3.3 0 1 0 6.6 0a3.3 3.3 0 1 0 -6.6 0M958.0 599.9a3.3 3.3 0 1 0 6.6 0a3.3 3.3 0 1 0 -6.6 0M1031.9 605.8a3.3 3.3 0 1 0 6.6 0a3.3 3.3 0 1 0 -6.6 0M1159.1 623.2a3.3 3.3 0 1 0 6.6 0a3.3 3.3 0 1 0 -6.6 0M925.7 594.4a3.3 3.3 0 1 0 6.6 0a3.3 3.3 0 1 0 -6.6 0M1105.8 597.0a3.3 3.3 0 1 0 6.6 0a3.3 3.3 0 1 0 -6.6 0M1395.8 615.2a3.3 3.3 0 1 0 6.6 0a3.3 3.3 0 1 0 -6.6 0M1051.5 581.1a3.3 3.3 0 1 0 6.6 0a3.3 3.3 0 1 0 -6.6 0M1150.0 601.2a3.3 3.3 0 1 0 6.6 0a3.3 3.3 0 1 0 -6.6 0M1093.7 623.6a3.3 3.3 0 1 0 6.6 0a3.3 3.3 0 1 0 -6.6 0M932.7 597.0a3.3 3.3 0 1 0 6.6 0a3.3 3.3 0 1 0 -6.6 0M1366.3 617.3a3.3 3.3 0 1 0 6.6 0a3.3 3.3 0 1 0 -6.6 0M983.6 572.4a3.3 3.3 0 1 0 6.6 0a3.3 3.3 0 1 0 -6.6 0M1178.3 627.9a3.3 3.3 0 1 0 6.6 0a3.3 3.3 0 1 0 -6.6 0M1144.1 602.2a3.3 3.3 0 1 0 6.6 0a3.3 3.3 0 1 0 -6.6 0M964.0 574.2a3.3 3.3 0 1 0 6.6 0a3.3 3.3 0 1 0 -6.6 0M1394.6 613.1a3.3 3.3 0 1 0 6.6 0a3.3 3.3 0 1 0 -6.6 0M953.1 577.7a3.3 3.3 0 1 0 6.6 0a3.3 3.3 0 1 0 -6.6 0M698.2 595.7a3.3 3.3 0 1 0 6.6 0a3.3 3.3 0 1 0 -6.6 0M773.8 609.0a3.3 3.3 0 1 0 6.6 0a3.3 3.3 0 1 0 -6.6 0M1060.9 591.1a3.3 3.3 0 1 0 6.6 0a3.3 3.3 0 1 0 -6.6 0M846.8 591.9a3.3 3.3 0 1 0 6.6 0a3.3 3.3 0 1 0 -6.6 0M1093.5 588.7a3.3 3.3 0 1 0 6.6 0a3.3 3.3 0 1 0 -6.6 0M1055.4 588.0a3.3 3.3 0 1 0 6.6 0a3.3 3.3 0 1 0 -6.6 0M826.1 602.4a3.3 3.3 0 1 0 6.6 0a3.3 3.3 0 1 0 -6.6 0M1452.8 613.1a3.3 3.3 0 1 0 6.6 0a3.3 3.3 0 1 0 -6.6 0M912.2 588.9a3.3 3.3 0 1 0 6.6 0a3.3 3.3 0 1 0 -6.6 0M891.6 605.9a3.3 3.3 0 1 0 6.6 0a3.3 3.3 0 1 0 -6.6 0M809.4 591.8a3.3 3.3 0 1 0 6.6 0a3.3 3.3 0 1 0 -6.6 0M1256.2 605.8a3.3 3.3 0 1 0 6.6 0a3.3 3.3 0 1 0 -6.6 0M1153.3 604.7a3.3 3.3 0 1 0 6.6 0a3.3 3.3 0 1 0 -6.6 0M966.2 600.0a3.3 3.3 0 1 0 6.6 0a3.3 3.3 0 1 0 -6.6 0M1353.4 625.8a3.3 3.3 0 1 0 6.6 0a3.3 3.3 0 1 0 -6.6 0M1240.1 597.0a3.3 3.3 0 1 0 6.6 0a3.3 3.3 0 1 0 -6.6 0M1127.9 628.7a3.3 3.3 0 1 0 6.6 0a3.3 3.3 0 1 0 -6.6 0M1373.5 621.7a3.3 3.3 0 1 0 6.6 0a3.3 3.3 0 1 0 -6.6 0M1060.4 598.1a3.3 3.3 0 1 0 6.6 0a3.3 3.3 0 1 0 -6.6 0M946.2 575.0a3.3 3.3 0 1 0 6.6 0a3.3 3.3 0 1 0 -6.6 0M1075.0 584.3a3.3 3.3 0 1 0 6.6 0a3.3 3.3 0 1 0 -6.6 0M952.5 591.4a3.3 3.3 0 1 0 6.6 0a3.3 3.3 0 1 0 -6.6 0M1418.9 607.6a3.3 3.3 0 1 0 6.6 0a3.3 3.3 0 1 0 -6.6 0M954.9 605.7a3.3 3.3 0 1 0 6.6 0a3.3 3.3 0 1 0 -6.6 0M829.4 608.6a3.3 3.3 0 1 0 6.6 0a3.3 3.3 0 1 0 -6.6 0M1323.5 634.2a3.3 3.3 0 1 0 6.6 0a3.3 3.3 0 1 0 -6.6 0M1002.4 578.5a3.3 3.3 0 1 0 6.6 0a3.3 3.3 0 1 0 -6.6 0M1251.2 618.5a3.3 3.3 0 1 0 6.6 0a3.3 3.3 0 1 0 -6.6 0M1429.2 622.8a3.3 3.3 0 1 0 6.6 0a3.3 3.3 0 1 0 -6.6 0M1402.2 633.0a3.3 3.3 0 1 0 6.6 0a3.3 3.3 0 1 0 -6.6 0M1071.2 613.1a3.3 3.3 0 1 0 6.6 0a3.3 3.3 0 1 0 -6.6 0M1201.0 628.5a3.3 3.3 0 1 0 6.6 0a3.3 3.3 0 1 0 -6.6 0M880.4 586.0a3.3 3.3 0 1 0 6.6 0a3.3 3.3 0 1 0 -6.6 0M1131.2 606.8a3.3 3.3 0 1 0 6.6 0a3.3 3.3 0 1 0 -6.6 0M1026.1 621.2a3.3 3.3 0 1 0 6.6 0a3.3 3.3 0 1 0 -6.6 0M997.4 616.6a3.3 3.3 0 1 0 6.6 0a3.3 3.3 0 1 0 -6.6 0M714.2 600.6a3.3 3.3 0 1 0 6.6 0a3.3 3.3 0 1 0 -6.6 0M1320.8 621.4a3.3 3.3 0 1 0 6.6 0a3.3 3.3 0 1 0 -6.6 0M1473.3 616.0a3.3 3.3 0 1 0 6.6 0a3.3 3.3 0 1 0 -6.6 0M1030.1 620.9a3.3 3.3 0 1 0 6.6 0a3.3 3.3 0 1 0 -6.6 0M1372.1 627.5a3.3 3.3 0 1 0 6.6 0a3.3 3.3 0 1 0 -6.6 0M1035.8 582.6a3.3 3.3 0 1 0 6.6 0a3.3 3.3 0 1 0 -6.6 0M981.7 571.5a3.3 3.3 0 1 0 6.6 0a3.3 3.3 0 1 0 -6.6 0M1180.2 634.5a3.3 3.3 0 1 0 6.6 0a3.3 3.3 0 1 0 -6.6 0M610.4 596.6a3.3 3.3 0 1 0 6.6 0a3.3 3.3 0 1 0 -6.6 0M828.8 593.6a3.3 3.3 0 1 0 6.6 0a3.3 3.3 0 1 0 -6.6 0M1004.7 601.2a3.3 3.3 0 1 0 6.6 0a3.3 3.3 0 1 0 -6.6 0M812.1 595.6a3.3 3.3 0 1 0 6.6 0a3.3 3.3 0 1 0 -6.6 0M1434.9 609.2a3.3 3.3 0 1 0 6.6 0a3.3 3.3 0 1 0 -6.6 0M993.6 589.2a3.3 3.3 0 1 0 6.6 0a3.3 3.3 0 1 0 -6.6 0M771.6 597.5a3.3 3.3 0 1 0 6.6 0a3.3 3.3 0 1 0 -6.6 0M1157.7 600.7a3.3 3.3 0 1 0 6.6 0a3.3 3.3 0 1 0 -6.6 0M997.9 603.3a3.3 3.3 0 1 0 6.6 0a3.3 3.3 0 1 0 -6.6 0M962.7 593.9a3.3 3.3 0 1 0 6.6 0a3.3 3.3 0 1 0 -6.6 0M1108.5 588.6a3.3 3.3 0 1 0 6.6 0a3.3 3.3 0 1 0 -6.6 0M922.0 591.4a3.3 3.3 0 1 0 6.6 0a3.3 3.3 0 1 0 -6.6 0M1082.8 589.7a3.3 3.3 0 1 0 6.6 0a3.3 3.3 0 1 0 -6.6 0M1263.0 647.6a3.3 3.3 0 1 0 6.6 0a3.3 3.3 0 1 0 -6.6 0M952.3 614.3a3.3 3.3 0 1 0 6.6 0a3.3 3.3 0 1 0 -6.6 0M972.3 578.7a3.3 3.3 0 1 0 6.6 0a3.3 3.3 0 1 0 -6.6 0M707.5 606.0a3.3 3.3 0 1 0 6.6 0a3.3 3.3 0 1 0 -6.6 0M1076.5 615.3a3.3 3.3 0 1 0 6.6 0a3.3 3.3 0 1 0 -6.6 0M1180.1 620.6a3.3 3.3 0 1 0 6.6 0a3.3 3.3 0 1 0 -6.6 0M1174.3 599.5a3.3 3.3 0 1 0 6.6 0a3.3 3.3 0 1 0 -6.6 0M1049.8 623.2a3.3 3.3 0 1 0 6.6 0a3.3 3.3 0 1 0 -6.6 0M1152.8 632.6a3.3 3.3 0 1 0 6.6 0a3.3 3.3 0 1 0 -6.6 0M1406.4 626.0a3.3 3.3 0 1 0 6.6 0a3.3 3.3 0 1 0 -6.6 0M1173.9 629.4a3.3 3.3 0 1 0 6.6 0a3.3 3.3 0 1 0 -6.6 0M1138.1 631.9a3.3 3.3 0 1 0 6.6 0a3.3 3.3 0 1 0 -6.6 0M1244.2 615.2a3.3 3.3 0 1 0 6.6 0a3.3 3.3 0 1 0 -6.6 0M958.8 573.5a3.3 3.3 0 1 0 6.6 0a3.3 3.3 0 1 0 -6.6 0M1342.4 631.9a3.3 3.3 0 1 0 6.6 0a3.3 3.3 0 1 0 -6.6 0M1048.3 594.4a3.3 3.3 0 1 0 6.6 0a3.3 3.3 0 1 0 -6.6 0M883.3 587.4a3.3 3.3 0 1 0 6.6 0a3.3 3.3 0 1 0 -6.6 0M1138.5 591.6a3.3 3.3 0 1 0 6.6 0a3.3 3.3 0 1 0 -6.6 0M1105.6 609.4a3.3 3.3 0 1 0 6.6 0a3.3 3.3 0 1 0 -6.6 0M971.1 575.2a3.3 3.3 0 1 0 6.6 0a3.3 3.3 0 1 0 -6.6 0M1354.8 624.1a3.3 3.3 0 1 0 6.6 0a3.3 3.3 0 1 0 -6.6 0M1078.8 623.4a3.3 3.3 0 1 0 6.6 0a3.3 3.3 0 1 0 -6.6 0M993.0 598.1a3.3 3.3 0 1 0 6.6 0a3.3 3.3 0 1 0 -6.6 0M1016.7 575.9a3.3 3.3 0 1 0 6.6 0a3.3 3.3 0 1 0 -6.6 0" fill="#1c1cff"/><path d="M1039.6 580.0L1049.8 581.4" stroke="#eeee00" stroke-width="2.0" fill="none"/><path d="M1005.7 574.2L1016.7 573.5" stroke="#eeee00" stroke-width="2.0" fill="none"/><path d="M1021.7 574.5L1037.1 574.2" stroke="#eeee00" stroke-width="2.0" fill="none"/><path d="M1035.8 573.6L1051.4 572.7" stroke="#ff0000" stroke-width="2.0" fill="none"/><path d="M1051.6 580.6L1061.9 580.0" stroke="#ff0000" stroke-width="2.0" fill="none"/><path d="M1048.5 576.6L1060.9 576.1" stroke="#eeee00" stroke-width="2.0" fill="none"/><path d="M1017.6 588.2L1029.9 588.3" stroke="#eeee00" stroke-width="2.0" fill="none"/><path d="M1049.1 580.3L1063.2 581.6" stroke="#00e400" stroke-width="2.0" fill="none"/><path d="M1044.5 576.9L1060.0 576.0" stroke="#eeee00" stroke-width="2.0" fill="none"/><path d="M1068.9 579.8L1078.0 580.2" stroke="#eeee00" stroke-width="2.0" fill="none"/><path d="M1008.8 577.1L1020.8 578.0" stroke="#ff0000" stroke-width="2.0" fill="none"/><path d="M1008.0 582.5L1014.1 583.2" stroke="#ff0000" stroke-width="2.0" fill="none"/><path d="M1076.5 587.5L1086.0 588.5" stroke="#ff0000" stroke-width="2.0" fill="none"/><path d="M1064.5 584.3L1079.1 584.0" stroke="#00e400" stroke-width="2.0" fill="none"/><path d="M610.0 593.0L641.7 583.0L695.8 578.0L726.0 574.0" stroke="#e00000" stroke-width="1.8" fill="none"/><path d="M784.0 575.0L831.0 575.0" stroke="#00e000" stroke-width="1.8" fill="none"/><path d="M831.0 575.0L891.7 574.0L964.6 569.6" stroke="#e00000" stroke-width="1.8" fill="none"/><path d="M1198.0 561.2L1216.0 561.2L1216.0 581.8A9.0 1.2 0 0 1 1198.0 581.8Z" fill="url(#cg)"/><path d="M1200.9 560.5L1207.4 561.2L1205.4 582.6L1203.6 582.6Z" fill="url(#wg)"/><ellipse cx="1207.0" cy="561.2" rx="9.0" ry="1.2" fill="url(#tg)"/><path d="M994.0 562.2L1012.0 562.2L1012.0 582.8A9.0 1.2 0 0 1 994.0 582.8Z" fill="url(#cg)"/><path d="M996.9 561.5L1003.4 562.2L1001.4 583.6L999.6 583.6Z" fill="url(#wg)"/><ellipse cx="1003.0" cy="562.2" rx="9.0" ry="1.2" fill="url(#tg)"/><path d="M1162.0 567.2L1181.0 567.2L1181.0 589.8A9.5 1.2 0 0 1 1162.0 589.8Z" fill="url(#cg)"/><path d="M1165.0 566.5L1171.9 567.2L1169.8 590.6L1167.9 590.6Z" fill="url(#wg)"/><ellipse cx="1171.5" cy="567.2" rx="9.5" ry="1.2" fill="url(#tg)"/><path d="M1225.0 569.2L1245.0 569.2L1245.0 590.8A10.0 1.2 0 0 1 1225.0 590.8Z" fill="url(#cg)"/><path d="M1228.2 568.5L1235.4 569.2L1233.2 591.6L1231.2 591.6Z" fill="url(#wg)"/><ellipse cx="1235.0" cy="569.2" rx="10.0" ry="1.2" fill="url(#tg)"/><path d="M1312.0 575.2L1327.0 575.2L1327.0 598.8A7.5 1.2 0 0 1 1312.0 598.8Z" fill="url(#cg)"/><path d="M1314.4 574.5L1319.8 575.2L1318.2 599.6L1316.7 599.6Z" fill="url(#wg)"/><ellipse cx="1319.5" cy="575.2" rx="7.5" ry="1.2" fill="url(#tg)"/><path d="M1295.0 576.2L1316.0 576.2L1316.0 599.8A10.5 1.2 0 0 1 1295.0 599.8Z" fill="url(#cg)"/><path d="M1298.4 575.5L1305.9 576.2L1303.6 600.6L1301.5 600.6Z" fill="url(#wg)"/><ellipse cx="1305.5" cy="576.2" rx="10.5" ry="1.2" fill="url(#tg)"/><path d="M1159.0 606.2L1186.0 606.2L1186.0 637.8A13.5 1.2 0 0 1 1159.0 637.8Z" fill="url(#cg)"/><path d="M1163.3 605.5L1173.0 606.2L1170.1 638.6L1167.4 638.6Z" fill="url(#wg)"/><ellipse cx="1172.5" cy="606.2" rx="13.5" ry="1.2" fill="url(#tg)"/><path d="M1296.0 634.4L1328.0 634.4L1328.0 651.6A16.0 1.4 0 0 1 1296.0 651.6Z" fill="url(#cg)"/><path d="M1301.1 633.6L1312.6 634.4L1309.1 652.6L1305.9 652.6Z" fill="url(#wg)"/><ellipse cx="1312.0" cy="634.4" rx="16.0" ry="1.4" fill="url(#tg)"/><path d="M1287.0 629.5L1318.0 629.5L1318.0 666.5A15.5 1.5 0 0 1 1287.0 666.5Z" fill="url(#cg)"/><path d="M1292.0 628.6L1303.1 629.5L1299.7 667.6L1296.6 667.6Z" fill="url(#wg)"/><ellipse cx="1302.5" cy="629.5" rx="15.5" ry="1.5" fill="url(#tg)"/><path d="M1136.0 634.5L1167.0 634.5L1167.0 672.5A15.5 1.5 0 0 1 1136.0 672.5Z" fill="url(#cg)"/><path d="M1141.0 633.6L1152.1 634.5L1148.7 673.5L1145.6 673.5Z" fill="url(#wg)"/><ellipse cx="1151.5" cy="634.5" rx="15.5" ry="1.5" fill="url(#tg)"/><path d="M1104.0 643.8L1137.0 643.8L1137.0 684.2A16.5 1.8 0 0 1 1104.0 684.2Z" fill="url(#cg)"/><path d="M1109.3 642.7L1121.2 643.8L1117.5 685.5L1114.2 685.5Z" fill="url(#wg)"/><ellipse cx="1120.5" cy="643.8" rx="16.5" ry="1.8" fill="url(#tg)"/><path d="M1481.3 651.4L1517.6 651.4L1517.6 692.2A18.1 2.0 0 0 1 1481.3 692.2Z" fill="url(#cg)"/><path d="M1487.1 650.2L1500.2 651.4L1496.2 693.6L1492.6 693.6Z" fill="url(#wg)"/><ellipse cx="1499.4" cy="651.4" rx="18.1" ry="2.0" fill="url(#tg)"/><path d="M1295.0 653.0L1330.0 653.0L1330.0 695.0A17.5 2.0 0 0 1 1295.0 695.0Z" fill="url(#cg)"/><path d="M1300.6 651.8L1313.2 653.0L1309.3 696.4L1305.8 696.4Z" fill="url(#wg)"/><ellipse cx="1312.5" cy="653.0" rx="17.5" ry="2.0" fill="url(#tg)"/><path d="M1432.0 670.4L1470.0 670.4L1470.0 715.1A19.0 2.4 0 0 1 1432.0 715.1Z" fill="url(#cg)"/><path d="M1438.1 668.9L1451.8 670.4L1447.6 716.8L1443.8 716.8Z" fill="url(#wg)"/><ellipse cx="1451.0" cy="670.4" rx="19.0" ry="2.4" fill="url(#tg)"/><path d="M1400.4 674.4L1440.4 674.4L1440.4 721.7A20.0 2.6 0 0 1 1400.4 721.7Z" fill="url(#cg)"/><path d="M1406.8 672.8L1421.2 674.4L1416.8 723.5L1412.8 723.5Z" fill="url(#wg)"/><ellipse cx="1420.4" cy="674.4" rx="20.0" ry="2.6" fill="url(#tg)"/><path d="M1446.3 676.4L1487.9 676.4L1487.9 724.5A20.8 2.7 0 0 1 1446.3 724.5Z" fill="url(#cg)"/><path d="M1453.0 674.8L1467.9 676.4L1463.4 726.4L1459.2 726.4Z" fill="url(#wg)"/><ellipse cx="1467.1" cy="676.4" rx="20.8" ry="2.7" fill="url(#tg)"/><path d="M1278.0 684.9L1320.0 684.9L1320.0 735.1A21.0 2.9 0 0 1 1278.0 735.1Z" fill="url(#cg)"/><path d="M1284.7 683.1L1299.8 684.9L1295.2 737.1L1291.0 737.1Z" fill="url(#wg)"/><ellipse cx="1299.0" cy="684.9" rx="21.0" ry="2.9" fill="url(#tg)"/><path d="M1358.8 706.5L1406.2 706.5L1406.2 760.6A23.7 3.6 0 0 1 1358.8 760.6Z" fill="url(#cg)"/><path d="M1366.4 704.3L1383.4 706.5L1378.2 763.1L1373.5 763.1Z" fill="url(#wg)"/><ellipse cx="1382.5" cy="706.5" rx="23.7" ry="3.6" fill="url(#tg)"/><path d="M564.0 716.6L609.0 716.6L609.0 773.1A22.5 3.6 0 0 1 564.0 773.1Z" fill="url(#cg)"/><path d="M571.2 714.4L587.4 716.6L582.5 775.6L578.0 775.6Z" fill="url(#wg)"/><ellipse cx="586.5" cy="716.6" rx="22.5" ry="3.6" fill="url(#tg)"/><path d="M1427.2 751.6L1485.0 751.6L1485.0 814.3A28.9 5.3 0 0 1 1427.2 814.3Z" fill="url(#cg)"/><path d="M1436.4 748.4L1457.3 751.6L1450.9 818.0L1445.1 818.0Z" fill="url(#wg)"/><ellipse cx="1456.1" cy="751.6" rx="28.9" ry="5.3" fill="url(#tg)"/><path d="M913.0 786.2L969.5 786.2L969.5 816.3A28.2 5.2 0 0 1 913.0 816.3Z" fill="url(#cg)"/><path d="M922.0 783.1L942.4 786.2L936.2 819.9L930.5 819.9Z" fill="url(#wg)"/><ellipse cx="941.2" cy="786.2" rx="28.2" ry="5.2" fill="url(#tg)"/><path d="M910.7 824.2L974.5 824.2L974.5 904.7A31.9 7.6 0 0 1 910.7 904.7Z" fill="url(#cg)"/><path d="M920.9 819.6L943.9 824.2L936.9 910.0L930.5 910.0Z" fill="url(#wg)"/><ellipse cx="942.6" cy="824.2" rx="31.9" ry="7.6" fill="url(#tg)"/><path d="M1240.2 828.3L1306.9 828.3L1306.9 907.2A33.4 8.0 0 0 1 1240.2 907.2Z" fill="url(#cg)"/><path d="M1250.9 823.5L1274.9 828.3L1267.5 912.8L1260.9 912.8Z" fill="url(#wg)"/><ellipse cx="1273.6" cy="828.3" rx="33.4" ry="8.0" fill="url(#tg)"/><path d="M1183.7 860.1L1256.6 860.1L1256.6 946.9A36.4 9.6 0 0 1 1183.7 946.9Z" fill="url(#cg)"/><path d="M1195.4 854.4L1221.6 860.1L1213.6 953.6L1206.3 953.6Z" fill="url(#wg)"/><ellipse cx="1220.2" cy="860.1" rx="36.4" ry="9.6" fill="url(#tg)"/><path d="M1048.0 907.6L1127.8 907.6L1127.8 1005.8A39.9 12.0 0 0 1 1048.0 1005.8Z" fill="url(#cg)"/><path d="M1060.8 900.4L1089.5 907.6L1080.7 1014.2L1072.7 1014.2Z" fill="url(#wg)"/><ellipse cx="1087.9" cy="907.6" rx="39.9" ry="12.0" fill="url(#tg)"/></g></svg></div><div class="a" id="tbl"><div class="a hdr" style="left:0;width:138px">Name</div><div class="a hdr" style="left:139px;width:138px">Length</div><div class="a" style="left:138px;top:0;width:1px;height:30px;background:#e6e6e6"></div><div class="a" style="left:138px;top:30px;width:1px;height:906px;background:#bdbdbd"></div><div class="a rowline" style="top:59.8px"></div><div class="a cell" style="left:3px;top:37.1px;line-height:16px">LINK-0</div><div class="a cell" style="left:142px;top:37.1px;line-height:16px">20.1960</div><div class="a rowline" style="top:91.0px"></div><div class="a cell" style="left:3px;top:68.3px;line-height:16px">LINK-1</div><div class="a cell" style="left:142px;top:68.3px;line-height:16px">190.9663</div><div class="a rowline" style="top:122.1px"></div><div class="a cell" style="left:3px;top:99.4px;line-height:16px">LINK-2</div><div class="a cell" style="left:142px;top:99.4px;line-height:16px">305.1261</div><div class="a rowline" style="top:153.3px"></div><div class="a cell" style="left:3px;top:130.6px;line-height:16px">LINK-3</div><div class="a cell" style="left:142px;top:130.6px;line-height:16px">126.6871</div><div class="a rowline" style="top:184.4px"></div><div class="a cell" style="left:3px;top:161.7px;line-height:16px">LINK-4</div><div class="a cell" style="left:142px;top:161.7px;line-height:16px">163.0314</div><div class="a rowline" style="top:215.6px"></div><div class="a cell" style="left:3px;top:192.9px;line-height:16px">LINK-5</div><div class="a cell" style="left:142px;top:192.9px;line-height:16px">11.8994</div><div class="a rowline" style="top:246.8px"></div><div class="a cell" style="left:3px;top:224.1px;line-height:16px">LINK-6</div><div class="a cell" style="left:142px;top:224.1px;line-height:16px">181.5998</div><div class="a rowline" style="top:277.9px"></div><div class="a cell" style="left:3px;top:255.2px;line-height:16px">LINK-7</div><div class="a cell" style="left:142px;top:255.2px;line-height:16px">201.2991</div><div class="a rowline" style="top:309.1px"></div><div class="a cell" style="left:3px;top:286.4px;line-height:16px">LINK-8</div><div class="a cell" style="left:142px;top:286.4px;line-height:16px">253.6332</div><div class="a rowline" style="top:340.2px"></div><div class="a cell" style="left:3px;top:317.5px;line-height:16px">LINK-9</div><div class="a cell" style="left:142px;top:317.5px;line-height:16px">184.8947</div><div class="a rowline" style="top:371.4px"></div><div class="a cell" style="left:3px;top:348.7px;line-height:16px">LINK-10</div><div class="a cell" style="left:142px;top:348.7px;line-height:16px">46.2504</div><div class="a rowline" style="top:402.6px"></div><div class="a cell" style="left:3px;top:379.9px;line-height:16px">LINK-11</div><div class="a cell" style="left:142px;top:379.9px;line-height:16px">168.8805</div><div class="a rowline" style="top:433.7px"></div><div class="a cell" style="left:3px;top:411.0px;line-height:16px">LINK-12</div><div class="a cell" style="left:142px;top:411.0px;line-height:16px">151.5740</div><div class="a rowline" style="top:464.9px"></div><div class="a cell" style="left:3px;top:442.2px;line-height:16px">LINK-13</div><div class="a cell" style="left:142px;top:442.2px;line-height:16px">333.1708</div><div class="a rowline" style="top:496.0px"></div><div class="a cell" style="left:3px;top:473.3px;line-height:16px">LINK-14</div><div class="a cell" style="left:142px;top:473.3px;line-height:16px">47.6707</div><div class="a rowline" style="top:527.2px"></div><div class="a cell" style="left:3px;top:504.5px;line-height:16px">LINK-15</div><div class="a cell" style="left:142px;top:504.5px;line-height:16px">84.3808</div><div class="a rowline" style="top:558.4px"></div><div class="a cell" style="left:3px;top:535.7px;line-height:16px">LINK-16</div><div class="a cell" style="left:142px;top:535.7px;line-height:16px">214.2317</div><div class="a rowline" style="top:589.5px"></div><div class="a cell" style="left:3px;top:566.8px;line-height:16px">LINK-17</div><div class="a cell" style="left:142px;top:566.8px;line-height:16px">66.5074</div><div class="a rowline" style="top:620.7px"></div><div class="a cell" style="left:3px;top:598.0px;line-height:16px">LINK-18</div><div class="a cell" style="left:142px;top:598.0px;line-height:16px">309.0489</div><div class="a rowline" style="top:651.8px"></div><div class="a cell" style="left:3px;top:629.1px;line-height:16px">LINK-19</div><div class="a cell" style="left:142px;top:629.1px;line-height:16px">304.9219</div><div class="a rowline" style="top:683.0px"></div><div class="a cell" style="left:3px;top:660.3px;line-height:16px">LINK-20</div><div class="a cell" style="left:142px;top:660.3px;line-height:16px">121.1214</div><div class="a rowline" style="top:714.2px"></div><div class="a cell" style="left:3px;top:691.5px;line-height:16px">LINK-21</div><div class="a cell" style="left:142px;top:691.5px;line-height:16px">389.4826</div><div class="a rowline" style="top:745.3px"></div><div class="a cell" style="left:3px;top:722.6px;line-height:16px">LINK-22</div><div class="a cell" style="left:142px;top:722.6px;line-height:16px">8.6685</div><div class="a rowline" style="top:776.5px"></div><div class="a cell" style="left:3px;top:753.8px;line-height:16px">LINK-23</div><div class="a cell" style="left:142px;top:753.8px;line-height:16px">1023.4452</div><div class="a rowline" style="top:807.6px"></div><div class="a cell" style="left:3px;top:784.9px;line-height:16px">LINK-24</div><div class="a cell" style="left:142px;top:784.9px;line-height:16px">996.6960</div><div class="a rowline" style="top:838.8px"></div><div class="a cell" style="left:3px;top:816.1px;line-height:16px">LINK-25</div><div class="a cell" style="left:142px;top:816.1px;line-height:16px">98.4748</div><div class="a rowline" style="top:870.0px"></div><div class="a cell" style="left:3px;top:847.3px;line-height:16px">LINK-26</div><div class="a cell" style="left:142px;top:847.3px;line-height:16px">1340.7177</div><div class="a rowline" style="top:901.1px"></div><div class="a cell" style="left:3px;top:878.4px;line-height:16px">LINK-27</div><div class="a cell" style="left:142px;top:878.4px;line-height:16px">42.8183</div><div class="a rowline" style="top:932.3px"></div><div class="a cell" style="left:3px;top:909.6px;line-height:16px">LINK-28</div><div class="a cell" style="left:142px;top:909.6px;line-height:16px">902.2263</div><div class="a" style="left:277px;top:0;width:21px;height:935px;background:repeating-conic-gradient(#a0a0a0 0 25%,#f0f0f0 0 50%) 0 0/2px 2px"></div><div class="a" style="left:277px;top:0px;width:21px;height:20px;background:#a0a0a0;border-top:1px solid #fff;border-left:1px solid #fff;border-right:1px solid #7a7a7a;border-bottom:1px solid #7a7a7a"></div><div class="a" style="left:277px;top:21px;width:21px;height:22px;background:#a0a0a0;border-top:1px solid #fff;border-left:1px solid #fff;border-right:1px solid #7a7a7a;border-bottom:1px solid #7a7a7a"></div><div class="a" style="left:282px;top:6px;width:0;height:0;border-left:5px solid transparent;border-right:5px solid transparent;border-bottom:5px solid #000"></div><div class="a" style="left:277px;top:913px;width:21px;height:22px;background:#a0a0a0;border-top:1px solid #fff;border-left:1px solid #fff;border-right:1px solid #7a7a7a;border-bottom:1px solid #7a7a7a"></div><div class="a" style="left:282px;top:922px;width:0;height:0;border-left:5px solid transparent;border-right:5px solid transparent;border-top:5px solid #000"></div></div><div class="a" id="bot"><div class="a radio" style="left:11px;top:17px"></div><div class="a lbl" style="left:34px;top:17px;font-size:12px;color:#111">Nodes</div><div class="a radio on" style="left:148px;top:17px;position:absolute"></div><div class="a lbl" style="left:172px;top:17px;font-size:12px;color:#111">Links</div></div><div class="a" id="panel"><div class="a grp" style="top:25.5px;height:173.5px;border-radius:0 0 4px 4px"></div><div class="a grp" style="top:20px;height:6.5px;width:9px;border-radius:4px 0 0 0"></div><div class="a grp" style="top:20px;height:6.5px;left:111.9px;width:176.1px;border-radius:0 4px 0 0"></div><div class="a grp" style="top:218.5px;height:172.5px;border-radius:0 0 4px 4px"></div><div class="a grp" style="top:213px;height:6.5px;width:9px;border-radius:4px 0 0 0"></div><div class="a grp" style="top:213px;height:6.5px;left:105px;width:183px;border-radius:0 4px 0 0"></div><div class="a grp" style="top:411.5px;height:281.5px;border-radius:0 0 4px 4px"></div><div class="a grp" style="top:406px;height:6.5px;width:9px;border-radius:4px 0 0 0"></div><div class="a grp" style="top:406px;height:6.5px;left:107.1px;width:180.9px;border-radius:0 4px 0 0"></div><div class="a grp" style="top:712.5px;height:78.5px;border-radius:0 0 4px 4px"></div><div class="a grp" style="top:707px;height:6.5px;width:9px;border-radius:4px 0 0 0"></div><div class="a grp" style="top:707px;height:6.5px;left:125.8px;width:162.2px;border-radius:0 4px 0 0"></div><div class="a gt" style="top:12.5px">Node Controls</div><div class="a chk" style="left:20px;top:41.5px"><svg width="13" height="13" style="position:absolute;left:0.5px;top:0.5px"><path d="M2.3 6.8 L5 9.5 L10.8 3.3" fill="none" stroke="#333" stroke-width="1.4"/></svg></div><div class="a lbl" style="left:42px;top:41.5px"><span style="display:inline-block;transform:scaleX(1.0);transform-origin:0 50%">Show Nodes</span></div><div class="a radio " style="left:20px;top:67.5px"></div><div class="a lbl" style="left:43px;top:67.5px"><span style="display:inline-block;transform:scaleX(0.98);transform-origin:0 50%">All Nodes</span></div><div class="a radio on" style="left:20px;top:93.80000000000001px"></div><div class="a lbl" style="left:43px;top:93.80000000000001px"><span style="display:inline-block;transform:scaleX(1.088);transform-origin:0 50%">Bottom 25%</span></div><div class="a radio " style="left:20px;top:120px"></div><div class="a lbl" style="left:43px;top:120px"><span style="display:inline-block;transform:scaleX(1.07);transform-origin:0 50%">25-50%</span></div><div class="a radio " style="left:20px;top:146px"></div><div class="a lbl" style="left:43px;top:146px"><span style="display:inline-block;transform:scaleX(1.07);transform-origin:0 50%">50-75%</span></div><div class="a radio " style="left:20px;top:172.3px"></div><div class="a lbl" style="left:43px;top:172.3px"><span style="display:inline-block;transform:scaleX(1.12);transform-origin:0 50%">Top 25%</span></div><div class="a gt" style="top:205.5px">Link Controls</div><div class="a chk" style="left:20px;top:234.5px"><svg width="13" height="13" style="position:absolute;left:0.5px;top:0.5px"><path d="M2.3 6.8 L5 9.5 L10.8 3.3" fill="none" stroke="#333" stroke-width="1.4"/></svg></div><div class="a lbl" style="left:42px;top:234.5px"><span style="display:inline-block;transform:scaleX(0.964);transform-origin:0 50%">Show Links</span></div><div class="a radio blue" style="left:20px;top:260.5px"></div><div class="a lbl" style="left:43px;top:260.5px"><span style="display:inline-block;transform:scaleX(0.96);transform-origin:0 50%">All Links</span></div><div class="a radio " style="left:20px;top:286.8px"></div><div class="a lbl" style="left:43px;top:286.8px"><span style="display:inline-block;transform:scaleX(1.088);transform-origin:0 50%">Bottom 25%</span></div><div class="a radio " style="left:20px;top:313px"></div><div class="a lbl" style="left:43px;top:313px"><span style="display:inline-block;transform:scaleX(1.07);transform-origin:0 50%">25-50%</span></div><div class="a radio " style="left:20px;top:339px"></div><div class="a lbl" style="left:43px;top:339px"><span style="display:inline-block;transform:scaleX(1.07);transform-origin:0 50%">50-75%</span></div><div class="a radio " style="left:20px;top:365.3px"></div><div class="a lbl" style="left:43px;top:365.3px"><span style="display:inline-block;transform:scaleX(1.12);transform-origin:0 50%">Top 25%</span></div><div class="a gt" style="top:398.29999999999995px">Color Legend</div><div class="a pillh" style="top:424.5px">Nodes:</div><div class="a pill" style="top:448.5px"><div class="a dot" style="background:#0000ff"></div><div class="a tp" style="width:94px"><span style="display:inline-block;transform:scaleX(1.088);transform-origin:0 50%">Bottom 25%</span></div></div><div class="a pill" style="top:474.79999999999995px"><div class="a dot" style="background:#00ff00"></div><div class="a tp" style="width:62px"><span style="display:inline-block;transform:scaleX(1.07);transform-origin:0 50%">25-50%</span></div></div><div class="a pill" style="top:501px"><div class="a dot" style="background:#ffff00"></div><div class="a tp" style="width:62px"><span style="display:inline-block;transform:scaleX(1.07);transform-origin:0 50%">50-75%</span></div></div><div class="a pill" style="top:527.2px"><div class="a dot" style="background:#ff0000"></div><div class="a tp" style="width:72px"><span style="display:inline-block;transform:scaleX(1.12);transform-origin:0 50%">Top 25%</span></div></div><div class="a pillh" style="top:560.8px">Links:</div><div class="a pill" style="top:585px"><div class="a dot" style="background:#3030d0"></div><div class="a tp" style="width:94px"><span style="display:inline-block;transform:scaleX(1.088);transform-origin:0 50%">Bottom 25%</span></div></div><div class="a pill" style="top:611.2px"><div class="a dot" style="background:#30c030"></div><div class="a tp" style="width:62px"><span style="display:inline-block;transform:scaleX(1.07);transform-origin:0 50%">25-50%</span></div></div><div class="a pill" style="top:637.4px"><div class="a dot" style="background:#c8c830"></div><div class="a tp" style="width:62px"><span style="display:inline-block;transform:scaleX(1.07);transform-origin:0 50%">50-75%</span></div></div><div class="a pill" style="top:663.5px"><div class="a dot" style="background:#c83030"></div><div class="a tp" style="width:72px"><span style="display:inline-block;transform:scaleX(1.12);transform-origin:0 50%">Top 25%</span></div></div><div class="a gt" style="top:699.8px">Storage Controls</div><div class="a chk" style="left:20px;top:731px"><svg width="13" height="13" style="position:absolute;left:0.5px;top:0.5px"><path d="M2.3 6.8 L5 9.5 L10.8 3.3" fill="none" stroke="#333" stroke-width="1.4"/></svg></div><div class="a lbl" style="left:42px;top:731px"><span style="display:inline-block;transform:scaleX(1.044);transform-origin:0 50%">Show Tanks</span></div><div class="a chk" style="left:20px;top:760.5px"><svg width="13" height="13" style="position:absolute;left:0.5px;top:0.5px"><path d="M2.3 6.8 L5 9.5 L10.8 3.3" fill="none" stroke="#333" stroke-width="1.4"/></svg></div><div class="a lbl" style="left:42px;top:760.5px"><span style="display:inline-block;transform:scaleX(1.0);transform-origin:0 50%">Show Reservoirs</span></div></div><svg class="a" style="left:116px;top:384px" width="14" height="22"><path d="M1 1 L1 17 L4.8 13.2 L7.5 19.5 L10 18.5 L7.3 12.3 L12.5 12.3 Z" fill="#fff" stroke="#000" stroke-width="1"/></svg></body></html>
